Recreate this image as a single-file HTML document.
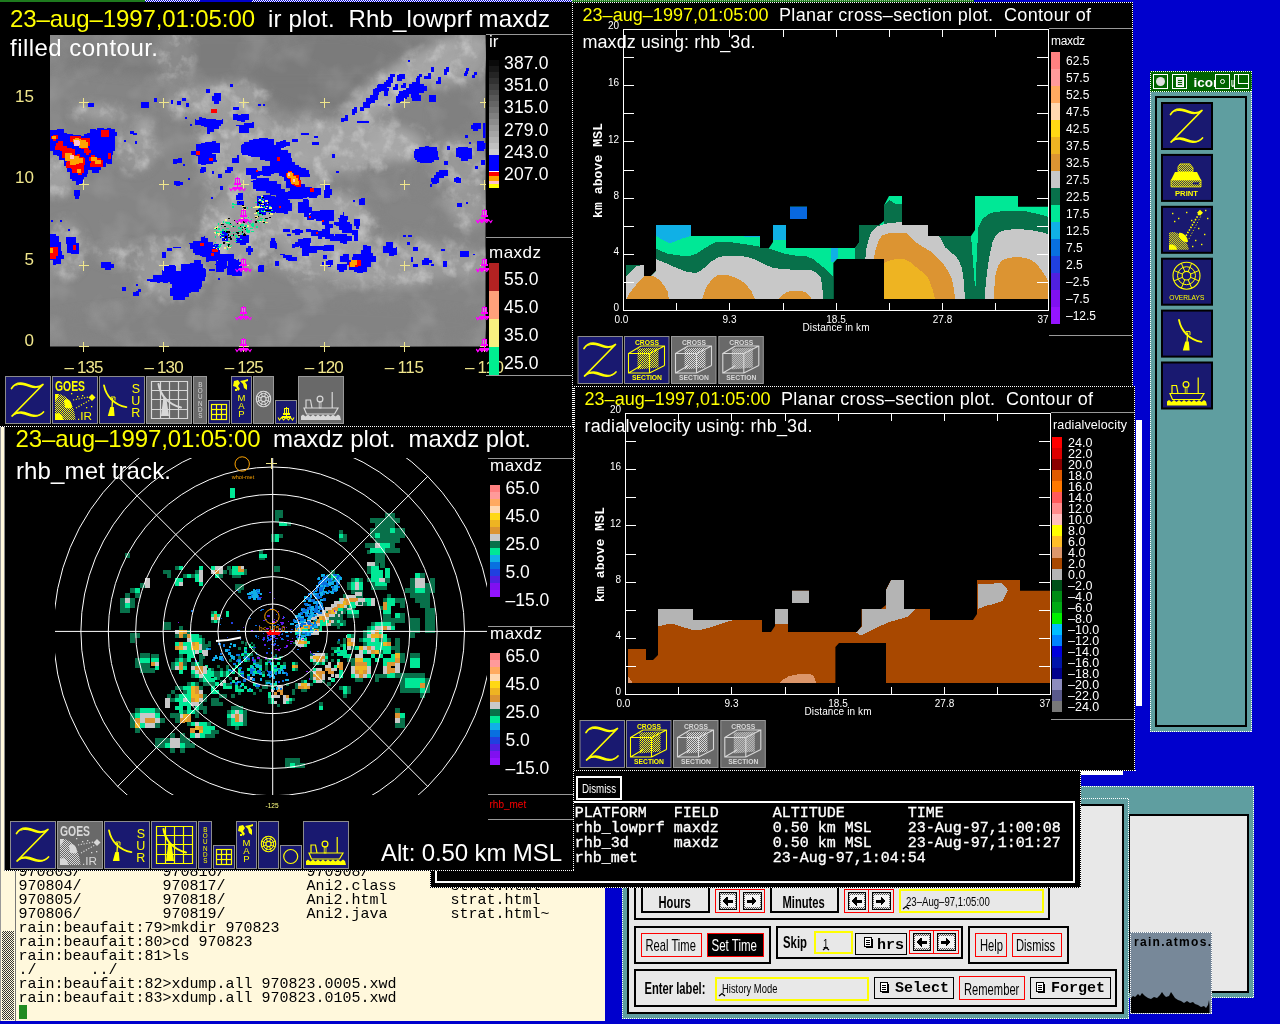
<!DOCTYPE html><html><head><meta charset="utf-8"><title>zebra display</title><style>html,body{margin:0;padding:0;background:#0000cd;overflow:hidden}svg{display:block;will-change:transform}text{font-family:"Liberation Sans",sans-serif;white-space:pre}.m{font-family:"Liberation Mono",monospace}.s{font-family:"Liberation Serif",serif}</style></head><body>
<svg width="1280" height="1024" viewBox="0 0 1280 1024">
<defs><pattern id="dy" width="2" height="2" patternUnits="userSpaceOnUse"><rect x="0" y="0" width="1" height="1" fill="#ffff00"/><rect x="1" y="1" width="1" height="1" fill="#ffff00"/></pattern><pattern id="dg" width="2" height="2" patternUnits="userSpaceOnUse"><rect x="0" y="0" width="1" height="1" fill="#d8d8d8"/><rect x="1" y="1" width="1" height="1" fill="#d8d8d8"/></pattern><pattern id="dk" width="2" height="2" patternUnits="userSpaceOnUse"><rect width="2" height="2" fill="#bbb"/><rect x="0" y="0" width="1" height="1" fill="#333"/><rect x="1" y="1" width="1" height="1" fill="#333"/></pattern><clipPath id="irclip"><rect x="50" y="35" width="435.5" height="311.5"/></clipPath><filter id="irblur" x="-10%" y="-10%" width="120%" height="120%"><feGaussianBlur stdDeviation="5"/></filter><filter id="irtex" x="0" y="0" width="100%" height="100%"><feTurbulence type="fractalNoise" baseFrequency="0.07" numOctaves="4" seed="3" result="n"/><feColorMatrix type="matrix" values="0 0 0 0 0.8  0 0 0 0 0.8  0 0 0 0 0.8  2.8 0 0 0 -1.3"/></filter><filter id="irtex2" x="0" y="0" width="100%" height="100%"><feTurbulence type="fractalNoise" baseFrequency="0.03" numOctaves="3" seed="11"/><feColorMatrix type="matrix" values="0 0 0 0 0.75  0 0 0 0 0.75  0 0 0 0 0.75  3 0 0 0 -1.3"/></filter><clipPath id="rdclip"><rect x="55" y="458" width="432" height="337"/></clipPath><clipPath id="xsclip"><path d="M626,299 V265 H644 V276 H651 L656,271 V225 H691 V236 H760 V248 H769 L773,242 V225 H786 V248 H855 L859.5,242 V225 H879 L884,221 V205.5 L889,196 H902 V225 H928 V236 H971 L975,230 V196 H1018 V206.7 H1048.5 V299 H884 V259 H837 L833.4,263 V299 Z M790,206.7 H807 V219 H790Z"/></clipPath><pattern id="sbd" width="2" height="2" patternUnits="userSpaceOnUse"><rect width="2" height="2" fill="#fff8dc"/><rect x="0" y="0" width="1" height="1" fill="#333"/><rect x="1" y="1" width="1" height="1" fill="#333"/></pattern><pattern id="btd" width="2" height="2" patternUnits="userSpaceOnUse"><rect width="2" height="2" fill="#e8e8e8"/><rect x="0" y="0" width="1" height="1" fill="#555"/><rect x="1" y="1" width="1" height="1" fill="#555"/></pattern></defs>
<rect x="0" y="0" width="1280" height="1024" fill="#0000cd" />
<g shape-rendering="crispEdges"><rect x="0" y="0" width="145" height="2" fill="#1e7a1e"/><line x1="145" y1="0.5" x2="572" y2="0.5" stroke="#fff" stroke-dasharray="1 1"/><line x1="146" y1="1.5" x2="572" y2="1.5" stroke="#fff" stroke-dasharray="1 1"/><rect x="200" y="0" width="52" height="2" fill="#0000cd"/><rect x="572" y="0" width="402" height="2" fill="#1e7a1e"/><line x1="572" y1="0.5" x2="974" y2="0.5" stroke="#9c9" stroke-dasharray="1 1"/></g>
<g shape-rendering="crispEdges"><rect x="1000" y="786" width="254" height="212" fill="#5f9ea0"/><rect x="1129" y="813.5" width="120" height="179" fill="#000"/><rect x="1130" y="815.5" width="117" height="175" fill="#e8e8e8"/><g stroke="#fff" stroke-dasharray="1 1"><line x1="1000" y1="786.5" x2="1254" y2="786.5"/><line x1="1253.5" y1="786" x2="1253.5" y2="998"/><line x1="1128" y1="997.5" x2="1254" y2="997.5"/></g></g>
<g shape-rendering="crispEdges"><rect x="622" y="798" width="507" height="221" fill="#5f9ea0"/><rect x="627" y="804" width="497" height="210" fill="#000"/><rect x="629" y="806" width="493" height="206" fill="#e8e8e8"/><g stroke="#fff" stroke-dasharray="1 1" fill="none"><rect x="622.5" y="798.5" width="506" height="220"/></g><rect x="635" y="861" width="414" height="58" fill="none" stroke="#000" stroke-width="2"/><rect x="642" y="881" width="67" height="31" fill="none" stroke="#000" stroke-width="2"/><rect x="771" y="881" width="67" height="31" fill="none" stroke="#000" stroke-width="2"/><rect x="715.5" y="889.5" width="24" height="23" fill="#e8e8e8" stroke="#ff0000" stroke-width="1"/><rect x="718.5" y="892" width="18" height="18" fill="url(#btd)"/><rect x="720.5" y="895" width="14" height="12" fill="#f4f4f4"/><rect x="719.0" y="892.5" width="17" height="17" fill="none" stroke="#000" stroke-width="1"/><path d="M722.5,901.0 l5,-4.5 v3 h5 v3 h-5 v3z" fill="#000"/><rect x="739.5" y="889.5" width="25" height="23" fill="#e8e8e8" stroke="#ff0000" stroke-width="1"/><rect x="742.5" y="892" width="19" height="18" fill="url(#btd)"/><rect x="744.5" y="895" width="15" height="12" fill="#f4f4f4"/><rect x="743.0" y="892.5" width="18" height="17" fill="none" stroke="#000" stroke-width="1"/><path d="M757.0,901.0 l-5,-4.5 v3 h-5 v3 h5 v3z" fill="#000"/><rect x="844.5" y="889.5" width="24" height="23" fill="#e8e8e8" stroke="#ff0000" stroke-width="1"/><rect x="847.5" y="892" width="18" height="18" fill="url(#btd)"/><rect x="849.5" y="895" width="14" height="12" fill="#f4f4f4"/><rect x="848.0" y="892.5" width="17" height="17" fill="none" stroke="#000" stroke-width="1"/><path d="M851.5,901.0 l5,-4.5 v3 h5 v3 h-5 v3z" fill="#000"/><rect x="868.5" y="889.5" width="25" height="23" fill="#e8e8e8" stroke="#ff0000" stroke-width="1"/><rect x="871.5" y="892" width="19" height="18" fill="url(#btd)"/><rect x="873.5" y="895" width="15" height="12" fill="#f4f4f4"/><rect x="872.0" y="892.5" width="18" height="17" fill="none" stroke="#000" stroke-width="1"/><path d="M886.0,901.0 l-5,-4.5 v3 h-5 v3 h5 v3z" fill="#000"/><rect x="899.5" y="890" width="143" height="22" fill="#e8e8e8" stroke="#ffff00" stroke-width="2"/><rect x="635" y="927" width="135" height="36" fill="none" stroke="#000" stroke-width="2"/><rect x="641.5" y="933.5" width="60" height="23" fill="#e8e8e8" stroke="#ff0000"/><rect x="707.5" y="933.5" width="56" height="23" fill="#000" stroke="#ff0000"/><rect x="777" y="927" width="185" height="31" fill="none" stroke="#000" stroke-width="2"/><rect x="815" y="931.5" width="37" height="21.5" fill="#e8e8e8" stroke="#ffff00" stroke-width="2"/><rect x="855.5" y="933.5" width="51" height="21" fill="#e8e8e8" stroke="#000"/><rect x="909.5" y="930.5" width="24" height="23" fill="#e8e8e8" stroke="#ff0000" stroke-width="1"/><rect x="912.5" y="933" width="18" height="18" fill="url(#btd)"/><rect x="914.5" y="936" width="14" height="12" fill="#f4f4f4"/><rect x="913.0" y="933.5" width="17" height="17" fill="none" stroke="#000" stroke-width="1"/><path d="M916.5,942.0 l5,-4.5 v3 h5 v3 h-5 v3z" fill="#000"/><rect x="933.5" y="930.5" width="25" height="23" fill="#e8e8e8" stroke="#ff0000" stroke-width="1"/><rect x="936.5" y="933" width="19" height="18" fill="url(#btd)"/><rect x="938.5" y="936" width="15" height="12" fill="#f4f4f4"/><rect x="937.0" y="933.5" width="18" height="17" fill="none" stroke="#000" stroke-width="1"/><path d="M951.0,942.0 l-5,-4.5 v3 h-5 v3 h5 v3z" fill="#000"/><rect x="969" y="927" width="99" height="36" fill="none" stroke="#000" stroke-width="2"/><rect x="975.5" y="933.5" width="31" height="23" fill="#e8e8e8" stroke="#ff0000"/><rect x="1012.5" y="933.5" width="49" height="23" fill="#e8e8e8" stroke="#ff0000"/><rect x="635" y="970" width="481" height="36" fill="none" stroke="#000" stroke-width="2"/><rect x="716" y="977.5" width="152" height="22" fill="#e8e8e8" stroke="#ffff00" stroke-width="2"/><rect x="874.5" y="977.5" width="79" height="21" fill="#e8e8e8" stroke="#000"/><rect x="959.5" y="976.5" width="65" height="23" fill="#e8e8e8" stroke="#ff0000"/><rect x="1030.5" y="977.5" width="80" height="21" fill="#e8e8e8" stroke="#000"/><rect x="864.5" y="937.5" width="7" height="9" fill="#fff" stroke="#000" stroke-width="1"/><rect x="866" y="947" width="7" height="1" fill="#000"/><rect x="872" y="939" width="1" height="9" fill="#000"/><rect x="866" y="940" width="4" height="1" fill="#000"/><rect x="866" y="942" width="4" height="1" fill="#000"/><rect x="866" y="944" width="4" height="1" fill="#000"/><rect x="880.5" y="982.5" width="7" height="9" fill="#fff" stroke="#000" stroke-width="1"/><rect x="882" y="992" width="7" height="1" fill="#000"/><rect x="888" y="984" width="1" height="9" fill="#000"/><rect x="882" y="985" width="4" height="1" fill="#000"/><rect x="882" y="987" width="4" height="1" fill="#000"/><rect x="882" y="989" width="4" height="1" fill="#000"/><rect x="1036.5" y="982.5" width="7" height="9" fill="#fff" stroke="#000" stroke-width="1"/><rect x="1038" y="992" width="7" height="1" fill="#000"/><rect x="1044" y="984" width="1" height="9" fill="#000"/><rect x="1038" y="985" width="4" height="1" fill="#000"/><rect x="1038" y="987" width="4" height="1" fill="#000"/><rect x="1038" y="989" width="4" height="1" fill="#000"/></g><text transform="translate(658.5,907.5) scale(0.7,1)" font-size="16" fill="#000" font-weight="bold">Hours</text><text transform="translate(782.5,907.5) scale(0.7,1)" font-size="16" fill="#000" font-weight="bold">Minutes</text><text transform="translate(906,906) scale(0.8,1)" font-size="12" fill="#000">23–Aug–97,1:05:00</text><path d="M903,909 l3,-2.5 l3,2.5" fill="none" stroke="#000" stroke-width="1.3"/><text transform="translate(645.5,951) scale(0.7,1)" font-size="16" fill="#000">Real Time</text><text transform="translate(711.5,951) scale(0.72,1)" font-size="16" fill="#fff">Set Time</text><text transform="translate(783,948) scale(0.71,1)" font-size="16" fill="#000" font-weight="bold">Skip</text><text transform="translate(823,948) scale(0.8,1)" font-size="12" fill="#000">1</text><path d="M823,950 l3,-2.5 l3,2.5" fill="none" stroke="#000" stroke-width="1.3"/><text class="m" x="877" y="949" font-size="15" font-weight="bold" fill="#000">hrs</text><text transform="translate(980,951) scale(0.7,1)" font-size="16" fill="#000">Help</text><text transform="translate(1016,951) scale(0.7,1)" font-size="16" fill="#000">Dismiss</text><text transform="translate(644.5,993.5) scale(0.7,1)" font-size="16" fill="#000" font-weight="bold">Enter label:</text><text transform="translate(722,993) scale(0.785,1)" font-size="12" fill="#000">History Mode</text><path d="M719,996 l3,-2.5 l3,2.5" fill="none" stroke="#000" stroke-width="1.3"/><text class="m" x="895" y="992" font-size="15" font-weight="bold" fill="#000" textLength="54" lengthAdjust="spacing">Select</text><text transform="translate(964,994.5) scale(0.7,1)" font-size="16" fill="#000">Remember</text><text class="m" x="1051" y="992" font-size="15" font-weight="bold" fill="#000" textLength="54" lengthAdjust="spacing">Forget</text>
<g shape-rendering="crispEdges"><rect x="1130" y="932" width="82" height="82" fill="#778899"/><g stroke="#fff" stroke-dasharray="1 1" fill="none"><rect x="1130.5" y="932.5" width="81" height="81"/></g></g><path d="M1131,1013 V998 l2,-2 l2,1 l3,-3 l2,2 l2,-3 l3,3 l3,2 l3,1 l3,-2 l3,1 l3,-3 l2,-3 l2,3 l2,2 l3,-1 l2,-4 l2,3 l2,3 l3,2 l3,1 l3,2 l3,-2 l3,2 l3,-1 l2,2 l3,1 l3,2 l3,-1 l2,2 l2,-3 l1,-5 l0.5,5 V1013Z" fill="#000"/><text x="1134" y="946" font-size="12" font-weight="bold" fill="#000" textLength="77" lengthAdjust="spacing">rain.atmos.</text>
<g shape-rendering="crispEdges"><rect x="0" y="427" width="605" height="594" fill="#fff8dc"/><rect x="0" y="427" width="1" height="594" fill="#999"/><rect x="15" y="870" width="1" height="151" fill="#777"/><rect x="2" y="931" width="12" height="89" fill="url(#sbd)"/><rect x="18.5" y="1005" width="8.5" height="14" fill="#228b22"/></g><text class="m" x="18.5" y="875.5" font-size="15" fill="#000">970803/         970816/         970908/         strat.htm</text><text class="m" x="18.5" y="889.5" font-size="15" fill="#000">970804/         970817/         Ani2.class      strat.html</text><text class="m" x="18.5" y="903.5" font-size="15" fill="#000">970805/         970818/         Ani2.html       strat.html</text><text class="m" x="18.5" y="917.5" font-size="15" fill="#000">970806/         970819/         Ani2.java       strat.html~</text><text class="m" x="18.5" y="931.5" font-size="15" fill="#000">rain:beaufait:79&gt;mkdir 970823</text><text class="m" x="18.5" y="945.5" font-size="15" fill="#000">rain:beaufait:80&gt;cd 970823</text><text class="m" x="18.5" y="959.5" font-size="15" fill="#000">rain:beaufait:81&gt;ls</text><text class="m" x="18.5" y="973.5" font-size="15" fill="#000">./      ../</text><text class="m" x="18.5" y="987.5" font-size="15" fill="#000">rain:beaufait:82&gt;xdump.all 970823.0005.xwd</text><text class="m" x="18.5" y="1001.5" font-size="15" fill="#000">rain:beaufait:83&gt;xdump.all 970823.0105.xwd</text>
<g shape-rendering="crispEdges"><rect x="430" y="771" width="651" height="117" fill="#000"/><g stroke="#fff" stroke-dasharray="1 1" fill="none"><rect x="430.5" y="770.5" width="650" height="117"/></g><rect x="436" y="801.5" width="638" height="80" fill="none" stroke="#fff" stroke-width="2"/><rect x="577" y="776.5" width="44" height="22" fill="none" stroke="#fff" stroke-width="2"/></g><text transform="translate(582,793) scale(0.78,1)" font-size="12.5" fill="#fff">Dismiss</text><text class="m" x="574.8" y="816.5" font-size="15" fill="#fff" stroke="#fff" stroke-width="0.35">PLATFORM   FIELD      ALTITUDE       TIME</text><text class="m" x="574.8" y="831.5" font-size="15" fill="#fff" stroke="#fff" stroke-width="0.35">rhb_lowprf maxdz      0.50 km MSL    23-Aug-97,1:00:08</text><text class="m" x="574.8" y="846.5" font-size="15" fill="#fff" stroke="#fff" stroke-width="0.35">rhb_3d     maxdz      0.50 km MSL    23-Aug-97,1:01:27</text><text class="m" x="574.8" y="861.5" font-size="15" fill="#fff" stroke="#fff" stroke-width="0.35">rhb_met               23-Aug-97,1:04:54</text>
<g shape-rendering="crispEdges"><rect x="1150" y="71" width="102" height="661" fill="#5f9ea0"/><rect x="1150" y="71" width="102" height="21" fill="#006400"/><g stroke="#fff" stroke-dasharray="1 1" fill="none"><rect x="1150.5" y="71.5" width="101" height="660"/><line x1="1150" y1="91.5" x2="1252" y2="91.5"/></g><rect x="1156" y="97" width="90" height="629" fill="none" stroke="#000" stroke-width="2"/><rect x="1153.5" y="74.5" width="14" height="14" fill="#006400" stroke="#fff" stroke-width="1"/><rect x="1172.5" y="74.5" width="14" height="14" fill="#006400" stroke="#fff" stroke-width="1"/><rect x="1215.5" y="74.5" width="14" height="14" fill="#006400" stroke="#fff" stroke-width="1"/><rect x="1234.5" y="74.5" width="14" height="14" fill="#006400" stroke="#fff" stroke-width="1"/></g><circle cx="1160.5" cy="81.5" r="4.5" fill="#ddd"/><rect x="1176.5" y="77.5" width="7" height="9" fill="#ddd" stroke="#fff" stroke-width="1"/><path d="M1178,80.5 h4 M1178,82.5 h4 M1178,84.5 h4" stroke="#006400" stroke-width="1"/><text x="1193.5" y="87" font-size="13.5" font-weight="bold" fill="#fff">icon</text><rect x="1215.5" y="75" width="36" height="14" fill="#006400"/><g shape-rendering="crispEdges"><rect x="1215.5" y="74.5" width="14" height="14" fill="#006400" stroke="#fff"/><rect x="1234.5" y="74.5" width="14" height="14" fill="#006400" stroke="#fff"/><rect x="1238.5" y="74.5" width="10" height="9" fill="#006400" stroke="#fff"/></g><text x="1231" y="87" font-size="13" font-weight="bold" fill="#fff" textLength="4" lengthAdjust="spacingAndGlyphs">u</text><circle cx="1222.5" cy="81.5" r="2" fill="none" stroke="#fff"/><g transform="translate(1161,102.0)"><rect x="1" y="1" width="50" height="46" fill="#191970" stroke="#000" stroke-width="2"/><g transform="translate(3,0)"><path d="M6.5,12.5 C9,8.5 14,6.2 20,7.8 C26,9.5 31,13.5 38,8.5 L7,40 C12,35.5 17,35 23,37.8 C29,40.5 34,41 38.5,36" fill="none" stroke="#ffff00" stroke-width="1.7" stroke-linejoin="round" stroke-linecap="round"/><path d="M9,10.5 C13,7 18,7 22,8.5 C27,10.5 31,12.5 36,10 C31,14 26,11.5 21,10 C16,8.5 12,9 9,10.5Z M9,38.5 C13,35 18,35.5 23,37.8 C28,40 33,40.5 37,37.5 C33,42 27,41.5 22,39.5 C17,37.5 13,37 9,38.5Z" fill="#ffff00"/></g></g><g transform="translate(1161,153.9)"><rect x="1" y="1" width="50" height="46" fill="#191970" stroke="#000" stroke-width="2"/><g transform="translate(3,0)"><path d="M16,10 h10 l3,4 v4 h-15 v-5z" fill="url(#dy)" stroke="#ffff00" stroke-width="0.8"/><path d="M11,18 h22 l4,8 h-30z" fill="#ffff00"/><path d="M7,26 h30 v7 h-30z" fill="url(#dy)" stroke="#ffff00" stroke-width="0.8"/><rect x="29" y="28.5" width="6" height="2" fill="#191970"/><text x="22.5" y="42.5" font-size="7.5" font-weight="bold" fill="#ffff00" text-anchor="middle" textLength="23" lengthAdjust="spacingAndGlyphs">PRINT</text></g></g><g transform="translate(1161,205.8)"><rect x="1" y="1" width="50" height="46" fill="#191970" stroke="#000" stroke-width="2"/><g transform="translate(3,0)"><path d="M5,44 L5,27 C12,24 22,30 25,44 Z" fill="url(#dy)"/><path d="M15,27 C19,26 24,31 24,36 C21,37 17,35 15,31Z M5,39 C9,38 13,40 13,44 L5,44Z" fill="#ffff00"/><path d="M22,30 L35,8" stroke="#ffff00" stroke-width="1.6" stroke-dasharray="1.5 1.5"/><path d="M25,33 L37,10" stroke="#ffff00" stroke-width="1" stroke-dasharray="1 2"/><path d="M36,4 l3,3 l-3,3 l-3,-3z" fill="#ffff00"/><rect x="8" y="7" width="1.4" height="1.4" fill="#ffff00"/><rect x="14" y="12" width="1.4" height="1.4" fill="#ffff00"/><rect x="22" y="6" width="1.4" height="1.4" fill="#ffff00"/><rect x="27" y="14" width="1.4" height="1.4" fill="#ffff00"/><rect x="41" y="4" width="1.4" height="1.4" fill="#ffff00"/><rect x="43" y="12" width="1.4" height="1.4" fill="#ffff00"/><rect x="34" y="22" width="1.4" height="1.4" fill="#ffff00"/><rect x="40" y="28" width="1.4" height="1.4" fill="#ffff00"/><rect x="31" y="34" width="1.4" height="1.4" fill="#ffff00"/><rect x="37" y="38" width="1.4" height="1.4" fill="#ffff00"/><rect x="28" y="40" width="1.4" height="1.4" fill="#ffff00"/><rect x="10" y="15" width="1.4" height="1.4" fill="#ffff00"/></g></g><g transform="translate(1161,257.7)"><rect x="1" y="1" width="50" height="46" fill="#191970" stroke="#000" stroke-width="2"/><g transform="translate(3,0)"><circle cx="22.5" cy="18" r="13.5" fill="none" stroke="#ffff00" stroke-width="1.1"/><circle cx="22.5" cy="18" r="9" fill="none" stroke="#ffff00" stroke-width="1"/><circle cx="22.5" cy="18" r="4.3" fill="none" stroke="#ffff00" stroke-width="1.1"/><line x1="26.5" y1="19.6" x2="35.0" y2="23.2" stroke="#ffff00" stroke-width="1"/><line x1="24.1" y1="22.0" x2="27.7" y2="30.5" stroke="#ffff00" stroke-width="1"/><line x1="20.9" y1="22.0" x2="17.3" y2="30.5" stroke="#ffff00" stroke-width="1"/><line x1="18.5" y1="19.6" x2="10.0" y2="23.2" stroke="#ffff00" stroke-width="1"/><line x1="18.5" y1="16.4" x2="10.0" y2="12.8" stroke="#ffff00" stroke-width="1"/><line x1="20.9" y1="14.0" x2="17.3" y2="5.5" stroke="#ffff00" stroke-width="1"/><line x1="24.1" y1="14.0" x2="27.7" y2="5.5" stroke="#ffff00" stroke-width="1"/><line x1="26.5" y1="16.4" x2="35.0" y2="12.8" stroke="#ffff00" stroke-width="1"/><text x="22.8" y="42.5" font-size="7.5" fill="#ffff00" text-anchor="middle" textLength="35" lengthAdjust="spacingAndGlyphs">OVERLAYS</text></g></g><g transform="translate(1161,309.6)"><rect x="1" y="1" width="50" height="46" fill="#191970" stroke="#000" stroke-width="2"/><g transform="translate(3,0)"><g transform="translate(10,1) scale(1.0)"><path d="M5,9.4 C7,20 15,29 27.4,31.2" fill="none" stroke="#ffff00" stroke-width="1.8" stroke-linecap="round"/><path d="M11.3,31 L14.8,31 L15.6,40 L8.8,40 Z" fill="#ffff00"/><path d="M13.6,22 L13,32" stroke="#ffff00" stroke-width="1.3"/><path d="M12,24 v-3 h4 v3.5" fill="none" stroke="#ffff00" stroke-width="1"/></g></g></g><g transform="translate(1161,361.5)"><rect x="1" y="1" width="50" height="46" fill="#191970" stroke="#000" stroke-width="2"/><g transform="translate(3,0)"><path d="M6,32 L40,32 L36.5,38 L8.5,38 Z" fill="none" stroke="#ffff00" stroke-width="1.2"/><path d="M8,32 L8,24 L12.5,24 L14,32" fill="none" stroke="#ffff00" stroke-width="1.2"/><circle cx="22" cy="23" r="2.9" fill="none" stroke="#ffff00" stroke-width="1.2"/><rect x="21.2" y="26" width="1.8" height="6" fill="none" stroke="#ffff00" stroke-width="0.8"/><line x1="34.2" y1="16" x2="34.2" y2="32" stroke="#ffff00" stroke-width="1.2"/><path d="M3,44 L3,40 l2,-1.5 l2.5,2 l2.5,-2 l2.5,2 l2.5,-2 l2.5,2 l2.5,-2 l2.5,2 l2.5,-2 l2.5,2 l2.5,-2 l2.5,2 l2.5,-2 l2.5,2 l2.5,-2 l2,1.5 L43,44 Z" fill="#ffff00"/></g></g>
<g shape-rendering="crispEdges"><rect x="1136" y="420" width="6" height="286" fill="#fff"/><rect x="1081" y="771" width="42" height="4" fill="#fff"/><line x1="1123" y1="770.5" x2="1136" y2="770.5" stroke="#fff" stroke-dasharray="1 1"/><rect x="573" y="387" width="1" height="40" fill="#000"/><line x1="573.5" y1="388" x2="573.5" y2="427" stroke="#fff" stroke-dasharray="1 1"/></g>
<g transform="translate(0,0)"><rect x="572" y="2" width="561" height="385" fill="#000"/><g clip-path="url(#xsclip)" shape-rendering="crispEdges"><rect x="620" y="190" width="435" height="112" fill="#00e896"/><rect x="790" y="206" width="18" height="14" fill="#0868e0"/><path d="M656,225 H691 V236 L682,238.5 L669.7,243.6 L656,236Z M773,225 H786 V239.5 H773Z M830.8,248 H838 V258 L833,262 H830.8Z M744,235 h16 v1.5 h-16z" fill="#10b0e6"/><path d="M626,265 H644 V300 H626Z M656,248.7 L667.7,253.8 L680,255.5 L690,255.9 L696,254 L702.5,249.7 L710,245 L716.9,241.5 L725,241.5 L733.3,242.5 L747,244.5 L760,246.6 L770,248.7 L784.5,253.8 L795,255.5 L805,255.9 L813,259 L823,267 L832.7,276.4 L833.4,300 L656,300Z M855,259 V247.7 L859.5,241.5 V225 H884 V205.5 L889,200 L895,203.5 L902,204.5 V225 H928 V236 H971 L971.2,237.4 L973,262 L975.3,290.7 L976.5,262 L978.4,227.2 L982.5,219 L990.7,212.8 L1005,210.8 L1025.5,211.2 L1040,214.5 L1049,217 V300 H855Z" fill="#08704a"/><path d="M626,276.4 L631,271 L637,266 L643.7,265 H644 V300 H626Z M648,280 L657,268 V280Z M656,259 L667.7,264 L678,268.5 L688,272.3 L696.4,272.7 L701,270.5 L706.6,266 L712,261 L719,257 L726,255.8 L733.3,255.5 L740,256 L747.6,257 L754,259 L760,262 L767,265.5 L774.3,268.2 L790,269.5 L811.2,270.2 L816,272.5 L820.4,276.4 L822,285 L823.5,300 L656,300Z M865.2,259 L866.6,247.7 L868.5,240 L870.7,233.3 L874,229 L877.9,226.1 L884,224 L890.2,223 L902,222 V225 H928 V236 L939.4,236.4 L942,241 L945.6,247.7 L951,252.5 L955.8,255.9 L959.5,262 L962,268.2 L964,283 L965,300 H865Z M984.5,300 L985.8,283 L987.6,268.2 L990,253 L992.7,241.5 L995.5,236 L998.9,232.3 L1005,230.3 L1013.2,229.2 L1022,229.3 L1031.7,230.2 L1040,231.8 L1049,234.3 V300Z" fill="#c8c8c8"/><path d="M626.2,300 L630,292.5 L634.9,286.6 L639,281 L644,276.4 L649,275.5 L653.7,276 L657.5,278.5 L661.5,282.5 L665,287 L667.7,291.7 L669,300Z M702,300 L704,293 L706.6,286.6 L711,280.5 L716.9,275.3 L724,274.6 L731.2,276 L737.5,278.5 L743.5,282.5 L748,287 L751.7,291.7 L755.2,300Z M778,300 L782.5,295 L787.6,291.7 L796,290.7 L805,291.7 L809,295 L812.2,300Z M873.8,259 L875,252 L876.9,245.6 L879,240 L882,235.4 L887.5,233.6 L894.3,232.9 L906.6,233.3 L910.5,237 L914.8,241.5 L922.5,246.5 L931.2,251.8 L937.5,257.5 L943.5,264 L948,271 L951.7,278.4 L953.8,288 L955.2,300 H873Z M993.8,300 L994.5,286 L995.8,272.3 L998.5,265.5 L1002,260 L1009,257.8 L1017.3,256.9 L1025,257.8 L1031.7,260 L1038,265.5 L1043,272.3 L1046,277 L1049,282.5 V300Z" fill="#dc9432"/><path d="M884,263 L888,261 L892.3,259.6 L904.6,259 L910,262 L914.8,266 L921,271 L927,276.4 L930,282.5 L932.3,288.7 L935.3,300 H884Z" fill="#eeb422"/></g><g shape-rendering="crispEdges" stroke="#fff" stroke-width="1" fill="none"><rect x="623.5" y="29.5" width="425" height="281"/><line x1="623" y1="57.6" x2="634" y2="57.6"/><line x1="1037" y1="57.6" x2="1049" y2="57.6"/><line x1="623" y1="85.7" x2="634" y2="85.7"/><line x1="1037" y1="85.7" x2="1049" y2="85.7"/><line x1="623" y1="113.8" x2="634" y2="113.8"/><line x1="1037" y1="113.8" x2="1049" y2="113.8"/><line x1="623" y1="141.9" x2="634" y2="141.9"/><line x1="1037" y1="141.9" x2="1049" y2="141.9"/><line x1="623" y1="170.0" x2="634" y2="170.0"/><line x1="1037" y1="170.0" x2="1049" y2="170.0"/><line x1="623" y1="198.1" x2="634" y2="198.1"/><line x1="1037" y1="198.1" x2="1049" y2="198.1"/><line x1="623" y1="226.2" x2="634" y2="226.2"/><line x1="1037" y1="226.2" x2="1049" y2="226.2"/><line x1="623" y1="254.3" x2="634" y2="254.3"/><line x1="1037" y1="254.3" x2="1049" y2="254.3"/><line x1="623" y1="282.4" x2="634" y2="282.4"/><line x1="1037" y1="282.4" x2="1049" y2="282.4"/><line x1="676.6" y1="30" x2="676.6" y2="37"/><line x1="676.6" y1="303" x2="676.6" y2="310"/><line x1="729.8" y1="30" x2="729.8" y2="37"/><line x1="729.8" y1="303" x2="729.8" y2="310"/><line x1="783.0" y1="30" x2="783.0" y2="37"/><line x1="783.0" y1="303" x2="783.0" y2="310"/><line x1="836.1" y1="30" x2="836.1" y2="37"/><line x1="836.1" y1="303" x2="836.1" y2="310"/><line x1="889.2" y1="30" x2="889.2" y2="37"/><line x1="889.2" y1="303" x2="889.2" y2="310"/><line x1="942.4" y1="30" x2="942.4" y2="37"/><line x1="942.4" y1="303" x2="942.4" y2="310"/><line x1="995.5" y1="30" x2="995.5" y2="37"/><line x1="995.5" y1="303" x2="995.5" y2="310"/></g><text x="582.5" y="20.5" font-size="18" fill="#ffff00" textLength="186" lengthAdjust="spacing">23–aug–1997,01:05:00</text><text x="779" y="20.5" font-size="18" fill="#fff" textLength="312" lengthAdjust="spacing">Planar cross–section plot.  Contour of</text><text x="582.5" y="47.5" font-size="18" fill="#fff" textLength="173" lengthAdjust="spacing">maxdz using: rhb_3d.</text><text x="619" y="29" font-size="10" fill="#fff" text-anchor="end">20</text><text x="619" y="85.5" font-size="10" fill="#fff" text-anchor="end">16</text><text x="619" y="142.5" font-size="10" fill="#fff" text-anchor="end">12</text><text x="619" y="198.5" font-size="10" fill="#fff" text-anchor="end">8</text><text x="619" y="255" font-size="10" fill="#fff" text-anchor="end">4</text><text x="619" y="311" font-size="10" fill="#fff" text-anchor="end">0</text><text x="614.5" y="323" font-size="10" fill="#fff" text-anchor="start">0.0</text><text x="729.5" y="323" font-size="10" fill="#fff" text-anchor="middle">9.3</text><text x="836" y="323" font-size="10" fill="#fff" text-anchor="middle">18.5</text><text x="942.5" y="323" font-size="10" fill="#fff" text-anchor="middle">27.8</text><text x="1048.5" y="323" font-size="10" fill="#fff" text-anchor="end">37</text><text x="836" y="331" font-size="10" fill="#fff" text-anchor="middle" textLength="67" lengthAdjust="spacing">Distance in km</text><text class="m" transform="translate(602,218) rotate(-90)" font-size="13" font-weight="bold" fill="#fff" textLength="95" lengthAdjust="spacing">km above MSL</text><g shape-rendering="crispEdges"><line x1="1049" y1="28.5" x2="1132" y2="28.5" stroke="#999" stroke-width="1"/><line x1="1049" y1="335.5" x2="1132" y2="335.5" stroke="#999" stroke-width="1"/><rect x="1050.5" y="52" width="9.5" height="17" fill="#ff8080"/><rect x="1050.5" y="69" width="9.5" height="17" fill="#ff9a9a"/><rect x="1050.5" y="86" width="9.5" height="17" fill="#ffaa60"/><rect x="1050.5" y="103" width="9.5" height="17" fill="#ffd8b0"/><rect x="1050.5" y="120" width="9.5" height="17" fill="#ffd814"/><rect x="1050.5" y="137" width="9.5" height="17" fill="#eeb422"/><rect x="1050.5" y="154" width="9.5" height="17" fill="#dc9432"/><rect x="1050.5" y="171" width="9.5" height="17" fill="#c8c8c8"/><rect x="1050.5" y="188" width="9.5" height="17" fill="#08704a"/><rect x="1050.5" y="205" width="9.5" height="17" fill="#00e896"/><rect x="1050.5" y="222" width="9.5" height="17" fill="#10b0e6"/><rect x="1050.5" y="239" width="9.5" height="17" fill="#0870e0"/><rect x="1050.5" y="256" width="9.5" height="17" fill="#2040e0"/><rect x="1050.5" y="273" width="9.5" height="17" fill="#5020e0"/><rect x="1050.5" y="290" width="9.5" height="17" fill="#8010f0"/><rect x="1050.5" y="307" width="9.5" height="17" fill="#9414ff"/></g><text x="1051" y="45" font-size="12" fill="#fff" textLength="34" lengthAdjust="spacing">maxdz</text><text x="1066" y="65" font-size="12" fill="#fff">62.5</text><text x="1066" y="82" font-size="12" fill="#fff">57.5</text><text x="1066" y="99" font-size="12" fill="#fff">52.5</text><text x="1066" y="116" font-size="12" fill="#fff">47.5</text><text x="1066" y="133" font-size="12" fill="#fff">42.5</text><text x="1066" y="150" font-size="12" fill="#fff">37.5</text><text x="1066" y="167" font-size="12" fill="#fff">32.5</text><text x="1066" y="184" font-size="12" fill="#fff">27.5</text><text x="1066" y="201" font-size="12" fill="#fff">22.5</text><text x="1066" y="218" font-size="12" fill="#fff">17.5</text><text x="1066" y="235" font-size="12" fill="#fff">12.5</text><text x="1066" y="252" font-size="12" fill="#fff">7.5</text><text x="1066" y="269" font-size="12" fill="#fff">2.5</text><text x="1066" y="286" font-size="12" fill="#fff">–2.5</text><text x="1066" y="303" font-size="12" fill="#fff">–7.5</text><text x="1066" y="320" font-size="12" fill="#fff">–12.5</text><g transform="translate(577.5,336)"><rect x="0.5" y="0.5" width="44.5" height="47" fill="#191970" stroke="#8c8c8c" stroke-width="1"/><path d="M6.5,12.5 C9,8.5 14,6.2 20,7.8 C26,9.5 31,13.5 38,8.5 L7,40 C12,35.5 17,35 23,37.8 C29,40.5 34,41 38.5,36" fill="none" stroke="#ffff00" stroke-width="1.7" stroke-linejoin="round" stroke-linecap="round"/><path d="M9,10.5 C13,7 18,7 22,8.5 C27,10.5 31,12.5 36,10 C31,14 26,11.5 21,10 C16,8.5 12,9 9,10.5Z M9,38.5 C13,35 18,35.5 23,37.8 C28,40 33,40.5 37,37.5 C33,42 27,41.5 22,39.5 C17,37.5 13,37 9,38.5Z" fill="#ffff00"/></g><g transform="translate(624,336)"><rect x="0.5" y="0.5" width="44.5" height="47" fill="#191970" stroke="#8c8c8c" stroke-width="1"/><text x="23" y="9.2" font-size="7.2" font-weight="bold" fill="#ffff00" text-anchor="middle" textLength="24" lengthAdjust="spacingAndGlyphs">CROSS</text><text x="23" y="44" font-size="7.2" font-weight="bold" fill="#ffff00" text-anchor="middle" textLength="30" lengthAdjust="spacingAndGlyphs">SECTION</text><path d="M13.5,12.5 L34.5,11.5 L34.5,31.5 L13.5,33.5 Z" fill="url(#dy)"/><path d="M4.5,17.5 H25.5 V37 H4.5 Z M17,10 H40.5 V29.5 M4.5,17.5 L17,10 M25.5,17.5 L40.5,10 M25.5,37 L40.5,29.5 M4.5,37 L17,29.8" fill="none" stroke="#ffff00" stroke-width="1.1"/></g><g transform="translate(671,336)"><rect x="0.5" y="0.5" width="44.5" height="47" fill="#696969" stroke="#999" stroke-width="1"/><text x="23" y="9.2" font-size="7.2" font-weight="bold" fill="#d8d8d8" text-anchor="middle" textLength="24" lengthAdjust="spacingAndGlyphs">CROSS</text><text x="23" y="44" font-size="7.2" font-weight="bold" fill="#d8d8d8" text-anchor="middle" textLength="30" lengthAdjust="spacingAndGlyphs">SECTION</text><path d="M13.5,12.5 L34.5,11.5 L34.5,31.5 L13.5,33.5 Z" fill="url(#dg)"/><path d="M4.5,17.5 H25.5 V37 H4.5 Z M17,10 H40.5 V29.5 M4.5,17.5 L17,10 M25.5,17.5 L40.5,10 M25.5,37 L40.5,29.5 M4.5,37 L17,29.8" fill="none" stroke="#d8d8d8" stroke-width="1.1"/></g><g transform="translate(718.3,336)"><rect x="0.5" y="0.5" width="44.5" height="47" fill="#696969" stroke="#999" stroke-width="1"/><text x="23" y="9.2" font-size="7.2" font-weight="bold" fill="#d8d8d8" text-anchor="middle" textLength="24" lengthAdjust="spacingAndGlyphs">CROSS</text><text x="23" y="44" font-size="7.2" font-weight="bold" fill="#d8d8d8" text-anchor="middle" textLength="30" lengthAdjust="spacingAndGlyphs">SECTION</text><path d="M13.5,12.5 L34.5,11.5 L34.5,31.5 L13.5,33.5 Z" fill="url(#dg)"/><path d="M4.5,17.5 H25.5 V37 H4.5 Z M17,10 H40.5 V29.5 M4.5,17.5 L17,10 M25.5,17.5 L40.5,10 M25.5,37 L40.5,29.5 M4.5,37 L17,29.8" fill="none" stroke="#d8d8d8" stroke-width="1.1"/></g><g stroke="#fff" stroke-width="1" stroke-dasharray="1 1"><line x1="572.5" y1="2" x2="572.5" y2="387"/><line x1="572" y1="386.5" x2="1133" y2="386.5"/><line x1="1132.5" y1="2" x2="1132.5" y2="387"/><line x1="572" y1="2.5" x2="1133" y2="2.5"/></g></g>
<g transform="translate(2,384)"><rect x="572" y="2" width="561" height="385" fill="#000"/><g clip-path="url(#xsclip)" shape-rendering="crispEdges"><rect x="620" y="190" width="435" height="112" fill="#a84800"/><path d="M656,225 H691 V236 H731.5 L721,239 L710,243 L700,245.5 L692.8,246.5 L684,244 L671.3,239.8 L664,240.5 L656,242.6Z M773,225 H786 V240 H773Z M790,206 H808 V220 H790Z M884,225 V205.5 L889,196 H902 V225 H913.8 L905,233 L886,238.4 L872,245 L858.1,251.7 L854.1,248.2 L859.9,242.4 V225Z M975.7,200 L985,199.6 L1000.2,199.4 L1003.5,202.5 L1005.5,206.5 L1003,212 L1000.2,217.2 L992,220 L984.2,221.7 L975.7,225.1Z M760,246 l9,2 l-9,0z" fill="#b4b4b4"/><path d="M777.7,299 L782,295 L787.3,292 L797,290 L806.7,289.5 L810,291 L812.1,293 L813.3,296 L813.8,299Z M626,292 L630.5,299 H626Z" fill="#dc966a"/></g><g shape-rendering="crispEdges" stroke="#fff" stroke-width="1" fill="none"><rect x="623.5" y="29.5" width="425" height="281"/><line x1="623" y1="57.6" x2="634" y2="57.6"/><line x1="1037" y1="57.6" x2="1049" y2="57.6"/><line x1="623" y1="85.7" x2="634" y2="85.7"/><line x1="1037" y1="85.7" x2="1049" y2="85.7"/><line x1="623" y1="113.8" x2="634" y2="113.8"/><line x1="1037" y1="113.8" x2="1049" y2="113.8"/><line x1="623" y1="141.9" x2="634" y2="141.9"/><line x1="1037" y1="141.9" x2="1049" y2="141.9"/><line x1="623" y1="170.0" x2="634" y2="170.0"/><line x1="1037" y1="170.0" x2="1049" y2="170.0"/><line x1="623" y1="198.1" x2="634" y2="198.1"/><line x1="1037" y1="198.1" x2="1049" y2="198.1"/><line x1="623" y1="226.2" x2="634" y2="226.2"/><line x1="1037" y1="226.2" x2="1049" y2="226.2"/><line x1="623" y1="254.3" x2="634" y2="254.3"/><line x1="1037" y1="254.3" x2="1049" y2="254.3"/><line x1="623" y1="282.4" x2="634" y2="282.4"/><line x1="1037" y1="282.4" x2="1049" y2="282.4"/><line x1="676.6" y1="30" x2="676.6" y2="37"/><line x1="676.6" y1="303" x2="676.6" y2="310"/><line x1="729.8" y1="30" x2="729.8" y2="37"/><line x1="729.8" y1="303" x2="729.8" y2="310"/><line x1="783.0" y1="30" x2="783.0" y2="37"/><line x1="783.0" y1="303" x2="783.0" y2="310"/><line x1="836.1" y1="30" x2="836.1" y2="37"/><line x1="836.1" y1="303" x2="836.1" y2="310"/><line x1="889.2" y1="30" x2="889.2" y2="37"/><line x1="889.2" y1="303" x2="889.2" y2="310"/><line x1="942.4" y1="30" x2="942.4" y2="37"/><line x1="942.4" y1="303" x2="942.4" y2="310"/><line x1="995.5" y1="30" x2="995.5" y2="37"/><line x1="995.5" y1="303" x2="995.5" y2="310"/></g><text x="582.5" y="20.5" font-size="18" fill="#ffff00" textLength="186" lengthAdjust="spacing">23–aug–1997,01:05:00</text><text x="779" y="20.5" font-size="18" fill="#fff" textLength="312" lengthAdjust="spacing">Planar cross–section plot.  Contour of</text><text x="582.5" y="47.5" font-size="18" fill="#fff" textLength="228" lengthAdjust="spacing">radialvelocity using: rhb_3d.</text><text x="619" y="29" font-size="10" fill="#fff" text-anchor="end">20</text><text x="619" y="85.5" font-size="10" fill="#fff" text-anchor="end">16</text><text x="619" y="142.5" font-size="10" fill="#fff" text-anchor="end">12</text><text x="619" y="198.5" font-size="10" fill="#fff" text-anchor="end">8</text><text x="619" y="255" font-size="10" fill="#fff" text-anchor="end">4</text><text x="619" y="311" font-size="10" fill="#fff" text-anchor="end">0</text><text x="614.5" y="323" font-size="10" fill="#fff" text-anchor="start">0.0</text><text x="729.5" y="323" font-size="10" fill="#fff" text-anchor="middle">9.3</text><text x="836" y="323" font-size="10" fill="#fff" text-anchor="middle">18.5</text><text x="942.5" y="323" font-size="10" fill="#fff" text-anchor="middle">27.8</text><text x="1048.5" y="323" font-size="10" fill="#fff" text-anchor="end">37</text><text x="836" y="331" font-size="10" fill="#fff" text-anchor="middle" textLength="67" lengthAdjust="spacing">Distance in km</text><text class="m" transform="translate(602,218) rotate(-90)" font-size="13" font-weight="bold" fill="#fff" textLength="95" lengthAdjust="spacing">km above MSL</text><g shape-rendering="crispEdges"><line x1="1049" y1="28.5" x2="1132" y2="28.5" stroke="#999" stroke-width="1"/><line x1="1049" y1="335.5" x2="1132" y2="335.5" stroke="#999" stroke-width="1"/><rect x="1050" y="52.5" width="10" height="11" fill="#ff0000"/><rect x="1050" y="63.5" width="10" height="11" fill="#dd0000"/><rect x="1050" y="74.5" width="10" height="11" fill="#8b0000"/><rect x="1050" y="85.5" width="10" height="11" fill="#e05a00"/><rect x="1050" y="96.5" width="10" height="11" fill="#ff7800"/><rect x="1050" y="107.5" width="10" height="11" fill="#ff5a5a"/><rect x="1050" y="118.5" width="10" height="11" fill="#ff8c8c"/><rect x="1050" y="129.5" width="10" height="11" fill="#ffbebe"/><rect x="1050" y="140.5" width="10" height="11" fill="#ffff00"/><rect x="1050" y="151.5" width="10" height="11" fill="#ffbe28"/><rect x="1050" y="162.5" width="10" height="11" fill="#dc966a"/><rect x="1050" y="173.5" width="10" height="11" fill="#a84800"/><rect x="1050" y="184.5" width="10" height="11" fill="#b4b4b4"/><rect x="1050" y="195.5" width="10" height="11" fill="#005018"/><rect x="1050" y="206.5" width="10" height="11" fill="#008c14"/><rect x="1050" y="217.5" width="10" height="11" fill="#00aa14"/><rect x="1050" y="228.5" width="10" height="11" fill="#00f000"/><rect x="1050" y="239.5" width="10" height="11" fill="#00beff"/><rect x="1050" y="250.5" width="10" height="11" fill="#0082ff"/><rect x="1050" y="261.5" width="10" height="11" fill="#0000dc"/><rect x="1050" y="272.5" width="10" height="11" fill="#0014aa"/><rect x="1050" y="283.5" width="10" height="11" fill="#00008c"/><rect x="1050" y="294.5" width="10" height="11" fill="#8c8cbe"/><rect x="1050" y="305.5" width="10" height="11" fill="#5a5a8c"/><rect x="1050" y="316.5" width="10" height="11" fill="#787878"/></g><text x="1051" y="45" font-size="12.5" fill="#fff" textLength="74" lengthAdjust="spacing">radialvelocity</text><text x="1066" y="62.5" font-size="12.5" fill="#fff">24.0</text><text x="1066" y="73.5" font-size="12.5" fill="#fff">22.0</text><text x="1066" y="84.5" font-size="12.5" fill="#fff">20.0</text><text x="1066" y="95.5" font-size="12.5" fill="#fff">18.0</text><text x="1066" y="106.5" font-size="12.5" fill="#fff">16.0</text><text x="1066" y="117.5" font-size="12.5" fill="#fff">14.0</text><text x="1066" y="128.5" font-size="12.5" fill="#fff">12.0</text><text x="1066" y="139.5" font-size="12.5" fill="#fff">10.0</text><text x="1066" y="150.5" font-size="12.5" fill="#fff">8.0</text><text x="1066" y="161.5" font-size="12.5" fill="#fff">6.0</text><text x="1066" y="172.5" font-size="12.5" fill="#fff">4.0</text><text x="1066" y="183.5" font-size="12.5" fill="#fff">2.0</text><text x="1066" y="194.5" font-size="12.5" fill="#fff">0.0</text><text x="1066" y="205.5" font-size="12.5" fill="#fff">–2.0</text><text x="1066" y="216.5" font-size="12.5" fill="#fff">–4.0</text><text x="1066" y="227.5" font-size="12.5" fill="#fff">–6.0</text><text x="1066" y="238.5" font-size="12.5" fill="#fff">–8.0</text><text x="1066" y="249.5" font-size="12.5" fill="#fff">–10.0</text><text x="1066" y="260.5" font-size="12.5" fill="#fff">–12.0</text><text x="1066" y="271.5" font-size="12.5" fill="#fff">–14.0</text><text x="1066" y="282.5" font-size="12.5" fill="#fff">–16.0</text><text x="1066" y="293.5" font-size="12.5" fill="#fff">–18.0</text><text x="1066" y="304.5" font-size="12.5" fill="#fff">–20.0</text><text x="1066" y="315.5" font-size="12.5" fill="#fff">–22.0</text><text x="1066" y="326.5" font-size="12.5" fill="#fff">–24.0</text><g transform="translate(577.5,336)"><rect x="0.5" y="0.5" width="44.5" height="47" fill="#191970" stroke="#8c8c8c" stroke-width="1"/><path d="M6.5,12.5 C9,8.5 14,6.2 20,7.8 C26,9.5 31,13.5 38,8.5 L7,40 C12,35.5 17,35 23,37.8 C29,40.5 34,41 38.5,36" fill="none" stroke="#ffff00" stroke-width="1.7" stroke-linejoin="round" stroke-linecap="round"/><path d="M9,10.5 C13,7 18,7 22,8.5 C27,10.5 31,12.5 36,10 C31,14 26,11.5 21,10 C16,8.5 12,9 9,10.5Z M9,38.5 C13,35 18,35.5 23,37.8 C28,40 33,40.5 37,37.5 C33,42 27,41.5 22,39.5 C17,37.5 13,37 9,38.5Z" fill="#ffff00"/></g><g transform="translate(624,336)"><rect x="0.5" y="0.5" width="44.5" height="47" fill="#191970" stroke="#8c8c8c" stroke-width="1"/><text x="23" y="9.2" font-size="7.2" font-weight="bold" fill="#ffff00" text-anchor="middle" textLength="24" lengthAdjust="spacingAndGlyphs">CROSS</text><text x="23" y="44" font-size="7.2" font-weight="bold" fill="#ffff00" text-anchor="middle" textLength="30" lengthAdjust="spacingAndGlyphs">SECTION</text><path d="M13.5,12.5 L34.5,11.5 L34.5,31.5 L13.5,33.5 Z" fill="url(#dy)"/><path d="M4.5,17.5 H25.5 V37 H4.5 Z M17,10 H40.5 V29.5 M4.5,17.5 L17,10 M25.5,17.5 L40.5,10 M25.5,37 L40.5,29.5 M4.5,37 L17,29.8" fill="none" stroke="#ffff00" stroke-width="1.1"/></g><g transform="translate(671,336)"><rect x="0.5" y="0.5" width="44.5" height="47" fill="#696969" stroke="#999" stroke-width="1"/><text x="23" y="9.2" font-size="7.2" font-weight="bold" fill="#d8d8d8" text-anchor="middle" textLength="24" lengthAdjust="spacingAndGlyphs">CROSS</text><text x="23" y="44" font-size="7.2" font-weight="bold" fill="#d8d8d8" text-anchor="middle" textLength="30" lengthAdjust="spacingAndGlyphs">SECTION</text><path d="M13.5,12.5 L34.5,11.5 L34.5,31.5 L13.5,33.5 Z" fill="url(#dg)"/><path d="M4.5,17.5 H25.5 V37 H4.5 Z M17,10 H40.5 V29.5 M4.5,17.5 L17,10 M25.5,17.5 L40.5,10 M25.5,37 L40.5,29.5 M4.5,37 L17,29.8" fill="none" stroke="#d8d8d8" stroke-width="1.1"/></g><g transform="translate(718.3,336)"><rect x="0.5" y="0.5" width="44.5" height="47" fill="#696969" stroke="#999" stroke-width="1"/><text x="23" y="9.2" font-size="7.2" font-weight="bold" fill="#d8d8d8" text-anchor="middle" textLength="24" lengthAdjust="spacingAndGlyphs">CROSS</text><text x="23" y="44" font-size="7.2" font-weight="bold" fill="#d8d8d8" text-anchor="middle" textLength="30" lengthAdjust="spacingAndGlyphs">SECTION</text><path d="M13.5,12.5 L34.5,11.5 L34.5,31.5 L13.5,33.5 Z" fill="url(#dg)"/><path d="M4.5,17.5 H25.5 V37 H4.5 Z M17,10 H40.5 V29.5 M4.5,17.5 L17,10 M25.5,17.5 L40.5,10 M25.5,37 L40.5,29.5 M4.5,37 L17,29.8" fill="none" stroke="#d8d8d8" stroke-width="1.1"/></g><g stroke="#fff" stroke-width="1" stroke-dasharray="1 1"><line x1="572.5" y1="2" x2="572.5" y2="387"/><line x1="572" y1="386.5" x2="1133" y2="386.5"/><line x1="1132.5" y1="2" x2="1132.5" y2="387"/><line x1="572" y1="2.5" x2="1133" y2="2.5"/></g></g>
<g><rect x="0" y="2" width="573" height="425" fill="#000"/><g clip-path="url(#irclip)"><rect x="50" y="35" width="436" height="312" fill="#858585"/><g filter="url(#irblur)"><ellipse cx="268" cy="56" rx="230" ry="24" fill="#7b7b7b" opacity="0.9" transform="rotate(0 268 56)"/><ellipse cx="330" cy="75" rx="75" ry="40" fill="#7a7a7a" opacity="0.95" transform="rotate(0 330 75)"/><ellipse cx="175" cy="55" rx="18" ry="25" fill="#949494" opacity="0.6" transform="rotate(10 175 55)"/><ellipse cx="98" cy="112" rx="28" ry="7" fill="#9d9d9d" opacity="0.8" transform="rotate(0 98 112)"/><ellipse cx="142" cy="136" rx="9" ry="20" fill="#adadad" opacity="0.85" transform="rotate(15 142 136)"/><ellipse cx="215" cy="100" rx="50" ry="16" fill="#9d9d9d" opacity="0.85" transform="rotate(-8 215 100)"/><ellipse cx="58" cy="175" rx="14" ry="22" fill="#9f9f9f" opacity="0.8" transform="rotate(0 58 175)"/><ellipse cx="135" cy="152" rx="20" ry="20" fill="#9a9a9a" opacity="0.7" transform="rotate(0 135 152)"/><ellipse cx="240" cy="150" rx="40" ry="45" fill="#a0a0a0" opacity="0.8" transform="rotate(0 240 150)"/><ellipse cx="400" cy="82" rx="70" ry="17" fill="#a9a9a9" opacity="0.9" transform="rotate(-34 400 82)"/><ellipse cx="455" cy="60" rx="35" ry="24" fill="#a4a4a4" opacity="0.85" transform="rotate(-20 455 60)"/><ellipse cx="345" cy="145" rx="80" ry="26" fill="#a6a6a6" opacity="0.9" transform="rotate(0 345 145)"/><ellipse cx="300" cy="160" rx="40" ry="30" fill="#a2a2a2" opacity="0.7" transform="rotate(0 300 160)"/><ellipse cx="455" cy="115" rx="22" ry="28" fill="#808080" opacity="0.9" transform="rotate(10 455 115)"/><ellipse cx="385" cy="178" rx="24" ry="20" fill="#828282" opacity="0.9" transform="rotate(0 385 178)"/><ellipse cx="460" cy="165" rx="26" ry="26" fill="#9c9c9c" opacity="0.7" transform="rotate(0 460 165)"/><ellipse cx="170" cy="268" rx="36" ry="30" fill="#9d9d9d" opacity="0.8" transform="rotate(0 170 268)"/><ellipse cx="66" cy="248" rx="18" ry="28" fill="#9c9c9c" opacity="0.75" transform="rotate(0 66 248)"/><ellipse cx="238" cy="232" rx="36" ry="40" fill="#9f9f9f" opacity="0.8" transform="rotate(0 238 232)"/><ellipse cx="320" cy="225" rx="52" ry="34" fill="#a4a4a4" opacity="0.85" transform="rotate(0 320 225)"/><ellipse cx="380" cy="262" rx="110" ry="22" fill="#9f9f9f" opacity="0.8" transform="rotate(0 380 262)"/><ellipse cx="468" cy="205" rx="20" ry="24" fill="#9d9d9d" opacity="0.75" transform="rotate(0 468 205)"/><ellipse cx="410" cy="212" rx="34" ry="20" fill="#848484" opacity="0.8" transform="rotate(0 410 212)"/><ellipse cx="120" cy="255" rx="26" ry="10" fill="#919191" opacity="0.6" transform="rotate(0 120 255)"/><ellipse cx="268" cy="325" rx="230" ry="22" fill="#838383" opacity="1" transform="rotate(0 268 325)"/></g><mask id="cloudmask" maskUnits="userSpaceOnUse" x="50" y="35" width="436" height="312"><g filter="url(#irblur)"><ellipse cx="175" cy="55" rx="21" ry="29" fill="#fff" transform="rotate(10 175 55)"/><ellipse cx="98" cy="112" rx="32" ry="8" fill="#fff" transform="rotate(0 98 112)"/><ellipse cx="142" cy="136" rx="10" ry="23" fill="#fff" transform="rotate(15 142 136)"/><ellipse cx="215" cy="100" rx="57" ry="18" fill="#fff" transform="rotate(-8 215 100)"/><ellipse cx="58" cy="175" rx="16" ry="25" fill="#fff" transform="rotate(0 58 175)"/><ellipse cx="135" cy="152" rx="23" ry="23" fill="#fff" transform="rotate(0 135 152)"/><ellipse cx="240" cy="150" rx="46" ry="52" fill="#fff" transform="rotate(0 240 150)"/><ellipse cx="400" cy="82" rx="80" ry="20" fill="#fff" transform="rotate(-34 400 82)"/><ellipse cx="455" cy="60" rx="40" ry="28" fill="#fff" transform="rotate(-20 455 60)"/><ellipse cx="345" cy="145" rx="92" ry="30" fill="#fff" transform="rotate(0 345 145)"/><ellipse cx="300" cy="160" rx="46" ry="34" fill="#fff" transform="rotate(0 300 160)"/><ellipse cx="460" cy="165" rx="30" ry="30" fill="#fff" transform="rotate(0 460 165)"/><ellipse cx="170" cy="268" rx="41" ry="34" fill="#fff" transform="rotate(0 170 268)"/><ellipse cx="66" cy="248" rx="21" ry="32" fill="#fff" transform="rotate(0 66 248)"/><ellipse cx="238" cy="232" rx="41" ry="46" fill="#fff" transform="rotate(0 238 232)"/><ellipse cx="320" cy="225" rx="60" ry="39" fill="#fff" transform="rotate(0 320 225)"/><ellipse cx="380" cy="262" rx="126" ry="25" fill="#fff" transform="rotate(0 380 262)"/><ellipse cx="468" cy="205" rx="23" ry="28" fill="#fff" transform="rotate(0 468 205)"/><ellipse cx="120" cy="255" rx="30" ry="12" fill="#fff" transform="rotate(0 120 255)"/></g></mask><rect x="50" y="35" width="436" height="312" filter="url(#irtex)" opacity="0.42" mask="url(#cloudmask)"/><rect x="50" y="35" width="436" height="312" filter="url(#irtex2)" opacity="0.12"/><g shape-rendering="crispEdges"><path d="M50,130 53,130 57,130 57,129 60,129 63,129 63,131 63,133 66,133 66,134 69,134 72,134 72,135 77,135 80,135 80,136 84,136 84,134 87,134 87,133 90,133 90,131 90,129 95,129 95,130 97,130 97,128 102,128 103,128 103,129 107,129 107,130 107,128 110,128 110,129 114,129 114,132 116,132 116,135 114,135 114,138 115,138 114,138 114,142 114,147 114,150 112,150 112,154 111,154 111,156 111,160 111,163 112,163 107,163 107,162 105,162 105,166 100,166 100,169 98,169 98,172 97,172 95,172 92,172 92,168 92,169 87,169 87,173 86,173 86,176 83,176 83,178 82,178 82,182 81,182 81,184 79,184 76,184 76,180 73,180 72,180 72,178 70,178 70,175 70,171 67,171 67,168 67,165 66,165 64,165 64,162 64,159 61,159 59,159 59,155 57,155 57,154 53,154 53,152 53,150 50,150 50,147 50,143 49,143 49,140 51,140 49,140 49,137 50,137 50,134Z" fill="#0000ff" stroke="#0000ff" stroke-width="1"/><path d="M195,119 195,120 199,120 199,117 201,117 201,118 205,118 205,119 209,119 212,119 215,119 215,120 219,120 222,120 222,119 222,123 220,123 220,125 218,125 218,128 213,128 213,131 209,131 209,133 207,133 207,128 207,126 204,126 204,125 201,125 201,124 196,124 195,124Z" fill="#0000ff" stroke="#0000ff" stroke-width="1"/><path d="M236,125 239,125 244,125 244,124 244,123 248,123 252,123 252,122 253,122 253,125 253,127 251,127 248,127 248,131 248,132 242,132 239,132 239,130 239,125Z" fill="#0000ff" stroke="#0000ff" stroke-width="1"/><path d="M196,147 196,144 198,144 201,144 201,143 205,143 205,142 207,142 212,142 212,141 215,141 215,143 219,143 219,148 219,152 215,152 211,152 211,154 207,154 211,154 215,154 215,155 215,160 216,160 216,161 212,161 212,163 210,163 205,163 205,164 201,164 201,163 198,163 198,159 198,155 196,155 196,154 191,154 191,151 194,151 196,151Z" fill="#0000ff" stroke="#0000ff" stroke-width="1"/><path d="M242,145 242,144 244,144 244,142 247,142 249,142 249,140 253,140 253,139 254,139 259,139 259,138 261,138 267,138 267,139 270,139 273,139 273,141 273,145 275,145 278,145 278,146 280,146 280,147 280,150 284,150 287,150 287,153 289,153 290,153 290,155 290,158 291,158 291,162 292,162 294,162 294,165 298,165 298,167 300,167 300,168 305,168 305,170 308,170 308,171 308,174 309,174 309,176 304,176 301,176 299,176 299,179 298,179 298,181 298,184 300,184 304,184 304,187 308,187 311,187 311,188 315,188 318,188 320,188 320,193 320,194 316,194 316,197 313,197 309,197 309,196 306,196 306,197 302,197 300,197 300,196 300,194 296,194 294,194 294,192 290,192 290,190 290,187 288,187 286,187 286,182 286,180 284,180 284,176 282,176 282,175 279,175 279,172 276,172 273,172 273,169 272,169 272,166 270,166 270,162 270,160 266,160 265,160 265,159 260,159 260,158 260,156 256,156 251,156 251,155 248,155 248,154 246,154 242,154 242,152 241,152 241,148 241,145Z" fill="#0000ff" stroke="#0000ff" stroke-width="1"/><path d="M233,158 237,158 237,157 237,155 239,155 238,155 238,158 238,162 236,162 232,162 232,163 232,158Z" fill="#0000ff" stroke="#0000ff" stroke-width="1"/><path d="M246,169 246,168 249,168 253,168 256,168 256,169 256,171 259,171 262,171 262,168 262,166 265,166 268,166 272,166 274,166 274,169 278,169 278,172 273,172 273,173 270,173 270,174 270,175 266,175 263,175 263,174 259,174 259,175 256,175 256,178 253,178 251,178 251,177 251,174 248,174 246,174Z" fill="#0000ff" stroke="#0000ff" stroke-width="1"/><path d="M251,181 253,181 253,180 256,180 256,178 260,178 260,179 260,178 265,178 268,178 268,179 268,181 272,181 276,181 276,182 276,184 278,184 280,184 280,186 280,189 282,189 284,189 284,193 284,196 279,196 279,197 276,197 276,194 272,194 270,194 270,192 266,192 266,191 266,190 263,190 260,190 256,190 256,188 253,188 253,186 253,181Z" fill="#0000ff" stroke="#0000ff" stroke-width="1"/><path d="M50,234 55,234 55,236 58,236 58,239 58,242 60,242 60,246 60,248 60,251 62,251 61,251 61,255 63,255 63,258 60,258 60,263 55,263 55,264 53,264 53,262 53,259 50,259 49,259 49,255 49,252 50,252 50,249 50,245 49,245 50,245 50,244 50,241 50,237Z" fill="#0000ff" stroke="#0000ff" stroke-width="1"/><path d="M66,239 66,237 72,237 75,237 75,240 75,243 78,243 78,246 78,249 78,253 74,253 71,253 71,252 67,252 67,251 67,247 67,245 67,243 66,243Z" fill="#0000ff" stroke="#0000ff" stroke-width="1"/><path d="M147,280 147,279 150,279 153,279 153,277 153,275 158,275 162,275 162,274 162,270 163,270 163,266 163,265 169,265 174,265 174,266 175,266 175,269 175,271 178,271 181,271 181,268 181,264 184,264 188,264 190,264 190,263 194,263 194,262 194,260 200,260 200,264 203,264 202,264 202,268 204,268 204,269 205,269 205,274 205,276 204,276 204,280 203,280 201,280 201,282 201,286 200,286 200,288 198,288 198,291 194,291 190,291 190,292 188,292 188,296 186,296 184,296 184,298 184,299 180,299 176,299 173,299 173,295 170,295 170,291 170,288 171,288 172,288 172,285 172,284 177,284 175,284 175,283 170,283 170,281 167,281 167,282 163,282 163,281 159,281 159,282 157,282 157,281 153,281 150,281 150,282 150,280Z" fill="#0000ff" stroke="#0000ff" stroke-width="1"/><path d="M189,243 193,243 193,242 193,241 198,241 201,241 201,237 204,237 204,236 204,238 205,238 207,238 207,242 212,242 212,245 214,245 214,244 218,244 218,249 219,249 219,253 218,253 218,256 218,259 216,259 216,260 213,260 208,260 208,261 206,261 206,256 202,256 202,255 200,255 200,254 195,254 195,252 193,252 193,248 190,248 190,246 190,243Z" fill="#0000ff" stroke="#0000ff" stroke-width="1"/><path d="M215,264 216,264 216,261 218,261 218,259 218,255 219,255 219,254 224,254 227,254 232,254 233,254 233,258 229,258 229,260 226,260 226,263 226,267 225,267 225,268 223,268 223,271 220,271 216,271 216,267 216,264Z" fill="#0000ff" stroke="#0000ff" stroke-width="1"/><path d="M227,266 228,266 228,263 228,259 230,259 235,259 235,260 238,260 238,259 238,262 239,262 240,262 240,266 241,266 241,269 241,272 241,275 236,275 232,275 232,274 229,274 227,274 227,270Z" fill="#0000ff" stroke="#0000ff" stroke-width="1"/><path d="M257,199 257,196 261,196 263,196 263,195 267,195 270,195 270,196 274,196 274,200 274,203 276,203 276,207 277,207 277,210 274,210 270,210 270,212 270,211 265,211 265,214 260,214 260,212 258,212 258,207 257,207 257,203Z" fill="#0000ff" stroke="#0000ff" stroke-width="1"/><path d="M270,197 273,197 276,197 280,197 284,197 284,198 287,198 287,200 289,200 289,202 289,203 292,203 291,203 291,206 291,210 287,210 287,211 287,213 284,213 284,212 280,212 276,212 276,211 274,211 274,212 270,212 270,210 270,206 271,206 271,203 269,203 269,200 270,200Z" fill="#0000ff" stroke="#0000ff" stroke-width="1"/><path d="M298,204 298,202 300,202 303,202 303,199 307,199 307,200 308,200 308,203 308,207 307,207 311,207 311,209 311,212 310,212 308,212 308,214 308,216 304,216 304,212 301,212 298,212 298,208Z" fill="#0000ff" stroke="#0000ff" stroke-width="1"/><path d="M311,211 315,211 320,211 320,210 323,210 327,210 327,211 327,210 330,210 333,210 333,214 333,218 333,220 330,220 328,220 328,224 325,224 322,224 322,220 319,220 316,220 316,218 313,218 313,219 309,219 307,219 307,215 310,215 310,214 311,214Z" fill="#0000ff" stroke="#0000ff" stroke-width="1"/><path d="M340,215 343,215 343,212 343,216 347,216 347,219 346,219 346,222 349,222 349,224 351,224 351,227 351,230 354,230 357,230 357,231 357,234 352,234 352,232 349,232 346,232 342,232 342,229 339,229 339,227 339,225 336,225 336,224 334,224 334,222 339,222 339,221 339,218 338,218 340,218Z" fill="#0000ff" stroke="#0000ff" stroke-width="1"/><path d="M306,229 310,229 310,230 313,230 317,230 317,231 320,231 322,231 322,229 325,229 325,227 325,224 328,224 332,224 332,227 329,227 329,231 329,234 333,234 333,236 334,236 335,236 335,240 330,240 330,241 330,238 328,238 325,238 325,236 321,236 321,238 318,238 318,237 318,235 314,235 311,235 311,233 311,231 307,231 306,231Z" fill="#0000ff" stroke="#0000ff" stroke-width="1"/><path d="M292,245 292,244 295,244 295,242 298,242 298,239 300,239 303,239 303,238 306,238 310,238 310,242 309,242 309,246 312,246 317,246 320,246 324,246 324,245 328,245 333,245 333,248 333,250 328,250 323,250 323,249 320,249 316,249 316,250 316,252 311,252 308,252 308,253 308,255 304,255 302,255 302,250 302,247 304,247 300,247 300,245 298,245 298,246 294,246 294,247 292,247Z" fill="#0000ff" stroke="#0000ff" stroke-width="1"/><path d="M280,254 284,254 284,255 287,255 291,255 291,257 296,257 296,260 295,260 291,260 288,260 288,261 288,259 286,259 286,257 283,257 283,254Z" fill="#0000ff" stroke="#0000ff" stroke-width="1"/><path d="M348,260 352,260 352,257 353,257 353,254 357,254 359,254 361,254 361,250 363,250 363,246 363,245 366,245 366,246 370,246 370,249 370,253 372,253 372,256 375,256 375,261 374,261 370,261 370,264 370,266 368,266 366,266 366,272 366,271 362,271 362,272 359,272 357,272 357,271 354,271 354,269 349,269 349,267 349,264 347,264 347,260Z" fill="#0000ff" stroke="#0000ff" stroke-width="1"/><path d="M383,246 386,246 386,245 386,242 389,242 392,242 392,243 392,248 393,248 396,248 396,247 396,252 396,254 393,254 393,255 389,255 389,252 384,252 383,252 383,250Z" fill="#0000ff" stroke="#0000ff" stroke-width="1"/><path d="M406,88 409,88 409,87 409,84 412,84 412,82 416,82 416,80 419,80 419,84 423,84 423,86 426,86 426,90 423,90 423,92 418,92 418,95 420,95 420,100 417,100 414,100 412,100 412,97 411,97 411,94 411,93 406,93Z" fill="#0000ff" stroke="#0000ff" stroke-width="1"/><path d="M431,181 431,178 433,178 434,178 434,177 434,175 436,175 436,172 439,172 439,170 444,170 447,170 447,171 447,175 446,175 443,175 443,177 438,177 438,179 438,182 436,182 436,183 432,183 432,181Z" fill="#0000ff" stroke="#0000ff" stroke-width="1"/><path d="M75,190 78,190 79,190 79,192 79,195 78,195 78,198 75,198 75,195 74,195 74,192 74,190Z" fill="#0000ff" stroke="#0000ff" stroke-width="1"/><rect x="88" y="103" width="6" height="4" fill="#0000ff"/><path d="M143,102 146,102 148,102 148,103 148,105 148,107 146,107 143,107 141,107 141,105 141,103 141,102Z" fill="#0000ff" stroke="#0000ff" stroke-width="1"/><rect x="154" y="98" width="3" height="4" fill="#0000ff"/><rect x="171" y="100" width="2" height="4" fill="#0000ff"/><rect x="177" y="101" width="4" height="4" fill="#0000ff"/><rect x="182" y="98" width="4" height="3" fill="#0000ff"/><rect x="186" y="103" width="3" height="4" fill="#0000ff"/><rect x="206" y="89" width="4" height="4" fill="#0000ff"/><path d="M214,93 218,93 220,93 220,96 220,100 218,100 218,103 214,103 214,100 212,100 212,96 214,96Z" fill="#0000ff" stroke="#0000ff" stroke-width="1"/><rect x="230" y="84" width="3" height="3" fill="#0000ff"/><rect x="233" y="107" width="6" height="3" fill="#0000ff"/><rect x="258" y="104" width="3" height="2" fill="#0000ff"/><rect x="263" y="104" width="2" height="2" fill="#0000ff"/><rect x="185" y="117" width="2" height="2" fill="#0000ff"/><rect x="190" y="124" width="2" height="2" fill="#0000ff"/><path d="M237,114 237,115 241,115 241,114 244,114 248,114 248,116 248,119 244,119 244,121 241,121 241,120 237,120 237,121 237,119 233,119 233,116 233,114Z" fill="#0000ff" stroke="#0000ff" stroke-width="1"/><path d="M201,167 203,167 205,167 205,169 205,171 203,171 203,172 201,172 200,172 200,171 200,169 201,169Z" fill="#0000ff" stroke="#0000ff" stroke-width="1"/><rect x="212" y="171" width="2" height="3" fill="#0000ff"/><rect x="218" y="174" width="4" height="4" fill="#0000ff"/><path d="M176,181 179,181 179,182 182,182 182,184 179,184 179,185 176,185 176,184 174,184 174,182 174,181Z" fill="#0000ff" stroke="#0000ff" stroke-width="1"/><rect x="188" y="178" width="2" height="2" fill="#0000ff"/><rect x="130" y="131" width="4" height="3" fill="#0000ff"/><rect x="133" y="133" width="4" height="2" fill="#0000ff"/><rect x="135" y="141" width="2" height="3" fill="#0000ff"/><rect x="124" y="140" width="2" height="2" fill="#0000ff"/><rect x="183" y="164" width="2" height="2" fill="#0000ff"/><rect x="220" y="186" width="3" height="4" fill="#0000ff"/><path d="M280,141 283,141 283,140 285,140 285,141 285,142 289,142 289,145 285,145 285,147 285,146 283,146 283,147 280,147 280,145 276,145 276,142 280,142Z" fill="#0000ff" stroke="#0000ff" stroke-width="1"/><rect x="292" y="139" width="6" height="3" fill="#0000ff"/><rect x="301" y="133" width="8" height="2" fill="#0000ff"/><rect x="314" y="136" width="4" height="2" fill="#0000ff"/><rect x="312" y="142" width="7" height="3" fill="#0000ff"/><rect x="332" y="154" width="3" height="4" fill="#0000ff"/><rect x="336" y="171" width="3" height="2" fill="#0000ff"/><path d="M326,185 329,185 329,189 331,189 331,191 331,194 329,194 329,197 326,197 324,197 324,194 324,191 324,189 324,185Z" fill="#0000ff" stroke="#0000ff" stroke-width="1"/><path d="M420,147 423,147 425,147 425,146 428,146 428,147 431,147 433,147 436,147 436,150 436,151 438,151 437,151 437,154 437,157 438,157 438,159 436,159 433,159 433,160 433,161 431,161 431,162 429,162 425,162 423,162 420,162 420,161 417,161 417,160 417,159 415,159 415,157 414,157 414,154 414,151 415,151 415,149 419,149 419,148 419,147Z" fill="#0000ff" stroke="#0000ff" stroke-width="1"/><path d="M461,147 463,147 467,147 467,148 470,148 471,148 471,150 471,154 471,156 471,158 470,158 467,158 467,160 464,160 461,160 461,157 459,157 459,156 456,156 456,153 456,150 456,148 458,148 458,147Z" fill="#0000ff" stroke="#0000ff" stroke-width="1"/><path d="M473,123 477,123 480,123 480,125 480,128 477,128 477,130 473,130 473,128 471,128 471,125 473,125Z" fill="#0000ff" stroke="#0000ff" stroke-width="1"/><rect x="483" y="123" width="3" height="15" fill="#0000ff"/><path d="M480,141 483,141 483,143 486,143 486,148 483,148 483,150 480,150 477,150 477,148 477,143 477,141Z" fill="#0000ff" stroke="#0000ff" stroke-width="1"/><rect x="447" y="146" width="3" height="4" fill="#0000ff"/><rect x="465" y="135" width="3" height="3" fill="#0000ff"/><rect x="469" y="142" width="2" height="2" fill="#0000ff"/><rect x="444" y="161" width="4" height="4" fill="#0000ff"/><path d="M456,177 458,177 458,178 460,178 460,181 460,182 458,182 456,182 456,181 454,181 454,178 456,178Z" fill="#0000ff" stroke="#0000ff" stroke-width="1"/><rect x="475" y="166" width="3" height="3" fill="#0000ff"/><rect x="481" y="160" width="4" height="5" fill="#0000ff"/><rect x="430" y="184" width="2" height="3" fill="#0000ff"/><rect x="357" y="121" width="12" height="2" fill="#0000ff"/><rect x="408" y="60" width="2" height="2" fill="#0000ff"/><rect x="425" y="86" width="2" height="2" fill="#0000ff"/><rect x="388" y="104" width="2" height="2" fill="#0000ff"/><rect x="431" y="67" width="3" height="5" fill="#0000ff"/><path d="M431,95 433,95 435,95 435,97 435,99 435,101 433,101 431,101 429,101 429,99 429,97 429,95Z" fill="#0000ff" stroke="#0000ff" stroke-width="1"/><path d="M105,262 107,262 110,262 110,264 113,264 113,267 110,267 110,269 108,269 105,269 105,267 101,267 101,264 101,262Z" fill="#0000ff" stroke="#0000ff" stroke-width="1"/><rect x="122" y="287" width="4" height="4" fill="#0000ff"/><rect x="136" y="284" width="2" height="2" fill="#0000ff"/><rect x="167" y="248" width="5" height="3" fill="#0000ff"/><rect x="162" y="252" width="4" height="6" fill="#0000ff"/><rect x="173" y="247" width="8" height="1" fill="#0000ff"/><rect x="209" y="269" width="6" height="2" fill="#0000ff"/><path d="M259,265 262,265 263,265 263,266 263,269 263,271 262,271 259,271 258,271 258,269 258,266 259,266Z" fill="#0000ff" stroke="#0000ff" stroke-width="1"/><path d="M248,246 250,246 250,248 252,248 252,251 250,251 250,254 248,254 248,251 246,251 246,248 248,248Z" fill="#0000ff" stroke="#0000ff" stroke-width="1"/><path d="M240,235 245,235 248,235 248,238 248,242 245,242 245,244 240,244 240,242 236,242 236,238 240,238Z" fill="#0000ff" stroke="#0000ff" stroke-width="1"/><path d="M222,231 225,231 227,231 227,234 227,237 227,240 225,240 222,240 222,237 220,237 220,234 222,234Z" fill="#0000ff" stroke="#0000ff" stroke-width="1"/><path d="M238,193 240,193 242,193 242,195 242,197 242,199 240,199 238,199 236,199 236,197 236,195 238,195Z" fill="#0000ff" stroke="#0000ff" stroke-width="1"/><rect x="237" y="201" width="7" height="4" fill="#0000ff"/><rect x="51" y="220" width="2" height="2" fill="#0000ff"/><rect x="60" y="220" width="2" height="2" fill="#0000ff"/><rect x="68" y="229" width="2" height="2" fill="#0000ff"/><rect x="218" y="278" width="2" height="2" fill="#0000ff"/><rect x="211" y="197" width="2" height="2" fill="#0000ff"/><path d="M290,190 293,190 296,190 299,190 302,190 302,191 302,192 304,192 304,196 302,196 302,198 299,198 296,198 296,197 296,198 292,198 290,198 288,198 288,197 285,197 285,196 285,192 288,192 288,191 290,191Z" fill="#0000ff" stroke="#0000ff" stroke-width="1"/><path d="M312,190 315,190 315,192 317,192 317,195 315,195 315,197 312,197 310,197 310,195 310,192 312,192Z" fill="#0000ff" stroke="#0000ff" stroke-width="1"/><path d="M356,219 358,219 359,219 359,222 359,225 358,225 358,228 356,228 356,225 354,225 354,222 354,219Z" fill="#0000ff" stroke="#0000ff" stroke-width="1"/><path d="M361,198 363,198 364,198 364,199 364,202 364,204 363,204 361,204 359,204 359,202 359,199 361,199Z" fill="#0000ff" stroke="#0000ff" stroke-width="1"/><path d="M340,234 344,234 346,234 346,236 351,236 351,240 346,240 346,242 346,243 343,243 343,242 340,242 340,240 335,240 335,236 335,234Z" fill="#0000ff" stroke="#0000ff" stroke-width="1"/><rect x="354" y="234" width="4" height="7" fill="#0000ff"/><path d="M295,229 299,229 299,230 302,230 302,232 299,232 299,234 295,234 295,232 292,232 292,230 295,230Z" fill="#0000ff" stroke="#0000ff" stroke-width="1"/><rect x="283" y="229" width="7" height="3" fill="#0000ff"/><rect x="287" y="234" width="4" height="2" fill="#0000ff"/><rect x="275" y="261" width="4" height="5" fill="#0000ff"/><path d="M343,254 346,254 348,254 348,256 348,259 348,261 346,261 343,261 340,261 340,259 340,256 343,256Z" fill="#0000ff" stroke="#0000ff" stroke-width="1"/><path d="M339,264 343,264 346,264 346,266 346,269 343,269 343,271 339,271 339,269 337,269 337,266 337,264Z" fill="#0000ff" stroke="#0000ff" stroke-width="1"/><rect x="323" y="255" width="4" height="4" fill="#0000ff"/><path d="M328,260 330,260 332,260 332,261 332,264 330,264 330,266 328,266 328,264 326,264 326,261 328,261Z" fill="#0000ff" stroke="#0000ff" stroke-width="1"/><rect x="322" y="262" width="3" height="4" fill="#0000ff"/><rect x="403" y="235" width="3" height="2" fill="#0000ff"/><rect x="408" y="235" width="4" height="2" fill="#0000ff"/><rect x="407" y="242" width="3" height="3" fill="#0000ff"/><rect x="413" y="247" width="5" height="4" fill="#0000ff"/><rect x="411" y="257" width="2" height="5" fill="#0000ff"/><rect x="413" y="264" width="5" height="3" fill="#0000ff"/><path d="M424,258 428,258 428,260 431,260 431,262 428,262 428,264 424,264 422,264 422,262 422,260 424,260Z" fill="#0000ff" stroke="#0000ff" stroke-width="1"/><rect x="431" y="264" width="3" height="2" fill="#0000ff"/><rect x="441" y="249" width="4" height="2" fill="#0000ff"/><rect x="443" y="261" width="4" height="6" fill="#0000ff"/><path d="M462,251 466,251 468,251 468,252 468,255 468,256 466,256 462,256 460,256 460,255 460,252 460,251Z" fill="#0000ff" stroke="#0000ff" stroke-width="1"/><rect x="473" y="254" width="2" height="1" fill="#0000ff"/><rect x="457" y="203" width="5" height="4" fill="#0000ff"/><rect x="466" y="202" width="2" height="2" fill="#0000ff"/><path d="M271,238 274,238 274,241 275,241 275,244 275,247 274,247 271,247 270,247 270,244 270,241 271,241Z" fill="#0000ff" stroke="#0000ff" stroke-width="1"/><rect x="275" y="243" width="2" height="6" fill="#0000ff"/><rect x="353" y="200" width="2" height="2" fill="#0000ff"/><path d="M173,163 173,160 173,159 176,159 178,159 178,158 181,158 181,161 181,162 177,162 176,162 176,163Z" fill="#0000ff" stroke="#0000ff" stroke-width="1"/><path d="M225,172 225,170 227,170 227,169 227,167 230,167 232,167 232,170 230,170 230,171 230,172 228,172Z" fill="#0000ff" stroke="#0000ff" stroke-width="1"/><path d="M133,295 133,292 136,292 136,291 138,291 138,289 140,289 140,291 138,291 138,293 138,295 136,295Z" fill="#0000ff" stroke="#0000ff" stroke-width="1"/><path d="M341,121 341,119 341,118 343,118 345,118 345,115 347,115 347,117 347,120 345,120 343,120 343,121Z" fill="#0000ff" stroke="#0000ff" stroke-width="1"/><path d="M352,114 352,112 352,109 354,109 354,107 356,107 356,109 356,112 355,112 354,112 354,114Z" fill="#0000ff" stroke="#0000ff" stroke-width="1"/><path d="M360,110 360,107 363,107 363,104 363,102 366,102 369,102 369,105 369,107 366,107 363,107 363,110Z" fill="#0000ff" stroke="#0000ff" stroke-width="1"/><path d="M366,103 366,99 366,98 368,98 370,98 370,97 370,95 373,95 377,95 377,99 374,99 374,100 374,102 372,102 370,102 370,103Z" fill="#0000ff" stroke="#0000ff" stroke-width="1"/><path d="M373,95 373,91 373,89 375,89 375,88 377,88 377,85 378,85 378,84 380,84 384,84 384,88 384,90 382,90 380,90 380,91 378,91 378,94 377,94 377,95Z" fill="#0000ff" stroke="#0000ff" stroke-width="1"/><path d="M379,90 379,86 379,85 381,85 384,85 384,82 386,82 386,80 390,80 390,84 390,86 387,86 386,86 386,88 383,88 383,90Z" fill="#0000ff" stroke="#0000ff" stroke-width="1"/><path d="M387,85 387,82 388,82 388,79 388,77 390,77 390,74 392,74 394,74 394,76 392,76 392,79 392,82 391,82 389,82 389,85Z" fill="#0000ff" stroke="#0000ff" stroke-width="1"/><path d="M397,80 397,77 397,75 399,75 399,74 402,74 404,74 404,77 404,78 401,78 401,80 399,80Z" fill="#0000ff" stroke="#0000ff" stroke-width="1"/><path d="M396,102 396,98 396,96 398,96 398,94 399,94 399,91 402,91 403,91 403,90 408,90 408,94 408,96 406,96 406,98 403,98 403,100 401,100 400,100 400,102Z" fill="#0000ff" stroke="#0000ff" stroke-width="1"/><path d="M444,74 444,72 444,69 445,69 446,69 446,67 448,67 448,69 448,71 446,71 446,74Z" fill="#0000ff" stroke="#0000ff" stroke-width="1"/><path d="M464,75 464,73 465,73 465,71 466,71 466,68 468,68 468,70 467,70 467,73 466,73 466,75Z" fill="#0000ff" stroke="#0000ff" stroke-width="1"/><path d="M472,77 472,75 474,75 474,72 476,72 476,74 474,74 474,77Z" fill="#0000ff" stroke="#0000ff" stroke-width="1"/><path d="M416,80 416,78 417,78 417,76 419,76 419,74 421,74 421,76 419,76 419,78 419,80 418,80Z" fill="#0000ff" stroke="#0000ff" stroke-width="1"/><path d="M424,78 424,76 428,76 428,73 430,73 430,75 430,78 426,78Z" fill="#0000ff" stroke="#0000ff" stroke-width="1"/><path d="M436,83 436,81 438,81 438,77 440,77 440,79 440,83 438,83Z" fill="#0000ff" stroke="#0000ff" stroke-width="1"/><path d="M384,95 384,93 384,90 385,90 385,88 386,88 388,88 388,90 387,90 387,92 387,95 386,95Z" fill="#0000ff" stroke="#0000ff" stroke-width="1"/><path d="M393,89 393,87 395,87 395,84 397,84 397,86 397,89 395,89Z" fill="#0000ff" stroke="#0000ff" stroke-width="1"/><path d="M401,87 401,85 403,85 403,83 405,83 405,85 405,87 403,87Z" fill="#0000ff" stroke="#0000ff" stroke-width="1"/><path d="M73,136 77,136 80,136 80,138 80,141 77,141 77,143 73,143 73,141 70,141 70,138 70,136Z" fill="#ff0000" stroke="#ff0000" stroke-width="1"/><path d="M81,138 86,138 89,138 89,141 89,145 86,145 86,148 81,148 81,145 78,145 78,141 78,138Z" fill="#ff0000" stroke="#ff0000" stroke-width="1"/><path d="M65,149 65,148 69,148 71,148 71,149 74,149 74,152 74,157 74,160 71,160 68,160 65,160 65,157 62,157 62,152 65,152Z" fill="#ff0000" stroke="#ff0000" stroke-width="1"/><path d="M71,154 71,153 73,153 73,155 77,155 77,154 79,154 79,157 83,157 83,158 84,158 84,163 84,164 83,164 83,167 83,168 79,168 79,169 77,169 73,169 73,168 71,168 71,167 70,167 66,167 66,164 66,162 67,162 67,158 66,158 66,155 67,155 71,155Z" fill="#ff0000" stroke="#ff0000" stroke-width="1"/><path d="M75,164 79,164 82,164 82,166 82,170 79,170 79,172 75,172 72,172 72,170 72,166 75,166Z" fill="#ff0000" stroke="#ff0000" stroke-width="1"/><path d="M62,146 64,146 66,146 66,148 66,150 66,152 64,152 62,152 62,150 60,150 60,148 60,146Z" fill="#ff0000" stroke="#ff0000" stroke-width="1"/><path d="M58,141 60,141 62,141 62,143 62,145 60,145 60,147 58,147 56,147 56,145 56,143 58,143Z" fill="#ff0000" stroke="#ff0000" stroke-width="1"/><path d="M86,148 88,148 88,150 90,150 90,152 88,152 88,154 86,154 86,152 84,152 84,150 84,148Z" fill="#ff0000" stroke="#ff0000" stroke-width="1"/><path d="M91,155 94,155 94,157 96,157 96,160 94,160 94,162 91,162 91,160 89,160 89,157 91,157Z" fill="#ff0000" stroke="#ff0000" stroke-width="1"/><path d="M96,158 100,158 100,160 102,160 102,163 102,166 100,166 96,166 94,166 94,163 94,160 94,158Z" fill="#ff0000" stroke="#ff0000" stroke-width="1"/><rect x="90" y="163" width="5" height="4" fill="#ff0000"/><path d="M53,135 55,135 57,135 57,136 57,138 55,138 55,140 53,140 53,138 51,138 51,136 53,136Z" fill="#ff0000" stroke="#ff0000" stroke-width="1"/><path d="M103,130 106,130 108,130 108,132 108,134 108,136 106,136 103,136 101,136 101,134 101,132 101,130Z" fill="#ff0000" stroke="#ff0000" stroke-width="1"/><rect x="108" y="153" width="3" height="6" fill="#ff0000"/><path d="M78,167 81,167 83,167 83,169 83,172 81,172 81,174 78,174 78,172 76,172 76,169 76,167Z" fill="#ff0000" stroke="#ff0000" stroke-width="1"/><rect x="55" y="146" width="5" height="4" fill="#ff0000"/><rect x="211" y="109" width="6" height="4" fill="#ff0000"/><rect x="196" y="151" width="4" height="4" fill="#ff0000"/><rect x="209" y="158" width="4" height="3" fill="#ff0000"/><rect x="256" y="170" width="2" height="2" fill="#ff0000"/><rect x="277" y="157" width="3" height="4" fill="#ff0000"/><path d="M288,171 291,171 291,173 293,173 293,176 293,178 291,178 288,178 288,176 286,176 286,173 288,173Z" fill="#ff0000" stroke="#ff0000" stroke-width="1"/><path d="M292,175 296,175 298,175 298,178 298,181 296,181 296,184 292,184 292,181 290,181 290,178 290,175Z" fill="#ff0000" stroke="#ff0000" stroke-width="1"/><path d="M296,180 298,180 300,180 300,182 300,185 300,186 298,186 296,186 296,185 294,185 294,182 294,180Z" fill="#ff0000" stroke="#ff0000" stroke-width="1"/><rect x="310" y="188" width="4" height="4" fill="#ff0000"/><path d="M52,247 55,247 57,247 57,250 57,255 55,255 55,258 52,258 50,258 50,255 50,250 50,247Z" fill="#ff0000" stroke="#ff0000" stroke-width="1"/><rect x="73" y="245" width="3" height="5" fill="#ff0000"/><rect x="200" y="243" width="4" height="3" fill="#ff0000"/><rect x="212" y="249" width="6" height="3" fill="#ff0000"/><rect x="211" y="253" width="3" height="3" fill="#ff0000"/><path d="M352,260 357,260 360,260 360,262 360,265 357,265 357,266 352,266 349,266 349,265 349,262 352,262Z" fill="#ff0000" stroke="#ff0000" stroke-width="1"/><rect x="311" y="190" width="3" height="2" fill="#ff0000"/><rect x="279" y="206" width="2" height="2" fill="#ff0000"/><rect x="309" y="216" width="2" height="2" fill="#ff0000"/><rect x="322" y="220" width="2" height="2" fill="#ff0000"/><rect x="316" y="232" width="2" height="2" fill="#ff0000"/><path d="M75,138 78,138 78,139 80,139 80,141 80,142 78,142 75,142 75,141 73,141 73,139 75,139Z" fill="#ffa500" stroke="#ffa500" stroke-width="1"/><path d="M81,140 85,140 85,142 87,142 87,145 87,147 85,147 81,147 79,147 79,145 79,142 79,140Z" fill="#ffa500" stroke="#ffa500" stroke-width="1"/><path d="M67,153 71,153 71,155 73,155 73,158 71,158 71,160 67,160 65,160 65,158 65,155 65,153Z" fill="#ffa500" stroke="#ffa500" stroke-width="1"/><path d="M73,156 75,156 78,156 78,158 82,158 82,162 78,162 78,164 78,163 75,163 75,164 73,164 70,164 70,162 70,158 73,158Z" fill="#ffa500" stroke="#ffa500" stroke-width="1"/><rect x="91" y="157" width="6" height="4" fill="#ffa500"/><rect x="95" y="160" width="6" height="4" fill="#ffa500"/><rect x="52" y="136" width="4" height="3" fill="#ffa500"/><rect x="77" y="169" width="4" height="4" fill="#ffa500"/><path d="M288,172 291,172 291,173 292,173 292,176 292,177 291,177 288,177 287,177 287,176 287,173 288,173Z" fill="#ffa500" stroke="#ffa500" stroke-width="1"/><path d="M293,176 295,176 295,178 297,178 297,181 297,183 295,183 293,183 291,183 291,181 291,178 293,178Z" fill="#ffa500" stroke="#ffa500" stroke-width="1"/><rect x="295" y="181" width="4" height="4" fill="#ffa500"/><rect x="50" y="248" width="3" height="5" fill="#ffa500"/><path d="M351,260 354,260 356,260 356,262 356,264 354,264 354,266 351,266 350,266 350,264 350,262 351,262Z" fill="#ffa500" stroke="#ffa500" stroke-width="1"/><path d="M75,140 78,140 78,141 79,141 79,144 78,144 78,145 75,145 74,145 74,144 74,141 74,140Z" fill="#ffc0cb" stroke="#ffc0cb" stroke-width="1"/><rect x="70" y="155" width="4" height="4" fill="#ffc0cb"/><rect x="288" y="173" width="2" height="3" fill="#ffc0cb"/><rect x="293" y="179" width="2" height="3" fill="#ffc0cb"/><rect x="227" y="234" width="1" height="1" fill="#00ee90"/><rect x="227" y="232" width="3" height="1" fill="#00ee90"/><rect x="239" y="234" width="1" height="1" fill="#f8f080"/><rect x="242" y="233" width="1" height="2" fill="#00ee90"/><rect x="221" y="226" width="1" height="1" fill="#00ee90"/><rect x="228" y="234" width="1" height="2" fill="#000"/><rect x="217" y="226" width="1" height="2" fill="#f8f080"/><rect x="221" y="236" width="1" height="2" fill="#00ee90"/><rect x="221" y="224" width="3" height="1" fill="#00ee90"/><rect x="214" y="232" width="2" height="1" fill="#f8f080"/><rect x="234" y="220" width="1" height="1" fill="#000"/><rect x="214" y="228" width="2" height="1" fill="#00ee90"/><rect x="238" y="235" width="2" height="1" fill="#000"/><rect x="215" y="236" width="1" height="2" fill="#00ee90"/><rect x="225" y="236" width="2" height="2" fill="#000"/><rect x="235" y="232" width="2" height="1" fill="#00ee90"/><rect x="243" y="234" width="3" height="2" fill="#000"/><rect x="228" y="237" width="2" height="1" fill="#000"/><rect x="222" y="237" width="2" height="1" fill="#f8f080"/><rect x="231" y="226" width="1" height="1" fill="#f8f080"/><rect x="240" y="226" width="1" height="1" fill="#f8f080"/><rect x="215" y="227" width="2" height="2" fill="#000"/><rect x="225" y="219" width="2" height="1" fill="#00ee90"/><rect x="236" y="232" width="1" height="1" fill="#000"/><rect x="234" y="226" width="2" height="1" fill="#00ee90"/><rect x="221" y="234" width="3" height="1" fill="#00ee90"/><rect x="226" y="222" width="3" height="2" fill="#00ee90"/><rect x="215" y="233" width="3" height="1" fill="#f8f080"/><rect x="226" y="232" width="2" height="1" fill="#f8f080"/><rect x="237" y="232" width="1" height="1" fill="#00ee90"/><rect x="226" y="228" width="3" height="1" fill="#00ee90"/><rect x="243" y="227" width="1" height="1" fill="#f8f080"/><rect x="235" y="235" width="2" height="2" fill="#00ee90"/><rect x="224" y="231" width="2" height="1" fill="#000"/><rect x="225" y="230" width="1" height="2" fill="#00ee90"/><rect x="229" y="222" width="1" height="2" fill="#00ee90"/><rect x="235" y="241" width="2" height="1" fill="#00ee90"/><rect x="230" y="223" width="1" height="2" fill="#000"/><rect x="214" y="229" width="2" height="1" fill="#00ee90"/><rect x="221" y="223" width="1" height="1" fill="#f8f080"/><rect x="229" y="224" width="3" height="1" fill="#00ee90"/><rect x="228" y="218" width="2" height="1" fill="#000"/><rect x="235" y="239" width="2" height="1" fill="#00ee90"/><rect x="240" y="228" width="1" height="1" fill="#f8f080"/><rect x="220" y="231" width="2" height="2" fill="#00ee90"/><rect x="216" y="231" width="1" height="2" fill="#00ee90"/><rect x="243" y="224" width="1" height="1" fill="#00ee90"/><rect x="218" y="234" width="1" height="2" fill="#f8f080"/><rect x="216" y="232" width="1" height="2" fill="#00ee90"/><rect x="233" y="234" width="1" height="2" fill="#000"/><rect x="232" y="226" width="3" height="1" fill="#00ee90"/><rect x="237" y="237" width="1" height="1" fill="#00ee90"/><rect x="214" y="228" width="2" height="1" fill="#f8f080"/><rect x="238" y="231" width="3" height="1" fill="#00ee90"/><rect x="229" y="238" width="1" height="1" fill="#00ee90"/><rect x="241" y="224" width="3" height="1" fill="#00ee90"/><rect x="218" y="228" width="1" height="1" fill="#00ee90"/><rect x="218" y="223" width="1" height="1" fill="#00ee90"/><rect x="216" y="232" width="3" height="1" fill="#00ee90"/><rect x="225" y="222" width="2" height="1" fill="#00ee90"/><rect x="230" y="236" width="1" height="2" fill="#000"/><rect x="216" y="226" width="1" height="1" fill="#00ee90"/><rect x="221" y="224" width="3" height="1" fill="#000"/><rect x="218" y="233" width="2" height="2" fill="#f8f080"/><rect x="225" y="219" width="2" height="2" fill="#f8f080"/><rect x="233" y="226" width="1" height="1" fill="#000"/><rect x="224" y="239" width="2" height="1" fill="#f8f080"/><rect x="223" y="221" width="1" height="2" fill="#00ee90"/><rect x="240" y="239" width="2" height="1" fill="#00ee90"/><rect x="220" y="235" width="1" height="1" fill="#f8f080"/><rect x="241" y="230" width="2" height="1" fill="#00ee90"/><rect x="224" y="239" width="1" height="1" fill="#000"/><rect x="228" y="231" width="2" height="2" fill="#000"/><rect x="226" y="230" width="1" height="1" fill="#00ee90"/><rect x="230" y="232" width="1" height="1" fill="#00ee90"/><rect x="237" y="220" width="2" height="1" fill="#00ee90"/><rect x="218" y="228" width="2" height="2" fill="#00ee90"/><rect x="233" y="232" width="1" height="1" fill="#00ee90"/><rect x="230" y="232" width="1" height="1" fill="#00ee90"/><rect x="224" y="226" width="2" height="1" fill="#000"/><rect x="247" y="231" width="2" height="1" fill="#00ee90"/><rect x="244" y="233" width="1" height="1" fill="#000"/><rect x="237" y="232" width="2" height="2" fill="#000"/><rect x="222" y="229" width="2" height="2" fill="#00ee90"/><rect x="228" y="241" width="2" height="1" fill="#00ee90"/><rect x="242" y="231" width="1" height="2" fill="#000"/><rect x="230" y="238" width="2" height="2" fill="#000"/><rect x="215" y="227" width="3" height="1" fill="#f8f080"/><rect x="240" y="229" width="1" height="1" fill="#00ee90"/><rect x="245" y="229" width="1" height="1" fill="#000"/><rect x="226" y="231" width="2" height="2" fill="#000"/><rect x="218" y="224" width="1" height="1" fill="#00ee90"/><rect x="236" y="237" width="2" height="1" fill="#00ee90"/><rect x="242" y="228" width="1" height="1" fill="#000"/><rect x="231" y="235" width="2" height="1" fill="#00ee90"/><rect x="256" y="212" width="1" height="1" fill="#00ee90"/><rect x="269" y="217" width="1" height="1" fill="#00ee90"/><rect x="258" y="215" width="1" height="1" fill="#00ee90"/><rect x="258" y="200" width="3" height="1" fill="#00ee90"/><rect x="261" y="200" width="2" height="2" fill="#00ee90"/><rect x="270" y="213" width="3" height="2" fill="#f8f080"/><rect x="261" y="197" width="1" height="2" fill="#00ee90"/><rect x="265" y="201" width="1" height="1" fill="#00ee90"/><rect x="269" y="213" width="1" height="1" fill="#000"/><rect x="255" y="206" width="3" height="2" fill="#f8f080"/><rect x="261" y="210" width="1" height="2" fill="#00ee90"/><rect x="261" y="207" width="2" height="1" fill="#00ee90"/><rect x="264" y="204" width="1" height="1" fill="#000"/><rect x="256" y="210" width="2" height="2" fill="#000"/><rect x="263" y="199" width="1" height="1" fill="#00ee90"/><rect x="258" y="220" width="2" height="2" fill="#00ee90"/><rect x="264" y="210" width="2" height="2" fill="#00ee90"/><rect x="259" y="199" width="2" height="2" fill="#000"/><rect x="256" y="212" width="1" height="2" fill="#f8f080"/><rect x="261" y="214" width="2" height="1" fill="#000"/><rect x="254" y="213" width="2" height="1" fill="#f8f080"/><rect x="264" y="223" width="1" height="1" fill="#00ee90"/><rect x="266" y="218" width="2" height="1" fill="#000"/><rect x="268" y="202" width="1" height="1" fill="#000"/><rect x="259" y="213" width="2" height="2" fill="#000"/><rect x="256" y="217" width="2" height="1" fill="#f8f080"/><rect x="259" y="222" width="1" height="1" fill="#00ee90"/><rect x="264" y="206" width="1" height="2" fill="#00ee90"/><rect x="266" y="206" width="2" height="1" fill="#f8f080"/><rect x="256" y="218" width="1" height="1" fill="#f8f080"/><rect x="262" y="197" width="2" height="1" fill="#00ee90"/><rect x="264" y="204" width="1" height="1" fill="#000"/><rect x="257" y="213" width="2" height="1" fill="#00ee90"/><rect x="265" y="200" width="3" height="2" fill="#f8f080"/><rect x="262" y="207" width="2" height="1" fill="#00ee90"/><rect x="259" y="204" width="1" height="2" fill="#00ee90"/><rect x="265" y="218" width="2" height="1" fill="#000"/><rect x="261" y="196" width="2" height="1" fill="#f8f080"/><rect x="260" y="220" width="2" height="1" fill="#00ee90"/><rect x="260" y="207" width="3" height="1" fill="#f8f080"/><rect x="257" y="212" width="2" height="1" fill="#00ee90"/><rect x="258" y="208" width="1" height="1" fill="#00ee90"/><rect x="260" y="218" width="3" height="1" fill="#00ee90"/><rect x="262" y="201" width="2" height="2" fill="#f8f080"/><rect x="258" y="216" width="1" height="1" fill="#000"/><rect x="257" y="206" width="3" height="2" fill="#f8f080"/><rect x="269" y="217" width="2" height="1" fill="#000"/><rect x="257" y="213" width="1" height="1" fill="#00ee90"/><rect x="255" y="216" width="2" height="2" fill="#000"/><rect x="268" y="210" width="3" height="1" fill="#000"/><rect x="262" y="215" width="1" height="1" fill="#00ee90"/><rect x="269" y="206" width="2" height="1" fill="#00ee90"/><rect x="265" y="210" width="3" height="1" fill="#000"/><rect x="269" y="207" width="3" height="2" fill="#f8f080"/><rect x="261" y="206" width="1" height="1" fill="#f8f080"/><rect x="259" y="214" width="3" height="1" fill="#00ee90"/><rect x="253" y="207" width="2" height="1" fill="#f8f080"/><rect x="258" y="211" width="1" height="1" fill="#f8f080"/><rect x="261" y="203" width="1" height="1" fill="#000"/><rect x="267" y="203" width="1" height="1" fill="#f8f080"/><rect x="258" y="198" width="1" height="1" fill="#00ee90"/><rect x="259" y="199" width="2" height="2" fill="#f8f080"/><rect x="265" y="222" width="3" height="1" fill="#f8f080"/><rect x="258" y="210" width="1" height="1" fill="#000"/><rect x="263" y="222" width="2" height="1" fill="#000"/><rect x="255" y="202" width="2" height="1" fill="#00ee90"/><rect x="265" y="208" width="2" height="1" fill="#f8f080"/><rect x="269" y="212" width="2" height="1" fill="#00ee90"/><rect x="264" y="219" width="2" height="2" fill="#00ee90"/><rect x="271" y="210" width="2" height="1" fill="#00ee90"/><rect x="258" y="202" width="2" height="1" fill="#000"/><rect x="259" y="203" width="2" height="1" fill="#000"/><rect x="262" y="211" width="2" height="1" fill="#00ee90"/><rect x="255" y="216" width="3" height="1" fill="#f8f080"/><rect x="257" y="220" width="2" height="1" fill="#00ee90"/><rect x="261" y="204" width="3" height="1" fill="#f8f080"/><rect x="259" y="221" width="2" height="1" fill="#f8f080"/><rect x="262" y="221" width="2" height="1" fill="#f8f080"/><rect x="264" y="211" width="1" height="1" fill="#f8f080"/><rect x="262" y="197" width="2" height="1" fill="#000"/><rect x="217" y="249" width="1" height="1" fill="#00ee90"/><rect x="227" y="244" width="3" height="2" fill="#00ee90"/><rect x="227" y="245" width="2" height="2" fill="#000"/><rect x="228" y="244" width="2" height="1" fill="#000"/><rect x="227" y="248" width="1" height="2" fill="#000"/><rect x="226" y="241" width="3" height="1" fill="#00ee90"/><rect x="226" y="242" width="3" height="1" fill="#f8f080"/><rect x="219" y="246" width="2" height="1" fill="#00ee90"/><rect x="215" y="245" width="1" height="1" fill="#00ee90"/><rect x="227" y="245" width="1" height="1" fill="#00ee90"/><rect x="213" y="247" width="2" height="1" fill="#f8f080"/><rect x="227" y="248" width="1" height="2" fill="#00ee90"/><rect x="223" y="242" width="2" height="2" fill="#000"/><rect x="216" y="248" width="1" height="1" fill="#f8f080"/><rect x="224" y="247" width="2" height="2" fill="#f8f080"/><rect x="219" y="248" width="1" height="2" fill="#f8f080"/><rect x="220" y="244" width="2" height="1" fill="#00ee90"/><rect x="231" y="245" width="1" height="1" fill="#00ee90"/><rect x="227" y="246" width="1" height="1" fill="#f8f080"/><rect x="215" y="242" width="1" height="1" fill="#00ee90"/><rect x="218" y="245" width="3" height="1" fill="#00ee90"/><rect x="228" y="247" width="3" height="1" fill="#f8f080"/><rect x="228" y="246" width="1" height="1" fill="#000"/><rect x="230" y="246" width="1" height="1" fill="#00ee90"/><rect x="217" y="247" width="3" height="1" fill="#00ee90"/><rect x="251" y="231" width="3" height="1" fill="#00ee90"/><rect x="239" y="228" width="3" height="1" fill="#00ee90"/><rect x="244" y="220" width="2" height="1" fill="#000"/><rect x="244" y="220" width="1" height="1" fill="#00ee90"/><rect x="247" y="225" width="2" height="2" fill="#f8f080"/><rect x="242" y="227" width="1" height="1" fill="#00ee90"/><rect x="238" y="227" width="2" height="2" fill="#00ee90"/><rect x="243" y="225" width="1" height="1" fill="#00ee90"/><rect x="241" y="218" width="1" height="2" fill="#00ee90"/><rect x="248" y="221" width="2" height="1" fill="#00ee90"/><rect x="237" y="223" width="1" height="1" fill="#000"/><rect x="248" y="217" width="1" height="1" fill="#00ee90"/><rect x="249" y="223" width="2" height="1" fill="#00ee90"/><rect x="241" y="220" width="1" height="2" fill="#00ee90"/><rect x="241" y="218" width="3" height="1" fill="#f8f080"/><rect x="250" y="221" width="1" height="1" fill="#f8f080"/><rect x="252" y="223" width="2" height="1" fill="#00ee90"/><rect x="248" y="231" width="1" height="1" fill="#00ee90"/><rect x="245" y="220" width="2" height="2" fill="#000"/><rect x="239" y="222" width="2" height="2" fill="#f8f080"/><rect x="246" y="228" width="2" height="2" fill="#00ee90"/><rect x="240" y="226" width="1" height="1" fill="#000"/><rect x="240" y="225" width="3" height="1" fill="#00ee90"/><rect x="251" y="219" width="1" height="1" fill="#00ee90"/><rect x="245" y="225" width="2" height="2" fill="#00ee90"/><rect x="252" y="225" width="2" height="2" fill="#00ee90"/><rect x="256" y="226" width="2" height="2" fill="#00ee90"/><rect x="251" y="224" width="3" height="2" fill="#00ee90"/><rect x="252" y="231" width="2" height="1" fill="#00ee90"/><rect x="244" y="218" width="1" height="1" fill="#00ee90"/><rect x="243" y="221" width="2" height="2" fill="#000"/><rect x="255" y="221" width="2" height="2" fill="#000"/><rect x="250" y="228" width="3" height="1" fill="#00ee90"/><rect x="244" y="227" width="2" height="1" fill="#000"/><rect x="243" y="217" width="1" height="1" fill="#00ee90"/><rect x="248" y="222" width="2" height="1" fill="#00ee90"/><rect x="248" y="230" width="2" height="2" fill="#00ee90"/><rect x="247" y="232" width="3" height="1" fill="#00ee90"/><rect x="246" y="226" width="1" height="1" fill="#00ee90"/><rect x="246" y="230" width="2" height="2" fill="#00ee90"/><rect x="239" y="202" width="1" height="1" fill="#000"/><rect x="234" y="204" width="3" height="1" fill="#00ee90"/><rect x="244" y="209" width="1" height="1" fill="#00ee90"/><rect x="247" y="207" width="1" height="2" fill="#00ee90"/><rect x="232" y="206" width="2" height="2" fill="#00ee90"/><rect x="243" y="212" width="2" height="1" fill="#00ee90"/><rect x="251" y="207" width="1" height="1" fill="#00ee90"/><rect x="244" y="208" width="2" height="1" fill="#000"/><rect x="243" y="207" width="3" height="1" fill="#000"/><rect x="233" y="204" width="2" height="1" fill="#00ee90"/><rect x="242" y="206" width="3" height="1" fill="#f8f080"/><rect x="242" y="209" width="1" height="1" fill="#f8f080"/><rect x="243" y="209" width="3" height="2" fill="#f8f080"/><rect x="242" y="205" width="2" height="1" fill="#000"/><rect x="232" y="203" width="2" height="2" fill="#00ee90"/></g></g><g stroke="#f0e68c" stroke-width="1" shape-rendering="crispEdges"><line x1="78.5" y1="102.5" x2="88.5" y2="102.5"/><line x1="83.5" y1="97.5" x2="83.5" y2="107.5"/><line x1="78.5" y1="184.5" x2="88.5" y2="184.5"/><line x1="83.5" y1="179.5" x2="83.5" y2="189.5"/><line x1="78.5" y1="265.5" x2="88.5" y2="265.5"/><line x1="83.5" y1="260.5" x2="83.5" y2="270.5"/><line x1="78.5" y1="346.5" x2="88.5" y2="346.5"/><line x1="83.5" y1="341.5" x2="83.5" y2="351.5"/><line x1="158.5" y1="102.5" x2="168.5" y2="102.5"/><line x1="163.5" y1="97.5" x2="163.5" y2="107.5"/><line x1="158.5" y1="184.5" x2="168.5" y2="184.5"/><line x1="163.5" y1="179.5" x2="163.5" y2="189.5"/><line x1="158.5" y1="265.5" x2="168.5" y2="265.5"/><line x1="163.5" y1="260.5" x2="163.5" y2="270.5"/><line x1="158.5" y1="346.5" x2="168.5" y2="346.5"/><line x1="163.5" y1="341.5" x2="163.5" y2="351.5"/><line x1="238.5" y1="102.5" x2="248.5" y2="102.5"/><line x1="243.5" y1="97.5" x2="243.5" y2="107.5"/><line x1="238.5" y1="184.5" x2="248.5" y2="184.5"/><line x1="243.5" y1="179.5" x2="243.5" y2="189.5"/><line x1="238.5" y1="265.5" x2="248.5" y2="265.5"/><line x1="243.5" y1="260.5" x2="243.5" y2="270.5"/><line x1="238.5" y1="346.5" x2="248.5" y2="346.5"/><line x1="243.5" y1="341.5" x2="243.5" y2="351.5"/><line x1="319.5" y1="102.5" x2="329.5" y2="102.5"/><line x1="324.5" y1="97.5" x2="324.5" y2="107.5"/><line x1="319.5" y1="184.5" x2="329.5" y2="184.5"/><line x1="324.5" y1="179.5" x2="324.5" y2="189.5"/><line x1="319.5" y1="265.5" x2="329.5" y2="265.5"/><line x1="324.5" y1="260.5" x2="324.5" y2="270.5"/><line x1="319.5" y1="346.5" x2="329.5" y2="346.5"/><line x1="324.5" y1="341.5" x2="324.5" y2="351.5"/><line x1="399.5" y1="102.5" x2="409.5" y2="102.5"/><line x1="404.5" y1="97.5" x2="404.5" y2="107.5"/><line x1="399.5" y1="184.5" x2="409.5" y2="184.5"/><line x1="404.5" y1="179.5" x2="404.5" y2="189.5"/><line x1="399.5" y1="265.5" x2="409.5" y2="265.5"/><line x1="404.5" y1="260.5" x2="404.5" y2="270.5"/><line x1="399.5" y1="346.5" x2="409.5" y2="346.5"/><line x1="404.5" y1="341.5" x2="404.5" y2="351.5"/><line x1="479.5" y1="102.5" x2="489.5" y2="102.5"/><line x1="484.5" y1="97.5" x2="484.5" y2="107.5"/><line x1="479.5" y1="184.5" x2="489.5" y2="184.5"/><line x1="484.5" y1="179.5" x2="484.5" y2="189.5"/><line x1="479.5" y1="265.5" x2="489.5" y2="265.5"/><line x1="484.5" y1="260.5" x2="484.5" y2="270.5"/><line x1="479.5" y1="346.5" x2="489.5" y2="346.5"/><line x1="484.5" y1="341.5" x2="484.5" y2="351.5"/></g><g transform="translate(237.5,191)" fill="#ff00ff" shape-rendering="crispEdges"><rect x="-0.5" y="-14" width="1" height="1"/><rect x="-2.5" y="-13" width="5" height="6"/><rect x="-1.5" y="-12" width="1" height="4" fill="#b4b4b4"/><rect x="0.5" y="-12" width="1" height="4" fill="#b4b4b4"/><rect x="-3.5" y="-8" width="7" height="2"/><rect x="-0.5" y="-6" width="1" height="2"/><rect x="-4.5" y="-4.5" width="9" height="2"/><path d="M-8,-3 l1.5,2.5 l2,-2.5 l2,2.5 l2.5,-2.5 l2.5,2.5 l2,-2.5 l2,2.5 l1.5,-2.5" fill="none" stroke="#ff00ff" stroke-width="1.1" shape-rendering="auto"/></g><g transform="translate(243.5,223)" fill="#ff00ff" shape-rendering="crispEdges"><rect x="-0.5" y="-14" width="1" height="1"/><rect x="-2.5" y="-13" width="5" height="6"/><rect x="-1.5" y="-12" width="1" height="4" fill="#b4b4b4"/><rect x="0.5" y="-12" width="1" height="4" fill="#b4b4b4"/><rect x="-3.5" y="-8" width="7" height="2"/><rect x="-0.5" y="-6" width="1" height="2"/><rect x="-4.5" y="-4.5" width="9" height="2"/><path d="M-8,-3 l1.5,2.5 l2,-2.5 l2,2.5 l2.5,-2.5 l2.5,2.5 l2,-2.5 l2,2.5 l1.5,-2.5" fill="none" stroke="#ff00ff" stroke-width="1.1" shape-rendering="auto"/></g><g transform="translate(243.5,272)" fill="#ff00ff" shape-rendering="crispEdges"><rect x="-0.5" y="-14" width="1" height="1"/><rect x="-2.5" y="-13" width="5" height="6"/><rect x="-1.5" y="-12" width="1" height="4" fill="#b4b4b4"/><rect x="0.5" y="-12" width="1" height="4" fill="#b4b4b4"/><rect x="-3.5" y="-8" width="7" height="2"/><rect x="-0.5" y="-6" width="1" height="2"/><rect x="-4.5" y="-4.5" width="9" height="2"/><path d="M-8,-3 l1.5,2.5 l2,-2.5 l2,2.5 l2.5,-2.5 l2.5,2.5 l2,-2.5 l2,2.5 l1.5,-2.5" fill="none" stroke="#ff00ff" stroke-width="1.1" shape-rendering="auto"/></g><g transform="translate(243.5,320)" fill="#ff00ff" shape-rendering="crispEdges"><rect x="-0.5" y="-14" width="1" height="1"/><rect x="-2.5" y="-13" width="5" height="6"/><rect x="-1.5" y="-12" width="1" height="4" fill="#b4b4b4"/><rect x="0.5" y="-12" width="1" height="4" fill="#b4b4b4"/><rect x="-3.5" y="-8" width="7" height="2"/><rect x="-0.5" y="-6" width="1" height="2"/><rect x="-4.5" y="-4.5" width="9" height="2"/><path d="M-8,-3 l1.5,2.5 l2,-2.5 l2,2.5 l2.5,-2.5 l2.5,2.5 l2,-2.5 l2,2.5 l1.5,-2.5" fill="none" stroke="#ff00ff" stroke-width="1.1" shape-rendering="auto"/></g><g transform="translate(243.5,352)" fill="#ff00ff" shape-rendering="crispEdges"><rect x="-0.5" y="-14" width="1" height="1"/><rect x="-2.5" y="-13" width="5" height="6"/><rect x="-1.5" y="-12" width="1" height="4" fill="#b4b4b4"/><rect x="0.5" y="-12" width="1" height="4" fill="#b4b4b4"/><rect x="-3.5" y="-8" width="7" height="2"/><rect x="-0.5" y="-6" width="1" height="2"/><rect x="-4.5" y="-4.5" width="9" height="2"/><path d="M-8,-3 l1.5,2.5 l2,-2.5 l2,2.5 l2.5,-2.5 l2.5,2.5 l2,-2.5 l2,2.5 l1.5,-2.5" fill="none" stroke="#ff00ff" stroke-width="1.1" shape-rendering="auto"/></g><g transform="translate(484.3,223)" fill="#ff00ff" shape-rendering="crispEdges"><rect x="-0.5" y="-14" width="1" height="1"/><rect x="-2.5" y="-13" width="5" height="6"/><rect x="-1.5" y="-12" width="1" height="4" fill="#b4b4b4"/><rect x="0.5" y="-12" width="1" height="4" fill="#b4b4b4"/><rect x="-3.5" y="-8" width="7" height="2"/><rect x="-0.5" y="-6" width="1" height="2"/><rect x="-4.5" y="-4.5" width="9" height="2"/><path d="M-8,-3 l1.5,2.5 l2,-2.5 l2,2.5 l2.5,-2.5 l2.5,2.5 l2,-2.5 l2,2.5 l1.5,-2.5" fill="none" stroke="#ff00ff" stroke-width="1.1" shape-rendering="auto"/></g><g transform="translate(484.3,272)" fill="#ff00ff" shape-rendering="crispEdges"><rect x="-0.5" y="-14" width="1" height="1"/><rect x="-2.5" y="-13" width="5" height="6"/><rect x="-1.5" y="-12" width="1" height="4" fill="#b4b4b4"/><rect x="0.5" y="-12" width="1" height="4" fill="#b4b4b4"/><rect x="-3.5" y="-8" width="7" height="2"/><rect x="-0.5" y="-6" width="1" height="2"/><rect x="-4.5" y="-4.5" width="9" height="2"/><path d="M-8,-3 l1.5,2.5 l2,-2.5 l2,2.5 l2.5,-2.5 l2.5,2.5 l2,-2.5 l2,2.5 l1.5,-2.5" fill="none" stroke="#ff00ff" stroke-width="1.1" shape-rendering="auto"/></g><g transform="translate(484.3,320)" fill="#ff00ff" shape-rendering="crispEdges"><rect x="-0.5" y="-14" width="1" height="1"/><rect x="-2.5" y="-13" width="5" height="6"/><rect x="-1.5" y="-12" width="1" height="4" fill="#b4b4b4"/><rect x="0.5" y="-12" width="1" height="4" fill="#b4b4b4"/><rect x="-3.5" y="-8" width="7" height="2"/><rect x="-0.5" y="-6" width="1" height="2"/><rect x="-4.5" y="-4.5" width="9" height="2"/><path d="M-8,-3 l1.5,2.5 l2,-2.5 l2,2.5 l2.5,-2.5 l2.5,2.5 l2,-2.5 l2,2.5 l1.5,-2.5" fill="none" stroke="#ff00ff" stroke-width="1.1" shape-rendering="auto"/></g><g transform="translate(484.3,352)" fill="#ff00ff" shape-rendering="crispEdges"><rect x="-0.5" y="-14" width="1" height="1"/><rect x="-2.5" y="-13" width="5" height="6"/><rect x="-1.5" y="-12" width="1" height="4" fill="#b4b4b4"/><rect x="0.5" y="-12" width="1" height="4" fill="#b4b4b4"/><rect x="-3.5" y="-8" width="7" height="2"/><rect x="-0.5" y="-6" width="1" height="2"/><rect x="-4.5" y="-4.5" width="9" height="2"/><path d="M-8,-3 l1.5,2.5 l2,-2.5 l2,2.5 l2.5,-2.5 l2.5,2.5 l2,-2.5 l2,2.5 l1.5,-2.5" fill="none" stroke="#ff00ff" stroke-width="1.1" shape-rendering="auto"/></g><rect x="486" y="30" width="86" height="350" fill="#000"/><g transform="translate(484.3,223)" fill="#ff00ff" shape-rendering="crispEdges"><rect x="-0.5" y="-14" width="1" height="1"/><rect x="-2.5" y="-13" width="5" height="6"/><rect x="-1.5" y="-12" width="1" height="4" fill="#b4b4b4"/><rect x="0.5" y="-12" width="1" height="4" fill="#b4b4b4"/><rect x="-3.5" y="-8" width="7" height="2"/><rect x="-0.5" y="-6" width="1" height="2"/><rect x="-4.5" y="-4.5" width="9" height="2"/><path d="M-8,-3 l1.5,2.5 l2,-2.5 l2,2.5 l2.5,-2.5 l2.5,2.5 l2,-2.5 l2,2.5 l1.5,-2.5" fill="none" stroke="#ff00ff" stroke-width="1.1" shape-rendering="auto"/></g><g transform="translate(484.3,272)" fill="#ff00ff" shape-rendering="crispEdges"><rect x="-0.5" y="-14" width="1" height="1"/><rect x="-2.5" y="-13" width="5" height="6"/><rect x="-1.5" y="-12" width="1" height="4" fill="#b4b4b4"/><rect x="0.5" y="-12" width="1" height="4" fill="#b4b4b4"/><rect x="-3.5" y="-8" width="7" height="2"/><rect x="-0.5" y="-6" width="1" height="2"/><rect x="-4.5" y="-4.5" width="9" height="2"/><path d="M-8,-3 l1.5,2.5 l2,-2.5 l2,2.5 l2.5,-2.5 l2.5,2.5 l2,-2.5 l2,2.5 l1.5,-2.5" fill="none" stroke="#ff00ff" stroke-width="1.1" shape-rendering="auto"/></g><g transform="translate(484.3,320)" fill="#ff00ff" shape-rendering="crispEdges"><rect x="-0.5" y="-14" width="1" height="1"/><rect x="-2.5" y="-13" width="5" height="6"/><rect x="-1.5" y="-12" width="1" height="4" fill="#b4b4b4"/><rect x="0.5" y="-12" width="1" height="4" fill="#b4b4b4"/><rect x="-3.5" y="-8" width="7" height="2"/><rect x="-0.5" y="-6" width="1" height="2"/><rect x="-4.5" y="-4.5" width="9" height="2"/><path d="M-8,-3 l1.5,2.5 l2,-2.5 l2,2.5 l2.5,-2.5 l2.5,2.5 l2,-2.5 l2,2.5 l1.5,-2.5" fill="none" stroke="#ff00ff" stroke-width="1.1" shape-rendering="auto"/></g><g transform="translate(484.3,352)" fill="#ff00ff" shape-rendering="crispEdges"><rect x="-0.5" y="-14" width="1" height="1"/><rect x="-2.5" y="-13" width="5" height="6"/><rect x="-1.5" y="-12" width="1" height="4" fill="#b4b4b4"/><rect x="0.5" y="-12" width="1" height="4" fill="#b4b4b4"/><rect x="-3.5" y="-8" width="7" height="2"/><rect x="-0.5" y="-6" width="1" height="2"/><rect x="-4.5" y="-4.5" width="9" height="2"/><path d="M-8,-3 l1.5,2.5 l2,-2.5 l2,2.5 l2.5,-2.5 l2.5,2.5 l2,-2.5 l2,2.5 l1.5,-2.5" fill="none" stroke="#ff00ff" stroke-width="1.1" shape-rendering="auto"/></g><text x="10" y="26.5" font-size="24" fill="#ffff00" textLength="245" lengthAdjust="spacing">23–aug–1997,01:05:00</text><text x="268" y="26.5" font-size="24" fill="#fff" textLength="282" lengthAdjust="spacing">ir plot.  Rhb_lowprf maxdz</text><text x="10" y="56" font-size="24" fill="#fff" textLength="148" lengthAdjust="spacing">filled contour.</text><text x="34" y="101.5" font-size="17" fill="#f0e68c" text-anchor="end">15</text><text x="34" y="182.5" font-size="17" fill="#f0e68c" text-anchor="end">10</text><text x="34" y="265" font-size="17" fill="#f0e68c" text-anchor="end">5</text><text x="34" y="345.5" font-size="17" fill="#f0e68c" text-anchor="end">0</text><text x="73.9" y="373" font-size="17" fill="#f0e68c" text-anchor="end">–</text><text x="77.0" y="373" font-size="17" fill="#f0e68c" textLength="26.5" lengthAdjust="spacing">135</text><text x="154.0" y="373" font-size="17" fill="#f0e68c" text-anchor="end">–</text><text x="157.1" y="373" font-size="17" fill="#f0e68c" textLength="26.5" lengthAdjust="spacing">130</text><text x="234.1" y="373" font-size="17" fill="#f0e68c" text-anchor="end">–</text><text x="237.2" y="373" font-size="17" fill="#f0e68c" textLength="26.5" lengthAdjust="spacing">125</text><text x="314.2" y="373" font-size="17" fill="#f0e68c" text-anchor="end">–</text><text x="317.3" y="373" font-size="17" fill="#f0e68c" textLength="26.5" lengthAdjust="spacing">120</text><text x="394.3" y="373" font-size="17" fill="#f0e68c" text-anchor="end">–</text><text x="397.4" y="373" font-size="17" fill="#f0e68c" textLength="26.5" lengthAdjust="spacing">115</text><text x="474.4" y="373" font-size="17" fill="#f0e68c" text-anchor="end">–</text><text x="477.5" y="373" font-size="17" fill="#f0e68c" textLength="26.5" lengthAdjust="spacing">110</text><g shape-rendering="crispEdges"><line x1="486" y1="34.5" x2="572" y2="34.5" stroke="#999"/><line x1="486" y1="237.5" x2="572" y2="237.5" stroke="#999"/><line x1="486" y1="375.5" x2="572" y2="375.5" stroke="#999"/><rect x="489" y="60.0" width="10" height="6.4" fill="rgb(10,10,10)"/><rect x="489" y="65.9" width="10" height="6.4" fill="rgb(23,23,23)"/><rect x="489" y="71.8" width="10" height="6.4" fill="rgb(36,36,36)"/><rect x="489" y="77.7" width="10" height="6.4" fill="rgb(49,49,49)"/><rect x="489" y="83.6" width="10" height="6.4" fill="rgb(62,62,62)"/><rect x="489" y="89.5" width="10" height="6.4" fill="rgb(75,75,75)"/><rect x="489" y="95.4" width="10" height="6.4" fill="rgb(88,88,88)"/><rect x="489" y="101.3" width="10" height="6.4" fill="rgb(101,101,101)"/><rect x="489" y="107.2" width="10" height="6.4" fill="rgb(114,114,114)"/><rect x="489" y="113.2" width="10" height="6.4" fill="rgb(127,127,127)"/><rect x="489" y="119.1" width="10" height="6.4" fill="rgb(140,140,140)"/><rect x="489" y="125.0" width="10" height="6.4" fill="rgb(153,153,153)"/><rect x="489" y="130.9" width="10" height="6.4" fill="rgb(166,166,166)"/><rect x="489" y="136.8" width="10" height="6.4" fill="rgb(179,179,179)"/><rect x="489" y="142.7" width="10" height="6.4" fill="rgb(192,192,192)"/><rect x="489" y="148.6" width="10" height="6.4" fill="rgb(205,205,205)"/><rect x="489" y="154.5" width="10" height="16.5" fill="#0000ff"/><rect x="489" y="171" width="10" height="1" fill="#fff"/><rect x="489" y="172" width="10" height="4" fill="#ff0000"/><rect x="489" y="176" width="10" height="4.5" fill="#ffa500"/><rect x="489" y="180.5" width="10" height="3.5" fill="#ffc0cb"/><rect x="489" y="184" width="10" height="4" fill="#ffff00"/><rect x="489" y="263" width="10" height="28" fill="#b22222"/><rect x="489" y="291" width="10" height="28" fill="#ffa07a"/><rect x="489" y="319" width="10" height="28" fill="#f8f080"/><rect x="489" y="347" width="10" height="28" fill="#00ee90"/></g><text x="489" y="46.5" font-size="17" fill="#fff">ir</text><text x="504" y="68.5" font-size="17.5" fill="#fff" textLength="44.5" lengthAdjust="spacing">387.0</text><text x="504" y="90.8" font-size="17.5" fill="#fff" textLength="44.5" lengthAdjust="spacing">351.0</text><text x="504" y="113.2" font-size="17.5" fill="#fff" textLength="44.5" lengthAdjust="spacing">315.0</text><text x="504" y="135.6" font-size="17.5" fill="#fff" textLength="44.5" lengthAdjust="spacing">279.0</text><text x="504" y="157.9" font-size="17.5" fill="#fff" textLength="44.5" lengthAdjust="spacing">243.0</text><text x="504" y="180.2" font-size="17.5" fill="#fff" textLength="44.5" lengthAdjust="spacing">207.0</text><text x="489" y="257.5" font-size="17" fill="#fff" textLength="52" lengthAdjust="spacing">maxdz</text><text x="504" y="285.0" font-size="17.5" fill="#fff" textLength="34.5" lengthAdjust="spacing">55.0</text><text x="504" y="313.0" font-size="17.5" fill="#fff" textLength="34.5" lengthAdjust="spacing">45.0</text><text x="504" y="341.0" font-size="17.5" fill="#fff" textLength="34.5" lengthAdjust="spacing">35.0</text><text x="504" y="369.0" font-size="17.5" fill="#fff" textLength="34.5" lengthAdjust="spacing">25.0</text><g transform="translate(5,376)"><rect x="0.5" y="0.5" width="45" height="47" fill="#191970" stroke="#8c8c8c" stroke-width="1"/><path d="M6.5,12.5 C9,8.5 14,6.2 20,7.8 C26,9.5 31,13.5 38,8.5 L7,40 C12,35.5 17,35 23,37.8 C29,40.5 34,41 38.5,36" fill="none" stroke="#ffff00" stroke-width="1.7" stroke-linejoin="round" stroke-linecap="round"/><path d="M9,10.5 C13,7 18,7 22,8.5 C27,10.5 31,12.5 36,10 C31,14 26,11.5 21,10 C16,8.5 12,9 9,10.5Z M9,38.5 C13,35 18,35.5 23,37.8 C28,40 33,40.5 37,37.5 C33,42 27,41.5 22,39.5 C17,37.5 13,37 9,38.5Z" fill="#ffff00"/></g><g transform="translate(52,376)"><rect x="0.5" y="0.5" width="45" height="47" fill="#191970" stroke="#8c8c8c" stroke-width="1"/><text x="3" y="14.5" font-size="14" font-weight="bold" fill="#ffff00" textLength="30" lengthAdjust="spacingAndGlyphs">GOES</text><path d="M3,44 L3,18 C12,17 22,24 23.5,44 Z" fill="url(#dy)"/><path d="M12,25 C15,21 19,24 20,30 C20,33 15,33 13,31 Z M3,38 C7,36 11,38 11,44 L3,44Z M3,18 l4,0 l-2,5 l-2,2z" fill="#ffff00"/><path d="M40,18 l3.5,3.5 l-3.5,3.5 l-3.5,-3.5z" fill="#ffff00"/><path d="M21,24 L37,21 M24,32 L38,24" stroke="#ffff00" stroke-width="1.2" stroke-dasharray="1.2 1.6" fill="none"/><rect x="19" y="17" width="1.3" height="1.3" fill="#ffff00"/><rect x="25" y="20" width="1.3" height="1.3" fill="#ffff00"/><rect x="30" y="19" width="1.3" height="1.3" fill="#ffff00"/><rect x="34" y="31" width="1.3" height="1.3" fill="#ffff00"/><rect x="39" y="30" width="1.3" height="1.3" fill="#ffff00"/><text x="25" y="43.5" font-size="10" fill="#ffff00" textLength="15" lengthAdjust="spacingAndGlyphs">.IR</text></g><g transform="translate(99,376)"><rect x="0.5" y="0.5" width="45" height="47" fill="#191970" stroke="#8c8c8c" stroke-width="1"/><g transform="translate(0,0) scale(1.0)"><path d="M5,9.4 C7,20 15,29 27.4,31.2" fill="none" stroke="#ffff00" stroke-width="1.8" stroke-linecap="round"/><path d="M11.3,31 L14.8,31 L15.6,40 L8.8,40 Z" fill="#ffff00"/><path d="M13.6,22 L13,32" stroke="#ffff00" stroke-width="1.3"/><path d="M12,24 v-3 h4 v3.5" fill="none" stroke="#ffff00" stroke-width="1"/></g><text x="36.8" y="16.5" font-size="12.5" fill="#ffff00" text-anchor="middle">S</text><text x="36.8" y="28.5" font-size="12.5" fill="#ffff00" text-anchor="middle">U</text><text x="36.8" y="40.5" font-size="12.5" fill="#ffff00" text-anchor="middle">R</text></g><g transform="translate(146,376)"><rect x="0.5" y="0.5" width="45" height="47" fill="#696969" stroke="#999" stroke-width="1"/><line x1="5.5" y1="5.0" x2="5.5" y2="43.0" stroke="#d8d8d8" stroke-width="1.2"/><line x1="14.5" y1="5.0" x2="14.5" y2="43.0" stroke="#d8d8d8" stroke-width="1.2"/><line x1="23.5" y1="5.0" x2="23.5" y2="43.0" stroke="#d8d8d8" stroke-width="1.2"/><line x1="32.5" y1="5.0" x2="32.5" y2="43.0" stroke="#d8d8d8" stroke-width="1.2"/><line x1="41.5" y1="5.0" x2="41.5" y2="43.0" stroke="#d8d8d8" stroke-width="1.2"/><line x1="5.0" y1="5.5" x2="42.0" y2="5.5" stroke="#d8d8d8" stroke-width="1.2"/><line x1="5.0" y1="14.5" x2="42.0" y2="14.5" stroke="#d8d8d8" stroke-width="1.2"/><line x1="5.0" y1="23.5" x2="42.0" y2="23.5" stroke="#d8d8d8" stroke-width="1.2"/><line x1="5.0" y1="33.5" x2="42.0" y2="33.5" stroke="#d8d8d8" stroke-width="1.2"/><line x1="5.0" y1="42.5" x2="42.0" y2="42.5" stroke="#d8d8d8" stroke-width="1.2"/><path d="M12.5,8 C14,19 22,28 35,31.5" fill="none" stroke="#d8d8d8" stroke-width="2" stroke-linecap="round"/><path d="M17.5,20.5 L20.5,23 L23,40 L15,40 Z" fill="#d8d8d8"/></g><g transform="translate(193,376)"><rect x="0.5" y="0.5" width="13" height="47" fill="#696969" stroke="#999" stroke-width="1"/><text x="7.3" y="11" font-size="6.3" fill="#d8d8d8" text-anchor="middle">B</text><text x="7.3" y="17.2" font-size="6.3" fill="#d8d8d8" text-anchor="middle">O</text><text x="7.3" y="23.4" font-size="6.3" fill="#d8d8d8" text-anchor="middle">U</text><text x="7.3" y="29.6" font-size="6.3" fill="#d8d8d8" text-anchor="middle">N</text><text x="7.3" y="35.8" font-size="6.3" fill="#d8d8d8" text-anchor="middle">D</text><text x="7.3" y="42" font-size="6.3" fill="#d8d8d8" text-anchor="middle">S</text></g><g transform="translate(208,400)"><rect x="0.5" y="0.5" width="21" height="23" fill="#191970" stroke="#8c8c8c" stroke-width="1"/><line x1="3.5" y1="4" x2="3.5" y2="20" stroke="#ffff00" stroke-width="1.2"/><line x1="8.5" y1="4" x2="8.5" y2="20" stroke="#ffff00" stroke-width="1.2"/><line x1="13.5" y1="4" x2="13.5" y2="20" stroke="#ffff00" stroke-width="1.2"/><line x1="18.5" y1="4" x2="18.5" y2="20" stroke="#ffff00" stroke-width="1.2"/><line x1="3" y1="4.5" x2="19" y2="4.5" stroke="#ffff00" stroke-width="1.2"/><line x1="3" y1="9.5" x2="19" y2="9.5" stroke="#ffff00" stroke-width="1.2"/><line x1="3" y1="14.5" x2="19" y2="14.5" stroke="#ffff00" stroke-width="1.2"/><line x1="3" y1="19.5" x2="19" y2="19.5" stroke="#ffff00" stroke-width="1.2"/></g><g transform="translate(231,376)"><rect x="0.5" y="0.5" width="20" height="47" fill="#191970" stroke="#8c8c8c" stroke-width="1"/><path d="M3,5 l4,-1 l2,3 l-2,3 l2,3 l-2,2 l-2,-4 l-3,-1 z M9,5 l5,-1 l3,-1 l0,2 l-3,1 l2,3 l0,5 l-3,-2 l-1,-4 z M4,13 l2,0 l0,2 l-2,0z" fill="#ffff00"/><text x="10.4" y="25" font-size="9.5" fill="#ffff00" text-anchor="middle">M</text><text x="10.4" y="33" font-size="9.5" fill="#ffff00" text-anchor="middle">A</text><text x="10.4" y="41" font-size="9.5" fill="#ffff00" text-anchor="middle">P</text></g><g transform="translate(253,376)"><rect x="0.5" y="0.5" width="20" height="47" fill="#696969" stroke="#999" stroke-width="1"/><ellipse cx="10.5" cy="23" rx="7.2" ry="7.8" fill="none" stroke="#d8d8d8" stroke-width="1.1"/><ellipse cx="10.5" cy="23" rx="5.2" ry="5.6" fill="none" stroke="#d8d8d8" stroke-width="1"/><circle cx="10.5" cy="23" r="2.6" fill="none" stroke="#d8d8d8" stroke-width="1.1"/><line x1="12.9" y1="24.0" x2="17.2" y2="26.0" stroke="#d8d8d8" stroke-width="1"/><line x1="11.5" y1="25.4" x2="13.3" y2="30.2" stroke="#d8d8d8" stroke-width="1"/><line x1="9.5" y1="25.4" x2="7.7" y2="30.2" stroke="#d8d8d8" stroke-width="1"/><line x1="8.1" y1="24.0" x2="3.8" y2="26.0" stroke="#d8d8d8" stroke-width="1"/><line x1="8.1" y1="22.0" x2="3.8" y2="20.0" stroke="#d8d8d8" stroke-width="1"/><line x1="9.5" y1="20.6" x2="7.7" y2="15.8" stroke="#d8d8d8" stroke-width="1"/><line x1="11.5" y1="20.6" x2="13.3" y2="15.8" stroke="#d8d8d8" stroke-width="1"/><line x1="12.9" y1="22.0" x2="17.2" y2="20.0" stroke="#d8d8d8" stroke-width="1"/></g><g transform="translate(275,400)"><rect x="0.5" y="0.5" width="21" height="23" fill="#191970" stroke="#8c8c8c" stroke-width="1"/><g transform="translate(11,20.5)" fill="#ffff00" shape-rendering="crispEdges"><rect x="-0.5" y="-14" width="1" height="1"/><rect x="-2.5" y="-13" width="5" height="6"/><rect x="-1.5" y="-12" width="1" height="4" fill="#191970"/><rect x="0.5" y="-12" width="1" height="4" fill="#191970"/><rect x="-3.5" y="-8" width="7" height="2"/><rect x="-0.5" y="-6" width="1" height="2"/><rect x="-4.5" y="-4.5" width="9" height="2"/><path d="M-8,-3 l1.5,2.5 l2,-2.5 l2,2.5 l2.5,-2.5 l2.5,2.5 l2,-2.5 l2,2.5 l1.5,-2.5" fill="none" stroke="#ffff00" stroke-width="1.1" shape-rendering="auto"/></g></g><g transform="translate(298,376)"><rect x="0.5" y="0.5" width="45" height="47" fill="#696969" stroke="#999" stroke-width="1"/><path d="M6,32 L40,32 L36.5,38 L8.5,38 Z" fill="none" stroke="#d8d8d8" stroke-width="1.2"/><path d="M8,32 L8,24 L12.5,24 L14,32" fill="none" stroke="#d8d8d8" stroke-width="1.2"/><circle cx="22" cy="23" r="2.9" fill="none" stroke="#d8d8d8" stroke-width="1.2"/><rect x="21.2" y="26" width="1.8" height="6" fill="none" stroke="#d8d8d8" stroke-width="0.8"/><line x1="34.2" y1="16" x2="34.2" y2="32" stroke="#d8d8d8" stroke-width="1.2"/><path d="M3,44 L3,40 l2,-1.5 l2.5,2 l2.5,-2 l2.5,2 l2.5,-2 l2.5,2 l2.5,-2 l2.5,2 l2.5,-2 l2.5,2 l2.5,-2 l2.5,2 l2.5,-2 l2.5,2 l2.5,-2 l2,1.5 L43,44 Z" fill="#d8d8d8"/></g><g stroke="#fff" stroke-width="1" stroke-dasharray="1 1"><line x1="0" y1="426.5" x2="573" y2="426.5"/><line x1="572.5" y1="2" x2="572.5" y2="427"/></g></g>
<g><rect x="5" y="427" width="569" height="444" fill="#000"/><g clip-path="url(#rdclip)"><g shape-rendering="crispEdges"><rect x="297" y="638" width="4" height="2" fill="#00e896"/><rect x="295" y="640" width="2" height="2" fill="#c8c8c8"/><rect x="297" y="640" width="4" height="2" fill="#dc9432"/><rect x="245" y="642" width="2" height="2" fill="#08704a"/><rect x="251" y="642" width="2" height="2" fill="#08704a"/><rect x="293" y="642" width="2" height="2" fill="#08704a"/><rect x="295" y="642" width="2" height="2" fill="#c8c8c8"/><rect x="297" y="642" width="2" height="2" fill="#dc9432"/><rect x="299" y="642" width="2" height="2" fill="#eeb422"/><rect x="245" y="644" width="2" height="2" fill="#08704a"/><rect x="249" y="644" width="2" height="2" fill="#00e896"/><rect x="253" y="644" width="2" height="2" fill="#08704a"/><rect x="295" y="644" width="2" height="2" fill="#08704a"/><rect x="297" y="644" width="2" height="2" fill="#c8c8c8"/><rect x="249" y="646" width="4" height="2" fill="#00e896"/><rect x="253" y="646" width="2" height="2" fill="#08704a"/><rect x="253" y="648" width="2" height="2" fill="#08704a"/><rect x="253" y="650" width="2" height="2" fill="#08704a"/><rect x="255" y="652" width="2" height="2" fill="#08704a"/><rect x="275" y="654" width="2" height="2" fill="#08704a"/><rect x="257" y="656" width="2" height="2" fill="#08704a"/><rect x="273" y="656" width="4" height="2" fill="#08704a"/><rect x="279" y="656" width="4" height="2" fill="#08704a"/><rect x="265" y="658" width="4" height="2" fill="#08704a"/><rect x="269" y="658" width="4" height="2" fill="#00e896"/><rect x="275" y="658" width="6" height="2" fill="#00e896"/><rect x="267" y="660" width="4" height="2" fill="#08704a"/><rect x="259" y="557" width="6" height="3" fill="#08704a"/><rect x="232" y="566" width="6" height="3" fill="#00e896"/><rect x="238" y="566" width="3" height="3" fill="#dc9432"/><rect x="241" y="566" width="3" height="3" fill="#c8c8c8"/><rect x="274" y="566" width="6" height="3" fill="#08704a"/><rect x="229" y="569" width="3" height="3" fill="#08704a"/><rect x="232" y="569" width="6" height="3" fill="#00e896"/><rect x="238" y="569" width="6" height="3" fill="#dc9432"/><rect x="244" y="569" width="3" height="3" fill="#08704a"/><rect x="274" y="569" width="6" height="3" fill="#08704a"/><rect x="229" y="572" width="3" height="3" fill="#08704a"/><rect x="232" y="572" width="12" height="3" fill="#00e896"/><rect x="244" y="572" width="3" height="3" fill="#08704a"/><rect x="232" y="575" width="9" height="3" fill="#08704a"/><rect x="235" y="584" width="9" height="3" fill="#08704a"/><rect x="235" y="587" width="9" height="3" fill="#08704a"/><rect x="238" y="590" width="3" height="3" fill="#08704a"/><rect x="340" y="602" width="3" height="3" fill="#c8c8c8"/><rect x="331" y="605" width="3" height="3" fill="#00e896"/><rect x="334" y="605" width="6" height="3" fill="#c8c8c8"/><rect x="340" y="605" width="3" height="3" fill="#00e896"/><rect x="328" y="608" width="3" height="3" fill="#08704a"/><rect x="331" y="608" width="3" height="3" fill="#dc9432"/><rect x="334" y="608" width="6" height="3" fill="#eeb422"/><rect x="340" y="608" width="3" height="3" fill="#c8c8c8"/><rect x="211" y="611" width="3" height="3" fill="#08704a"/><rect x="214" y="611" width="3" height="3" fill="#00e896"/><rect x="226" y="611" width="3" height="3" fill="#00e896"/><rect x="325" y="611" width="6" height="3" fill="#08704a"/><rect x="331" y="611" width="3" height="3" fill="#dc9432"/><rect x="334" y="611" width="6" height="3" fill="#eeb422"/><rect x="340" y="611" width="3" height="3" fill="#c8c8c8"/><rect x="343" y="611" width="3" height="3" fill="#08704a"/><rect x="211" y="614" width="3" height="3" fill="#00e896"/><rect x="214" y="614" width="3" height="3" fill="#dc9432"/><rect x="217" y="614" width="3" height="3" fill="#00e896"/><rect x="226" y="614" width="3" height="3" fill="#00e896"/><rect x="322" y="614" width="3" height="3" fill="#c8c8c8"/><rect x="325" y="614" width="6" height="3" fill="#dc9432"/><rect x="331" y="614" width="3" height="3" fill="#00e896"/><rect x="334" y="614" width="6" height="3" fill="#c8c8c8"/><rect x="340" y="614" width="3" height="3" fill="#08704a"/><rect x="211" y="617" width="3" height="3" fill="#c8c8c8"/><rect x="214" y="617" width="3" height="3" fill="#dc9432"/><rect x="217" y="617" width="3" height="3" fill="#c8c8c8"/><rect x="319" y="617" width="3" height="3" fill="#08704a"/><rect x="322" y="617" width="3" height="3" fill="#dc9432"/><rect x="325" y="617" width="6" height="3" fill="#eeb422"/><rect x="331" y="617" width="3" height="3" fill="#dc9432"/><rect x="334" y="617" width="9" height="3" fill="#08704a"/><rect x="211" y="620" width="3" height="3" fill="#08704a"/><rect x="214" y="620" width="3" height="3" fill="#00e896"/><rect x="217" y="620" width="3" height="3" fill="#08704a"/><rect x="313" y="620" width="6" height="3" fill="#08704a"/><rect x="322" y="620" width="3" height="3" fill="#dc9432"/><rect x="325" y="620" width="3" height="3" fill="#eeb422"/><rect x="328" y="620" width="3" height="3" fill="#dc9432"/><rect x="331" y="620" width="3" height="3" fill="#c8c8c8"/><rect x="334" y="620" width="3" height="3" fill="#08704a"/><rect x="337" y="620" width="3" height="3" fill="#00e896"/><rect x="340" y="620" width="6" height="3" fill="#08704a"/><rect x="310" y="623" width="3" height="3" fill="#c8c8c8"/><rect x="313" y="623" width="3" height="3" fill="#dc9432"/><rect x="316" y="623" width="3" height="3" fill="#c8c8c8"/><rect x="319" y="623" width="3" height="3" fill="#08704a"/><rect x="322" y="623" width="3" height="3" fill="#00e896"/><rect x="325" y="623" width="3" height="3" fill="#dc9432"/><rect x="328" y="623" width="3" height="3" fill="#c8c8c8"/><rect x="331" y="623" width="9" height="3" fill="#08704a"/><rect x="340" y="623" width="3" height="3" fill="#00e896"/><rect x="343" y="623" width="3" height="3" fill="#08704a"/><rect x="307" y="626" width="3" height="3" fill="#08704a"/><rect x="310" y="626" width="3" height="3" fill="#dc9432"/><rect x="313" y="626" width="6" height="3" fill="#eeb422"/><rect x="319" y="626" width="3" height="3" fill="#00e896"/><rect x="337" y="626" width="3" height="3" fill="#08704a"/><rect x="307" y="629" width="3" height="3" fill="#08704a"/><rect x="310" y="629" width="3" height="3" fill="#dc9432"/><rect x="313" y="629" width="3" height="3" fill="#eeb422"/><rect x="316" y="629" width="3" height="3" fill="#dc9432"/><rect x="319" y="629" width="3" height="3" fill="#00e896"/><rect x="310" y="632" width="9" height="3" fill="#c8c8c8"/><rect x="199" y="635" width="3" height="3" fill="#08704a"/><rect x="346" y="635" width="3" height="3" fill="#c8c8c8"/><rect x="199" y="638" width="3" height="3" fill="#00e896"/><rect x="202" y="638" width="3" height="3" fill="#08704a"/><rect x="301" y="638" width="3" height="3" fill="#c8c8c8"/><rect x="304" y="638" width="3" height="3" fill="#00e896"/><rect x="343" y="638" width="3" height="3" fill="#08704a"/><rect x="199" y="641" width="3" height="3" fill="#00e896"/><rect x="202" y="641" width="3" height="3" fill="#08704a"/><rect x="208" y="641" width="3" height="3" fill="#08704a"/><rect x="241" y="641" width="3" height="3" fill="#08704a"/><rect x="301" y="641" width="3" height="3" fill="#eeb422"/><rect x="304" y="641" width="3" height="3" fill="#dc9432"/><rect x="307" y="641" width="3" height="3" fill="#00e896"/><rect x="337" y="641" width="3" height="3" fill="#08704a"/><rect x="343" y="641" width="3" height="3" fill="#08704a"/><rect x="199" y="644" width="3" height="3" fill="#c8c8c8"/><rect x="202" y="644" width="9" height="3" fill="#08704a"/><rect x="298" y="644" width="6" height="3" fill="#c8c8c8"/><rect x="304" y="644" width="3" height="3" fill="#00e896"/><rect x="340" y="644" width="3" height="3" fill="#08704a"/><rect x="343" y="644" width="3" height="3" fill="#00e896"/><rect x="199" y="647" width="3" height="3" fill="#c8c8c8"/><rect x="202" y="647" width="6" height="3" fill="#08704a"/><rect x="238" y="647" width="3" height="3" fill="#08704a"/><rect x="244" y="647" width="3" height="3" fill="#00e896"/><rect x="331" y="647" width="6" height="3" fill="#08704a"/><rect x="337" y="647" width="3" height="3" fill="#00e896"/><rect x="343" y="647" width="3" height="3" fill="#00e896"/><rect x="199" y="650" width="3" height="3" fill="#00e896"/><rect x="202" y="650" width="6" height="3" fill="#c8c8c8"/><rect x="244" y="650" width="3" height="3" fill="#00e896"/><rect x="334" y="650" width="9" height="3" fill="#00e896"/><rect x="202" y="653" width="6" height="3" fill="#c8c8c8"/><rect x="241" y="653" width="3" height="3" fill="#00e896"/><rect x="244" y="653" width="3" height="3" fill="#08704a"/><rect x="247" y="653" width="3" height="3" fill="#00e896"/><rect x="250" y="653" width="3" height="3" fill="#08704a"/><rect x="310" y="653" width="3" height="3" fill="#08704a"/><rect x="313" y="653" width="12" height="3" fill="#c8c8c8"/><rect x="325" y="653" width="3" height="3" fill="#08704a"/><rect x="331" y="653" width="3" height="3" fill="#08704a"/><rect x="337" y="653" width="6" height="3" fill="#00e896"/><rect x="202" y="656" width="3" height="3" fill="#08704a"/><rect x="238" y="656" width="3" height="3" fill="#08704a"/><rect x="244" y="656" width="3" height="3" fill="#00e896"/><rect x="247" y="656" width="3" height="3" fill="#08704a"/><rect x="310" y="656" width="3" height="3" fill="#c8c8c8"/><rect x="313" y="656" width="6" height="3" fill="#eeb422"/><rect x="319" y="656" width="6" height="3" fill="#dc9432"/><rect x="325" y="656" width="3" height="3" fill="#00e896"/><rect x="229" y="659" width="3" height="3" fill="#08704a"/><rect x="238" y="659" width="3" height="3" fill="#08704a"/><rect x="244" y="659" width="3" height="3" fill="#00e896"/><rect x="247" y="659" width="3" height="3" fill="#08704a"/><rect x="253" y="659" width="3" height="3" fill="#08704a"/><rect x="259" y="659" width="3" height="3" fill="#08704a"/><rect x="310" y="659" width="3" height="3" fill="#00e896"/><rect x="313" y="659" width="3" height="3" fill="#c8c8c8"/><rect x="316" y="659" width="6" height="3" fill="#dc9432"/><rect x="322" y="659" width="3" height="3" fill="#c8c8c8"/><rect x="325" y="659" width="3" height="3" fill="#08704a"/><rect x="331" y="659" width="3" height="3" fill="#08704a"/><rect x="337" y="659" width="3" height="3" fill="#00e896"/><rect x="238" y="662" width="3" height="3" fill="#00e896"/><rect x="253" y="662" width="3" height="3" fill="#00e896"/><rect x="256" y="662" width="6" height="3" fill="#08704a"/><rect x="265" y="662" width="3" height="3" fill="#00e896"/><rect x="271" y="662" width="3" height="3" fill="#00e896"/><rect x="277" y="662" width="3" height="3" fill="#00e896"/><rect x="283" y="662" width="3" height="3" fill="#08704a"/><rect x="292" y="662" width="3" height="3" fill="#00e896"/><rect x="295" y="662" width="3" height="3" fill="#08704a"/><rect x="313" y="662" width="3" height="3" fill="#08704a"/><rect x="316" y="662" width="3" height="3" fill="#00e896"/><rect x="319" y="662" width="3" height="3" fill="#08704a"/><rect x="322" y="662" width="3" height="3" fill="#00e896"/><rect x="328" y="662" width="3" height="3" fill="#c8c8c8"/><rect x="337" y="662" width="3" height="3" fill="#c8c8c8"/><rect x="205" y="665" width="3" height="3" fill="#00e896"/><rect x="217" y="665" width="3" height="3" fill="#08704a"/><rect x="226" y="665" width="3" height="3" fill="#08704a"/><rect x="235" y="665" width="3" height="3" fill="#00e896"/><rect x="250" y="665" width="3" height="3" fill="#00e896"/><rect x="256" y="665" width="6" height="3" fill="#00e896"/><rect x="265" y="665" width="3" height="3" fill="#08704a"/><rect x="271" y="665" width="6" height="3" fill="#00e896"/><rect x="280" y="665" width="6" height="3" fill="#00e896"/><rect x="292" y="665" width="3" height="3" fill="#eeb422"/><rect x="295" y="665" width="3" height="3" fill="#dc9432"/><rect x="325" y="665" width="6" height="3" fill="#c8c8c8"/><rect x="334" y="665" width="3" height="3" fill="#00e896"/><rect x="337" y="665" width="3" height="3" fill="#eeb422"/><rect x="208" y="668" width="3" height="3" fill="#00e896"/><rect x="211" y="668" width="3" height="3" fill="#08704a"/><rect x="220" y="668" width="3" height="3" fill="#08704a"/><rect x="226" y="668" width="3" height="3" fill="#08704a"/><rect x="232" y="668" width="3" height="3" fill="#00e896"/><rect x="238" y="668" width="3" height="3" fill="#00e896"/><rect x="247" y="668" width="3" height="3" fill="#00e896"/><rect x="253" y="668" width="3" height="3" fill="#00e896"/><rect x="259" y="668" width="3" height="3" fill="#00e896"/><rect x="265" y="668" width="3" height="3" fill="#08704a"/><rect x="271" y="668" width="12" height="3" fill="#00e896"/><rect x="292" y="668" width="3" height="3" fill="#00e896"/><rect x="295" y="668" width="3" height="3" fill="#08704a"/><rect x="313" y="668" width="3" height="3" fill="#00e896"/><rect x="316" y="668" width="6" height="3" fill="#c8c8c8"/><rect x="325" y="668" width="6" height="3" fill="#dc9432"/><rect x="331" y="668" width="6" height="3" fill="#c8c8c8"/><rect x="211" y="671" width="3" height="3" fill="#00e896"/><rect x="214" y="671" width="6" height="3" fill="#08704a"/><rect x="220" y="671" width="3" height="3" fill="#00e896"/><rect x="223" y="671" width="3" height="3" fill="#08704a"/><rect x="226" y="671" width="3" height="3" fill="#00e896"/><rect x="229" y="671" width="3" height="3" fill="#08704a"/><rect x="232" y="671" width="3" height="3" fill="#00e896"/><rect x="238" y="671" width="6" height="3" fill="#00e896"/><rect x="253" y="671" width="6" height="3" fill="#00e896"/><rect x="262" y="671" width="3" height="3" fill="#08704a"/><rect x="268" y="671" width="6" height="3" fill="#08704a"/><rect x="274" y="671" width="3" height="3" fill="#00e896"/><rect x="310" y="671" width="3" height="3" fill="#08704a"/><rect x="313" y="671" width="3" height="3" fill="#c8c8c8"/><rect x="316" y="671" width="9" height="3" fill="#dc9432"/><rect x="328" y="671" width="6" height="3" fill="#dc9432"/><rect x="211" y="674" width="3" height="3" fill="#00e896"/><rect x="214" y="674" width="6" height="3" fill="#08704a"/><rect x="220" y="674" width="3" height="3" fill="#00e896"/><rect x="223" y="674" width="3" height="3" fill="#08704a"/><rect x="226" y="674" width="3" height="3" fill="#00e896"/><rect x="238" y="674" width="6" height="3" fill="#08704a"/><rect x="247" y="674" width="3" height="3" fill="#00e896"/><rect x="262" y="674" width="3" height="3" fill="#00e896"/><rect x="310" y="674" width="3" height="3" fill="#08704a"/><rect x="313" y="674" width="3" height="3" fill="#dc9432"/><rect x="316" y="674" width="3" height="3" fill="#eeb422"/><rect x="319" y="674" width="3" height="3" fill="#dc9432"/><rect x="322" y="674" width="3" height="3" fill="#c8c8c8"/><rect x="331" y="674" width="3" height="3" fill="#c8c8c8"/><rect x="214" y="677" width="3" height="3" fill="#00e896"/><rect x="217" y="677" width="3" height="3" fill="#08704a"/><rect x="229" y="677" width="3" height="3" fill="#08704a"/><rect x="235" y="677" width="3" height="3" fill="#c8c8c8"/><rect x="250" y="677" width="3" height="3" fill="#c8c8c8"/><rect x="310" y="677" width="3" height="3" fill="#08704a"/><rect x="313" y="677" width="3" height="3" fill="#c8c8c8"/><rect x="316" y="677" width="6" height="3" fill="#dc9432"/><rect x="322" y="677" width="3" height="3" fill="#c8c8c8"/><rect x="328" y="677" width="3" height="3" fill="#c8c8c8"/><rect x="220" y="680" width="3" height="3" fill="#08704a"/><rect x="223" y="680" width="3" height="3" fill="#c8c8c8"/><rect x="232" y="680" width="3" height="3" fill="#00e896"/><rect x="265" y="680" width="6" height="3" fill="#08704a"/><rect x="301" y="680" width="3" height="3" fill="#08704a"/><rect x="304" y="680" width="3" height="3" fill="#00e896"/><rect x="313" y="680" width="3" height="3" fill="#00e896"/><rect x="316" y="680" width="6" height="3" fill="#c8c8c8"/><rect x="322" y="680" width="3" height="3" fill="#08704a"/><rect x="220" y="683" width="3" height="3" fill="#c8c8c8"/><rect x="223" y="683" width="3" height="3" fill="#00e896"/><rect x="226" y="683" width="6" height="3" fill="#08704a"/><rect x="235" y="683" width="3" height="3" fill="#00e896"/><rect x="241" y="683" width="3" height="3" fill="#00e896"/><rect x="253" y="683" width="3" height="3" fill="#00e896"/><rect x="265" y="683" width="3" height="3" fill="#08704a"/><rect x="271" y="683" width="3" height="3" fill="#08704a"/><rect x="274" y="683" width="3" height="3" fill="#00e896"/><rect x="286" y="683" width="3" height="3" fill="#08704a"/><rect x="295" y="683" width="3" height="3" fill="#08704a"/><rect x="298" y="683" width="3" height="3" fill="#c8c8c8"/><rect x="301" y="683" width="6" height="3" fill="#eeb422"/><rect x="307" y="683" width="3" height="3" fill="#c8c8c8"/><rect x="310" y="683" width="3" height="3" fill="#08704a"/><rect x="223" y="686" width="9" height="3" fill="#00e896"/><rect x="235" y="686" width="3" height="3" fill="#00e896"/><rect x="238" y="686" width="3" height="3" fill="#08704a"/><rect x="244" y="686" width="3" height="3" fill="#00e896"/><rect x="256" y="686" width="3" height="3" fill="#08704a"/><rect x="262" y="686" width="6" height="3" fill="#08704a"/><rect x="271" y="686" width="3" height="3" fill="#00e896"/><rect x="277" y="686" width="6" height="3" fill="#c8c8c8"/><rect x="295" y="686" width="3" height="3" fill="#08704a"/><rect x="298" y="686" width="6" height="3" fill="#dc9432"/><rect x="304" y="686" width="3" height="3" fill="#eeb422"/><rect x="307" y="686" width="3" height="3" fill="#dc9432"/><rect x="235" y="689" width="9" height="3" fill="#00e896"/><rect x="247" y="689" width="6" height="3" fill="#00e896"/><rect x="259" y="689" width="3" height="3" fill="#08704a"/><rect x="271" y="689" width="3" height="3" fill="#c8c8c8"/><rect x="277" y="689" width="6" height="3" fill="#dc9432"/><rect x="292" y="689" width="3" height="3" fill="#08704a"/><rect x="301" y="689" width="6" height="3" fill="#08704a"/><rect x="238" y="692" width="3" height="3" fill="#08704a"/><rect x="253" y="692" width="3" height="3" fill="#08704a"/><rect x="268" y="692" width="3" height="3" fill="#00e896"/><rect x="274" y="692" width="3" height="3" fill="#dc9432"/><rect x="280" y="692" width="3" height="3" fill="#dc9432"/><rect x="292" y="692" width="3" height="3" fill="#08704a"/><rect x="268" y="695" width="3" height="3" fill="#00e896"/><rect x="271" y="695" width="9" height="3" fill="#c8c8c8"/><rect x="283" y="695" width="3" height="3" fill="#c8c8c8"/><rect x="286" y="695" width="3" height="3" fill="#dc9432"/><rect x="268" y="698" width="3" height="3" fill="#08704a"/><rect x="271" y="698" width="3" height="3" fill="#00e896"/><rect x="283" y="698" width="6" height="3" fill="#c8c8c8"/><rect x="289" y="698" width="3" height="3" fill="#00e896"/><rect x="292" y="698" width="3" height="3" fill="#08704a"/><rect x="268" y="701" width="3" height="3" fill="#08704a"/><rect x="271" y="701" width="3" height="3" fill="#00e896"/><rect x="274" y="701" width="3" height="3" fill="#c8c8c8"/><rect x="283" y="701" width="3" height="3" fill="#c8c8c8"/><rect x="286" y="701" width="3" height="3" fill="#00e896"/><rect x="289" y="701" width="3" height="3" fill="#08704a"/><rect x="277" y="704" width="3" height="3" fill="#08704a"/><rect x="275" y="510" width="8" height="4" fill="#08704a"/><rect x="275" y="514" width="8" height="4" fill="#08704a"/><rect x="275" y="518" width="4" height="4" fill="#08704a"/><rect x="279" y="522" width="8" height="4" fill="#00e896"/><rect x="287" y="522" width="4" height="4" fill="#08704a"/><rect x="339" y="530" width="4" height="4" fill="#08704a"/><rect x="271" y="534" width="4" height="4" fill="#08704a"/><rect x="275" y="534" width="4" height="4" fill="#00e896"/><rect x="279" y="534" width="4" height="4" fill="#08704a"/><rect x="339" y="534" width="4" height="4" fill="#00e896"/><rect x="343" y="534" width="4" height="4" fill="#08704a"/><rect x="271" y="538" width="4" height="4" fill="#08704a"/><rect x="275" y="538" width="4" height="4" fill="#00e896"/><rect x="339" y="538" width="8" height="4" fill="#08704a"/><rect x="259" y="550" width="4" height="4" fill="#08704a"/><rect x="367" y="550" width="4" height="4" fill="#08704a"/><rect x="259" y="554" width="8" height="4" fill="#00e896"/><rect x="367" y="562" width="8" height="4" fill="#c8c8c8"/><rect x="375" y="562" width="4" height="4" fill="#08704a"/><rect x="175" y="566" width="4" height="4" fill="#08704a"/><rect x="179" y="566" width="4" height="4" fill="#00e896"/><rect x="199" y="566" width="4" height="4" fill="#00e896"/><rect x="211" y="566" width="4" height="4" fill="#00e896"/><rect x="215" y="566" width="8" height="4" fill="#c8c8c8"/><rect x="227" y="566" width="4" height="4" fill="#08704a"/><rect x="367" y="566" width="4" height="4" fill="#08704a"/><rect x="371" y="566" width="8" height="4" fill="#00e896"/><rect x="163" y="570" width="8" height="4" fill="#08704a"/><rect x="195" y="570" width="4" height="4" fill="#08704a"/><rect x="199" y="570" width="4" height="4" fill="#c8c8c8"/><rect x="211" y="570" width="4" height="4" fill="#c8c8c8"/><rect x="215" y="570" width="4" height="4" fill="#dc9432"/><rect x="219" y="570" width="4" height="4" fill="#c8c8c8"/><rect x="223" y="570" width="4" height="4" fill="#08704a"/><rect x="331" y="570" width="4" height="4" fill="#08704a"/><rect x="367" y="570" width="4" height="4" fill="#08704a"/><rect x="371" y="570" width="12" height="4" fill="#00e896"/><rect x="167" y="574" width="4" height="4" fill="#08704a"/><rect x="183" y="574" width="4" height="4" fill="#08704a"/><rect x="187" y="574" width="4" height="4" fill="#00e896"/><rect x="191" y="574" width="4" height="4" fill="#08704a"/><rect x="195" y="574" width="4" height="4" fill="#00e896"/><rect x="199" y="574" width="4" height="4" fill="#c8c8c8"/><rect x="215" y="574" width="4" height="4" fill="#00e896"/><rect x="219" y="574" width="4" height="4" fill="#08704a"/><rect x="327" y="574" width="4" height="4" fill="#08704a"/><rect x="331" y="574" width="8" height="4" fill="#00e896"/><rect x="371" y="574" width="12" height="4" fill="#00e896"/><rect x="175" y="578" width="8" height="4" fill="#00e896"/><rect x="195" y="578" width="4" height="4" fill="#00e896"/><rect x="199" y="578" width="4" height="4" fill="#c8c8c8"/><rect x="331" y="578" width="8" height="4" fill="#08704a"/><rect x="351" y="578" width="4" height="4" fill="#08704a"/><rect x="355" y="578" width="4" height="4" fill="#00e896"/><rect x="359" y="578" width="4" height="4" fill="#08704a"/><rect x="367" y="578" width="4" height="4" fill="#08704a"/><rect x="371" y="578" width="8" height="4" fill="#00e896"/><rect x="379" y="578" width="8" height="4" fill="#c8c8c8"/><rect x="175" y="582" width="4" height="4" fill="#00e896"/><rect x="179" y="582" width="4" height="4" fill="#c8c8c8"/><rect x="199" y="582" width="4" height="4" fill="#00e896"/><rect x="347" y="582" width="4" height="4" fill="#08704a"/><rect x="351" y="582" width="4" height="4" fill="#00e896"/><rect x="355" y="582" width="4" height="4" fill="#c8c8c8"/><rect x="359" y="582" width="4" height="4" fill="#00e896"/><rect x="371" y="582" width="4" height="4" fill="#08704a"/><rect x="375" y="582" width="12" height="4" fill="#00e896"/><rect x="347" y="586" width="4" height="4" fill="#08704a"/><rect x="351" y="586" width="4" height="4" fill="#00e896"/><rect x="355" y="586" width="4" height="4" fill="#c8c8c8"/><rect x="359" y="586" width="4" height="4" fill="#00e896"/><rect x="371" y="586" width="16" height="4" fill="#08704a"/><rect x="351" y="590" width="12" height="4" fill="#08704a"/><rect x="343" y="594" width="4" height="4" fill="#08704a"/><rect x="355" y="594" width="8" height="4" fill="#08704a"/><rect x="387" y="594" width="4" height="4" fill="#08704a"/><rect x="339" y="598" width="4" height="4" fill="#00e896"/><rect x="343" y="598" width="8" height="4" fill="#dc9432"/><rect x="351" y="598" width="4" height="4" fill="#00e896"/><rect x="355" y="598" width="4" height="4" fill="#dc9432"/><rect x="359" y="598" width="4" height="4" fill="#c8c8c8"/><rect x="363" y="598" width="8" height="4" fill="#00e896"/><rect x="371" y="598" width="4" height="4" fill="#c8c8c8"/><rect x="383" y="598" width="4" height="4" fill="#08704a"/><rect x="387" y="598" width="8" height="4" fill="#00e896"/><rect x="343" y="602" width="8" height="4" fill="#eeb422"/><rect x="351" y="602" width="4" height="4" fill="#00e896"/><rect x="355" y="602" width="8" height="4" fill="#c8c8c8"/><rect x="363" y="602" width="4" height="4" fill="#08704a"/><rect x="367" y="602" width="4" height="4" fill="#00e896"/><rect x="371" y="602" width="4" height="4" fill="#c8c8c8"/><rect x="383" y="602" width="4" height="4" fill="#dc9432"/><rect x="387" y="602" width="8" height="4" fill="#00e896"/><rect x="343" y="606" width="8" height="4" fill="#c8c8c8"/><rect x="351" y="606" width="4" height="4" fill="#08704a"/><rect x="379" y="606" width="4" height="4" fill="#08704a"/><rect x="383" y="606" width="4" height="4" fill="#dc9432"/><rect x="387" y="606" width="4" height="4" fill="#00e896"/><rect x="347" y="610" width="12" height="4" fill="#00e896"/><rect x="383" y="610" width="8" height="4" fill="#00e896"/><rect x="347" y="614" width="12" height="4" fill="#08704a"/><rect x="383" y="614" width="8" height="4" fill="#08704a"/><rect x="383" y="618" width="16" height="4" fill="#08704a"/><rect x="163" y="622" width="8" height="4" fill="#08704a"/><rect x="371" y="622" width="4" height="4" fill="#08704a"/><rect x="375" y="622" width="16" height="4" fill="#00e896"/><rect x="391" y="622" width="4" height="4" fill="#08704a"/><rect x="163" y="626" width="8" height="4" fill="#08704a"/><rect x="179" y="626" width="4" height="4" fill="#08704a"/><rect x="367" y="626" width="4" height="4" fill="#08704a"/><rect x="371" y="626" width="4" height="4" fill="#00e896"/><rect x="375" y="626" width="8" height="4" fill="#c8c8c8"/><rect x="383" y="626" width="4" height="4" fill="#dc9432"/><rect x="387" y="626" width="4" height="4" fill="#c8c8c8"/><rect x="391" y="626" width="4" height="4" fill="#00e896"/><rect x="175" y="630" width="4" height="4" fill="#c8c8c8"/><rect x="179" y="630" width="4" height="4" fill="#eeb422"/><rect x="183" y="630" width="4" height="4" fill="#dc9432"/><rect x="187" y="630" width="4" height="4" fill="#08704a"/><rect x="363" y="630" width="4" height="4" fill="#08704a"/><rect x="367" y="630" width="4" height="4" fill="#00e896"/><rect x="371" y="630" width="4" height="4" fill="#c8c8c8"/><rect x="375" y="630" width="4" height="4" fill="#dc9432"/><rect x="379" y="630" width="4" height="4" fill="#00e896"/><rect x="175" y="634" width="4" height="4" fill="#08704a"/><rect x="179" y="634" width="4" height="4" fill="#dc9432"/><rect x="183" y="634" width="4" height="4" fill="#08704a"/><rect x="187" y="634" width="4" height="4" fill="#dc9432"/><rect x="191" y="634" width="8" height="4" fill="#00e896"/><rect x="347" y="634" width="4" height="4" fill="#00e896"/><rect x="351" y="634" width="4" height="4" fill="#08704a"/><rect x="363" y="634" width="4" height="4" fill="#08704a"/><rect x="367" y="634" width="4" height="4" fill="#c8c8c8"/><rect x="371" y="634" width="8" height="4" fill="#eeb422"/><rect x="379" y="634" width="4" height="4" fill="#dc9432"/><rect x="383" y="634" width="4" height="4" fill="#00e896"/><rect x="187" y="638" width="4" height="4" fill="#c8c8c8"/><rect x="191" y="638" width="8" height="4" fill="#00e896"/><rect x="347" y="638" width="4" height="4" fill="#dc9432"/><rect x="351" y="638" width="4" height="4" fill="#c8c8c8"/><rect x="359" y="638" width="4" height="4" fill="#08704a"/><rect x="363" y="638" width="8" height="4" fill="#00e896"/><rect x="371" y="638" width="4" height="4" fill="#c8c8c8"/><rect x="375" y="638" width="4" height="4" fill="#00e896"/><rect x="379" y="638" width="4" height="4" fill="#08704a"/><rect x="383" y="638" width="4" height="4" fill="#00e896"/><rect x="387" y="638" width="4" height="4" fill="#08704a"/><rect x="395" y="638" width="4" height="4" fill="#08704a"/><rect x="175" y="642" width="4" height="4" fill="#00e896"/><rect x="179" y="642" width="4" height="4" fill="#dc9432"/><rect x="183" y="642" width="8" height="4" fill="#00e896"/><rect x="191" y="642" width="4" height="4" fill="#dc9432"/><rect x="195" y="642" width="4" height="4" fill="#eeb422"/><rect x="347" y="642" width="4" height="4" fill="#eeb422"/><rect x="351" y="642" width="4" height="4" fill="#dc9432"/><rect x="363" y="642" width="4" height="4" fill="#08704a"/><rect x="367" y="642" width="16" height="4" fill="#00e896"/><rect x="383" y="642" width="4" height="4" fill="#eeb422"/><rect x="387" y="642" width="4" height="4" fill="#dc9432"/><rect x="395" y="642" width="4" height="4" fill="#08704a"/><rect x="175" y="646" width="4" height="4" fill="#dc9432"/><rect x="179" y="646" width="4" height="4" fill="#eeb422"/><rect x="183" y="646" width="4" height="4" fill="#c8c8c8"/><rect x="187" y="646" width="4" height="4" fill="#00e896"/><rect x="191" y="646" width="8" height="4" fill="#eeb422"/><rect x="347" y="646" width="4" height="4" fill="#c8c8c8"/><rect x="351" y="646" width="4" height="4" fill="#08704a"/><rect x="355" y="646" width="4" height="4" fill="#00e896"/><rect x="359" y="646" width="4" height="4" fill="#eeb422"/><rect x="363" y="646" width="4" height="4" fill="#c8c8c8"/><rect x="367" y="646" width="4" height="4" fill="#dc9432"/><rect x="371" y="646" width="4" height="4" fill="#c8c8c8"/><rect x="375" y="646" width="16" height="4" fill="#00e896"/><rect x="391" y="646" width="4" height="4" fill="#08704a"/><rect x="179" y="650" width="16" height="4" fill="#00e896"/><rect x="195" y="650" width="4" height="4" fill="#c8c8c8"/><rect x="343" y="650" width="4" height="4" fill="#00e896"/><rect x="359" y="650" width="4" height="4" fill="#c8c8c8"/><rect x="363" y="650" width="4" height="4" fill="#00e896"/><rect x="367" y="650" width="4" height="4" fill="#c8c8c8"/><rect x="371" y="650" width="4" height="4" fill="#dc9432"/><rect x="375" y="650" width="4" height="4" fill="#eeb422"/><rect x="379" y="650" width="4" height="4" fill="#08704a"/><rect x="383" y="650" width="8" height="4" fill="#00e896"/><rect x="151" y="654" width="8" height="4" fill="#08704a"/><rect x="179" y="654" width="4" height="4" fill="#08704a"/><rect x="187" y="654" width="8" height="4" fill="#00e896"/><rect x="199" y="654" width="4" height="4" fill="#08704a"/><rect x="343" y="654" width="8" height="4" fill="#00e896"/><rect x="355" y="654" width="8" height="4" fill="#c8c8c8"/><rect x="371" y="654" width="4" height="4" fill="#00e896"/><rect x="379" y="654" width="4" height="4" fill="#00e896"/><rect x="391" y="654" width="4" height="4" fill="#00e896"/><rect x="151" y="658" width="8" height="4" fill="#00e896"/><rect x="175" y="658" width="4" height="4" fill="#08704a"/><rect x="179" y="658" width="4" height="4" fill="#00e896"/><rect x="183" y="658" width="4" height="4" fill="#08704a"/><rect x="187" y="658" width="4" height="4" fill="#00e896"/><rect x="199" y="658" width="4" height="4" fill="#08704a"/><rect x="347" y="658" width="8" height="4" fill="#08704a"/><rect x="355" y="658" width="8" height="4" fill="#eeb422"/><rect x="363" y="658" width="8" height="4" fill="#00e896"/><rect x="375" y="658" width="4" height="4" fill="#00e896"/><rect x="383" y="658" width="12" height="4" fill="#00e896"/><rect x="151" y="662" width="4" height="4" fill="#dc9432"/><rect x="155" y="662" width="4" height="4" fill="#c8c8c8"/><rect x="171" y="662" width="4" height="4" fill="#08704a"/><rect x="175" y="662" width="4" height="4" fill="#00e896"/><rect x="179" y="662" width="4" height="4" fill="#dc9432"/><rect x="183" y="662" width="4" height="4" fill="#08704a"/><rect x="191" y="662" width="4" height="4" fill="#08704a"/><rect x="195" y="662" width="4" height="4" fill="#00e896"/><rect x="199" y="662" width="4" height="4" fill="#08704a"/><rect x="339" y="662" width="4" height="4" fill="#dc9432"/><rect x="351" y="662" width="4" height="4" fill="#08704a"/><rect x="355" y="662" width="12" height="4" fill="#dc9432"/><rect x="367" y="662" width="4" height="4" fill="#00e896"/><rect x="383" y="662" width="4" height="4" fill="#00e896"/><rect x="387" y="662" width="8" height="4" fill="#dc9432"/><rect x="155" y="666" width="4" height="4" fill="#00e896"/><rect x="171" y="666" width="4" height="4" fill="#08704a"/><rect x="175" y="666" width="4" height="4" fill="#c8c8c8"/><rect x="179" y="666" width="4" height="4" fill="#dc9432"/><rect x="183" y="666" width="4" height="4" fill="#00e896"/><rect x="191" y="666" width="4" height="4" fill="#c8c8c8"/><rect x="195" y="666" width="8" height="4" fill="#dc9432"/><rect x="203" y="666" width="4" height="4" fill="#c8c8c8"/><rect x="339" y="666" width="4" height="4" fill="#dc9432"/><rect x="351" y="666" width="4" height="4" fill="#c8c8c8"/><rect x="355" y="666" width="12" height="4" fill="#eeb422"/><rect x="367" y="666" width="4" height="4" fill="#c8c8c8"/><rect x="383" y="666" width="4" height="4" fill="#c8c8c8"/><rect x="387" y="666" width="4" height="4" fill="#dc9432"/><rect x="179" y="670" width="4" height="4" fill="#00e896"/><rect x="191" y="670" width="4" height="4" fill="#00e896"/><rect x="195" y="670" width="4" height="4" fill="#c8c8c8"/><rect x="199" y="670" width="4" height="4" fill="#dc9432"/><rect x="203" y="670" width="4" height="4" fill="#c8c8c8"/><rect x="207" y="670" width="4" height="4" fill="#00e896"/><rect x="339" y="670" width="4" height="4" fill="#00e896"/><rect x="351" y="670" width="4" height="4" fill="#c8c8c8"/><rect x="355" y="670" width="4" height="4" fill="#dc9432"/><rect x="359" y="670" width="4" height="4" fill="#eeb422"/><rect x="363" y="670" width="4" height="4" fill="#dc9432"/><rect x="367" y="670" width="4" height="4" fill="#c8c8c8"/><rect x="383" y="670" width="4" height="4" fill="#c8c8c8"/><rect x="387" y="670" width="4" height="4" fill="#dc9432"/><rect x="191" y="674" width="4" height="4" fill="#08704a"/><rect x="195" y="674" width="4" height="4" fill="#00e896"/><rect x="199" y="674" width="4" height="4" fill="#c8c8c8"/><rect x="203" y="674" width="8" height="4" fill="#00e896"/><rect x="335" y="674" width="4" height="4" fill="#c8c8c8"/><rect x="339" y="674" width="4" height="4" fill="#00e896"/><rect x="351" y="674" width="4" height="4" fill="#00e896"/><rect x="355" y="674" width="4" height="4" fill="#c8c8c8"/><rect x="359" y="674" width="4" height="4" fill="#dc9432"/><rect x="363" y="674" width="4" height="4" fill="#c8c8c8"/><rect x="367" y="674" width="4" height="4" fill="#00e896"/><rect x="375" y="674" width="12" height="4" fill="#08704a"/><rect x="387" y="674" width="4" height="4" fill="#00e896"/><rect x="199" y="678" width="4" height="4" fill="#08704a"/><rect x="203" y="678" width="12" height="4" fill="#00e896"/><rect x="331" y="678" width="4" height="4" fill="#00e896"/><rect x="355" y="678" width="8" height="4" fill="#08704a"/><rect x="375" y="678" width="4" height="4" fill="#08704a"/><rect x="187" y="682" width="4" height="4" fill="#08704a"/><rect x="191" y="682" width="4" height="4" fill="#00e896"/><rect x="195" y="682" width="4" height="4" fill="#08704a"/><rect x="203" y="682" width="12" height="4" fill="#08704a"/><rect x="215" y="682" width="4" height="4" fill="#00e896"/><rect x="327" y="682" width="4" height="4" fill="#08704a"/><rect x="175" y="686" width="8" height="4" fill="#08704a"/><rect x="183" y="686" width="8" height="4" fill="#00e896"/><rect x="191" y="686" width="4" height="4" fill="#eeb422"/><rect x="195" y="686" width="4" height="4" fill="#dc9432"/><rect x="199" y="686" width="4" height="4" fill="#08704a"/><rect x="211" y="686" width="4" height="4" fill="#00e896"/><rect x="339" y="686" width="4" height="4" fill="#08704a"/><rect x="343" y="686" width="4" height="4" fill="#00e896"/><rect x="347" y="686" width="4" height="4" fill="#08704a"/><rect x="171" y="690" width="4" height="4" fill="#08704a"/><rect x="183" y="690" width="4" height="4" fill="#08704a"/><rect x="187" y="690" width="4" height="4" fill="#00e896"/><rect x="191" y="690" width="4" height="4" fill="#eeb422"/><rect x="195" y="690" width="4" height="4" fill="#dc9432"/><rect x="199" y="690" width="4" height="4" fill="#c8c8c8"/><rect x="211" y="690" width="8" height="4" fill="#00e896"/><rect x="343" y="690" width="4" height="4" fill="#00e896"/><rect x="347" y="690" width="4" height="4" fill="#08704a"/><rect x="167" y="694" width="4" height="4" fill="#08704a"/><rect x="175" y="694" width="4" height="4" fill="#08704a"/><rect x="179" y="694" width="12" height="4" fill="#00e896"/><rect x="191" y="694" width="8" height="4" fill="#eeb422"/><rect x="199" y="694" width="4" height="4" fill="#dc9432"/><rect x="203" y="694" width="4" height="4" fill="#08704a"/><rect x="219" y="694" width="8" height="4" fill="#08704a"/><rect x="231" y="694" width="4" height="4" fill="#08704a"/><rect x="343" y="694" width="4" height="4" fill="#08704a"/><rect x="167" y="698" width="8" height="4" fill="#08704a"/><rect x="175" y="698" width="8" height="4" fill="#00e896"/><rect x="183" y="698" width="4" height="4" fill="#c8c8c8"/><rect x="187" y="698" width="4" height="4" fill="#00e896"/><rect x="191" y="698" width="4" height="4" fill="#dc9432"/><rect x="195" y="698" width="4" height="4" fill="#eeb422"/><rect x="199" y="698" width="4" height="4" fill="#c8c8c8"/><rect x="203" y="698" width="4" height="4" fill="#08704a"/><rect x="211" y="698" width="8" height="4" fill="#08704a"/><rect x="179" y="702" width="12" height="4" fill="#00e896"/><rect x="191" y="702" width="8" height="4" fill="#c8c8c8"/><rect x="199" y="702" width="4" height="4" fill="#08704a"/><rect x="211" y="702" width="12" height="4" fill="#08704a"/><rect x="319" y="702" width="4" height="4" fill="#08704a"/><rect x="175" y="706" width="8" height="4" fill="#00e896"/><rect x="187" y="706" width="4" height="4" fill="#00e896"/><rect x="195" y="706" width="4" height="4" fill="#00e896"/><rect x="199" y="706" width="8" height="4" fill="#08704a"/><rect x="231" y="706" width="12" height="4" fill="#08704a"/><rect x="319" y="706" width="4" height="4" fill="#00e896"/><rect x="179" y="710" width="4" height="4" fill="#00e896"/><rect x="183" y="710" width="4" height="4" fill="#08704a"/><rect x="187" y="710" width="8" height="4" fill="#00e896"/><rect x="195" y="710" width="4" height="4" fill="#08704a"/><rect x="203" y="710" width="4" height="4" fill="#08704a"/><rect x="227" y="710" width="4" height="4" fill="#08704a"/><rect x="231" y="710" width="4" height="4" fill="#00e896"/><rect x="235" y="710" width="4" height="4" fill="#c8c8c8"/><rect x="239" y="710" width="4" height="4" fill="#00e896"/><rect x="243" y="710" width="4" height="4" fill="#08704a"/><rect x="179" y="714" width="4" height="4" fill="#c8c8c8"/><rect x="183" y="714" width="4" height="4" fill="#eeb422"/><rect x="187" y="714" width="4" height="4" fill="#dc9432"/><rect x="195" y="714" width="4" height="4" fill="#08704a"/><rect x="227" y="714" width="4" height="4" fill="#00e896"/><rect x="231" y="714" width="4" height="4" fill="#c8c8c8"/><rect x="235" y="714" width="4" height="4" fill="#dc9432"/><rect x="239" y="714" width="4" height="4" fill="#c8c8c8"/><rect x="243" y="714" width="4" height="4" fill="#08704a"/><rect x="183" y="718" width="4" height="4" fill="#eeb422"/><rect x="187" y="718" width="4" height="4" fill="#dc9432"/><rect x="227" y="718" width="4" height="4" fill="#08704a"/><rect x="231" y="718" width="4" height="4" fill="#00e896"/><rect x="235" y="718" width="4" height="4" fill="#dc9432"/><rect x="239" y="718" width="4" height="4" fill="#c8c8c8"/><rect x="243" y="718" width="4" height="4" fill="#08704a"/><rect x="187" y="722" width="4" height="4" fill="#08704a"/><rect x="191" y="722" width="4" height="4" fill="#00e896"/><rect x="195" y="722" width="4" height="4" fill="#c8c8c8"/><rect x="199" y="722" width="8" height="4" fill="#00e896"/><rect x="207" y="722" width="4" height="4" fill="#08704a"/><rect x="227" y="722" width="4" height="4" fill="#08704a"/><rect x="231" y="722" width="12" height="4" fill="#00e896"/><rect x="243" y="722" width="4" height="4" fill="#08704a"/><rect x="195" y="726" width="4" height="4" fill="#eeb422"/><rect x="199" y="726" width="4" height="4" fill="#dc9432"/><rect x="203" y="726" width="12" height="4" fill="#00e896"/><rect x="235" y="726" width="4" height="4" fill="#08704a"/><rect x="199" y="730" width="4" height="4" fill="#eeb422"/><rect x="203" y="730" width="8" height="4" fill="#00e896"/><rect x="211" y="730" width="8" height="4" fill="#08704a"/><rect x="203" y="734" width="12" height="4" fill="#08704a"/><rect x="230" y="488" width="5" height="5" fill="#00e896"/><rect x="230" y="493" width="5" height="5" fill="#00e896"/><rect x="385" y="513" width="10" height="5" fill="#08704a"/><rect x="370" y="518" width="30" height="5" fill="#08704a"/><rect x="375" y="523" width="20" height="5" fill="#08704a"/><rect x="370" y="528" width="20" height="5" fill="#08704a"/><rect x="390" y="528" width="5" height="5" fill="#00e896"/><rect x="395" y="528" width="10" height="5" fill="#08704a"/><rect x="370" y="533" width="5" height="5" fill="#08704a"/><rect x="375" y="533" width="5" height="5" fill="#00e896"/><rect x="380" y="533" width="25" height="5" fill="#08704a"/><rect x="375" y="538" width="25" height="5" fill="#08704a"/><rect x="365" y="543" width="10" height="5" fill="#08704a"/><rect x="375" y="543" width="5" height="5" fill="#c8c8c8"/><rect x="380" y="543" width="10" height="5" fill="#00e896"/><rect x="390" y="543" width="5" height="5" fill="#08704a"/><rect x="370" y="548" width="15" height="5" fill="#00e896"/><rect x="385" y="548" width="15" height="5" fill="#08704a"/><rect x="125" y="553" width="5" height="5" fill="#08704a"/><rect x="375" y="553" width="10" height="5" fill="#08704a"/><rect x="375" y="558" width="10" height="5" fill="#08704a"/><rect x="380" y="563" width="5" height="5" fill="#08704a"/><rect x="385" y="568" width="5" height="5" fill="#00e896"/><rect x="385" y="573" width="5" height="5" fill="#00e896"/><rect x="415" y="573" width="5" height="5" fill="#00e896"/><rect x="420" y="573" width="5" height="5" fill="#08704a"/><rect x="145" y="578" width="5" height="5" fill="#c8c8c8"/><rect x="385" y="578" width="5" height="5" fill="#08704a"/><rect x="410" y="578" width="5" height="5" fill="#08704a"/><rect x="415" y="578" width="10" height="5" fill="#c8c8c8"/><rect x="430" y="578" width="5" height="5" fill="#08704a"/><rect x="140" y="583" width="5" height="5" fill="#08704a"/><rect x="145" y="583" width="5" height="5" fill="#c8c8c8"/><rect x="410" y="583" width="5" height="5" fill="#08704a"/><rect x="415" y="583" width="10" height="5" fill="#c8c8c8"/><rect x="425" y="583" width="10" height="5" fill="#08704a"/><rect x="130" y="588" width="5" height="5" fill="#08704a"/><rect x="135" y="588" width="5" height="5" fill="#00e896"/><rect x="405" y="588" width="10" height="5" fill="#08704a"/><rect x="415" y="588" width="10" height="5" fill="#00e896"/><rect x="425" y="588" width="10" height="5" fill="#08704a"/><rect x="125" y="593" width="5" height="5" fill="#08704a"/><rect x="135" y="593" width="5" height="5" fill="#08704a"/><rect x="410" y="593" width="20" height="5" fill="#08704a"/><rect x="120" y="598" width="5" height="5" fill="#08704a"/><rect x="125" y="598" width="5" height="5" fill="#c8c8c8"/><rect x="130" y="598" width="5" height="5" fill="#08704a"/><rect x="395" y="598" width="10" height="5" fill="#08704a"/><rect x="415" y="598" width="15" height="5" fill="#08704a"/><rect x="120" y="603" width="5" height="5" fill="#08704a"/><rect x="125" y="603" width="5" height="5" fill="#00e896"/><rect x="130" y="603" width="5" height="5" fill="#08704a"/><rect x="400" y="603" width="5" height="5" fill="#08704a"/><rect x="420" y="603" width="10" height="5" fill="#08704a"/><rect x="120" y="608" width="10" height="5" fill="#08704a"/><rect x="425" y="608" width="10" height="5" fill="#08704a"/><rect x="395" y="613" width="5" height="5" fill="#00e896"/><rect x="400" y="613" width="5" height="5" fill="#08704a"/><rect x="425" y="613" width="10" height="5" fill="#08704a"/><rect x="395" y="618" width="10" height="5" fill="#08704a"/><rect x="410" y="618" width="10" height="5" fill="#08704a"/><rect x="425" y="618" width="10" height="5" fill="#08704a"/><rect x="410" y="623" width="10" height="5" fill="#08704a"/><rect x="425" y="623" width="10" height="5" fill="#08704a"/><rect x="410" y="628" width="10" height="5" fill="#08704a"/><rect x="425" y="628" width="10" height="5" fill="#08704a"/><rect x="130" y="633" width="10" height="5" fill="#08704a"/><rect x="410" y="633" width="5" height="5" fill="#08704a"/><rect x="130" y="638" width="5" height="5" fill="#08704a"/><rect x="395" y="638" width="5" height="5" fill="#08704a"/><rect x="395" y="643" width="5" height="5" fill="#08704a"/><rect x="395" y="648" width="5" height="5" fill="#08704a"/><rect x="140" y="653" width="10" height="5" fill="#08704a"/><rect x="395" y="653" width="5" height="5" fill="#eeb422"/><rect x="400" y="653" width="5" height="5" fill="#08704a"/><rect x="410" y="653" width="10" height="5" fill="#08704a"/><rect x="135" y="658" width="5" height="5" fill="#08704a"/><rect x="140" y="658" width="10" height="5" fill="#00e896"/><rect x="395" y="658" width="5" height="5" fill="#dc9432"/><rect x="400" y="658" width="5" height="5" fill="#08704a"/><rect x="410" y="658" width="10" height="5" fill="#00e896"/><rect x="135" y="663" width="15" height="5" fill="#08704a"/><rect x="395" y="663" width="5" height="5" fill="#c8c8c8"/><rect x="410" y="663" width="10" height="5" fill="#00e896"/><rect x="140" y="668" width="15" height="5" fill="#08704a"/><rect x="390" y="668" width="5" height="5" fill="#dc9432"/><rect x="395" y="668" width="5" height="5" fill="#c8c8c8"/><rect x="390" y="673" width="5" height="5" fill="#00e896"/><rect x="395" y="673" width="30" height="5" fill="#08704a"/><rect x="400" y="678" width="5" height="5" fill="#08704a"/><rect x="405" y="678" width="20" height="5" fill="#00e896"/><rect x="425" y="678" width="5" height="5" fill="#08704a"/><rect x="400" y="683" width="5" height="5" fill="#08704a"/><rect x="405" y="683" width="15" height="5" fill="#00e896"/><rect x="420" y="683" width="5" height="5" fill="#dc9432"/><rect x="425" y="683" width="5" height="5" fill="#08704a"/><rect x="400" y="688" width="20" height="5" fill="#08704a"/><rect x="420" y="688" width="5" height="5" fill="#00e896"/><rect x="425" y="688" width="5" height="5" fill="#08704a"/><rect x="420" y="693" width="5" height="5" fill="#08704a"/><rect x="165" y="698" width="5" height="5" fill="#c8c8c8"/><rect x="165" y="703" width="5" height="5" fill="#c8c8c8"/><rect x="135" y="708" width="5" height="5" fill="#08704a"/><rect x="140" y="708" width="15" height="5" fill="#00e896"/><rect x="155" y="708" width="5" height="5" fill="#08704a"/><rect x="395" y="708" width="5" height="5" fill="#08704a"/><rect x="130" y="713" width="5" height="5" fill="#08704a"/><rect x="135" y="713" width="5" height="5" fill="#00e896"/><rect x="140" y="713" width="15" height="5" fill="#c8c8c8"/><rect x="155" y="713" width="5" height="5" fill="#00e896"/><rect x="170" y="713" width="10" height="5" fill="#08704a"/><rect x="395" y="713" width="5" height="5" fill="#dc9432"/><rect x="400" y="713" width="5" height="5" fill="#00e896"/><rect x="130" y="718" width="5" height="5" fill="#08704a"/><rect x="135" y="718" width="5" height="5" fill="#dc9432"/><rect x="140" y="718" width="5" height="5" fill="#c8c8c8"/><rect x="145" y="718" width="10" height="5" fill="#dc9432"/><rect x="155" y="718" width="5" height="5" fill="#c8c8c8"/><rect x="160" y="718" width="5" height="5" fill="#08704a"/><rect x="175" y="718" width="5" height="5" fill="#08704a"/><rect x="180" y="718" width="5" height="5" fill="#dc9432"/><rect x="395" y="718" width="5" height="5" fill="#c8c8c8"/><rect x="400" y="718" width="5" height="5" fill="#08704a"/><rect x="130" y="723" width="5" height="5" fill="#08704a"/><rect x="135" y="723" width="5" height="5" fill="#eeb422"/><rect x="140" y="723" width="5" height="5" fill="#00e896"/><rect x="145" y="723" width="10" height="5" fill="#c8c8c8"/><rect x="155" y="723" width="5" height="5" fill="#08704a"/><rect x="395" y="723" width="10" height="5" fill="#08704a"/><rect x="135" y="728" width="5" height="5" fill="#08704a"/><rect x="190" y="728" width="5" height="5" fill="#dc9432"/><rect x="170" y="733" width="5" height="5" fill="#08704a"/><rect x="180" y="733" width="5" height="5" fill="#08704a"/><rect x="190" y="733" width="5" height="5" fill="#00e896"/><rect x="195" y="733" width="5" height="5" fill="#c8c8c8"/><rect x="200" y="733" width="5" height="5" fill="#00e896"/><rect x="155" y="738" width="15" height="5" fill="#08704a"/><rect x="170" y="738" width="10" height="5" fill="#c8c8c8"/><rect x="180" y="738" width="10" height="5" fill="#08704a"/><rect x="155" y="743" width="10" height="5" fill="#08704a"/><rect x="165" y="743" width="5" height="5" fill="#00e896"/><rect x="170" y="743" width="10" height="5" fill="#c8c8c8"/><rect x="180" y="743" width="5" height="5" fill="#00e896"/><rect x="185" y="743" width="10" height="5" fill="#08704a"/><rect x="170" y="748" width="5" height="5" fill="#08704a"/><rect x="180" y="748" width="5" height="5" fill="#08704a"/><rect x="285" y="758" width="15" height="5" fill="#08704a"/><rect x="285" y="763" width="5" height="5" fill="#08704a"/><rect x="290" y="763" width="5" height="5" fill="#00e896"/><rect x="295" y="763" width="10" height="5" fill="#08704a"/><rect x="295" y="625" width="4" height="4" fill="#c8c8c8"/><rect x="295" y="631" width="4" height="4" fill="#08704a"/><rect x="295" y="631" width="4" height="4" fill="#00e896"/><rect x="298" y="622" width="4" height="4" fill="#c8c8c8"/><rect x="298" y="631" width="4" height="4" fill="#00e896"/><rect x="298" y="628" width="4" height="4" fill="#c8c8c8"/><rect x="301" y="622" width="4" height="4" fill="#c8c8c8"/><rect x="301" y="631" width="4" height="4" fill="#08704a"/><rect x="301" y="628" width="4" height="4" fill="#00e896"/><rect x="304" y="622" width="4" height="4" fill="#c8c8c8"/><rect x="304" y="628" width="4" height="4" fill="#08704a"/><rect x="304" y="628" width="4" height="4" fill="#00e896"/><rect x="304" y="622" width="4" height="4" fill="#c8c8c8"/><rect x="310" y="628" width="4" height="4" fill="#00e896"/><rect x="307" y="625" width="4" height="4" fill="#00e896"/><rect x="307" y="619" width="4" height="4" fill="#c8c8c8"/><rect x="313" y="625" width="4" height="4" fill="#08704a"/><rect x="310" y="625" width="4" height="4" fill="#c8c8c8"/><rect x="310" y="616" width="4" height="4" fill="#c8c8c8"/><rect x="316" y="625" width="4" height="4" fill="#08704a"/><rect x="313" y="622" width="4" height="4" fill="#00e896"/><rect x="313" y="616" width="4" height="4" fill="#c8c8c8"/><rect x="319" y="622" width="4" height="4" fill="#00e896"/><rect x="316" y="622" width="4" height="4" fill="#c8c8c8"/><rect x="316" y="613" width="4" height="4" fill="#c8c8c8"/><rect x="322" y="622" width="4" height="4" fill="#00e896"/><rect x="319" y="619" width="4" height="4" fill="#00e896"/><rect x="319" y="613" width="4" height="4" fill="#c8c8c8"/><rect x="325" y="619" width="4" height="4" fill="#00e896"/><rect x="322" y="616" width="4" height="4" fill="#00e896"/><rect x="322" y="610" width="4" height="4" fill="#c8c8c8"/><rect x="328" y="616" width="4" height="4" fill="#08704a"/><rect x="325" y="616" width="4" height="4" fill="#c8c8c8"/><rect x="325" y="607" width="4" height="4" fill="#c8c8c8"/><rect x="331" y="616" width="4" height="4" fill="#08704a"/><rect x="328" y="613" width="4" height="4" fill="#c8c8c8"/><rect x="328" y="607" width="4" height="4" fill="#c8c8c8"/><rect x="334" y="613" width="4" height="4" fill="#08704a"/><rect x="331" y="613" width="4" height="4" fill="#c8c8c8"/><rect x="331" y="604" width="4" height="4" fill="#c8c8c8"/><rect x="334" y="610" width="4" height="4" fill="#08704a"/><rect x="334" y="610" width="4" height="4" fill="#c8c8c8"/><rect x="334" y="601" width="4" height="4" fill="#c8c8c8"/><rect x="337" y="610" width="4" height="4" fill="#08704a"/><rect x="337" y="607" width="4" height="4" fill="#00e896"/><rect x="337" y="601" width="4" height="4" fill="#c8c8c8"/><rect x="340" y="607" width="4" height="4" fill="#08704a"/><rect x="340" y="607" width="4" height="4" fill="#00e896"/><rect x="340" y="598" width="4" height="4" fill="#c8c8c8"/><rect x="343" y="607" width="4" height="4" fill="#08704a"/><rect x="343" y="604" width="4" height="4" fill="#00e896"/><rect x="340" y="598" width="4" height="4" fill="#c8c8c8"/><rect x="346" y="604" width="4" height="4" fill="#08704a"/><rect x="343" y="604" width="4" height="4" fill="#c8c8c8"/><rect x="346" y="595" width="4" height="4" fill="#c8c8c8"/><rect x="349" y="604" width="4" height="4" fill="#00e896"/><rect x="346" y="601" width="4" height="4" fill="#00e896"/><rect x="349" y="595" width="4" height="4" fill="#c8c8c8"/><rect x="352" y="604" width="4" height="4" fill="#00e896"/><rect x="349" y="601" width="4" height="4" fill="#00e896"/><rect x="352" y="595" width="4" height="4" fill="#c8c8c8"/><rect x="355" y="601" width="4" height="4" fill="#08704a"/><rect x="355" y="601" width="4" height="4" fill="#c8c8c8"/><rect x="355" y="592" width="4" height="4" fill="#c8c8c8"/><rect x="358" y="601" width="4" height="4" fill="#08704a"/><rect x="358" y="598" width="4" height="4" fill="#c8c8c8"/><rect x="358" y="592" width="4" height="4" fill="#c8c8c8"/><rect x="361" y="598" width="4" height="4" fill="#00e896"/><rect x="361" y="598" width="4" height="4" fill="#c8c8c8"/><rect x="295" y="628" width="4" height="4" fill="#eeb422"/><rect x="298" y="628" width="4" height="4" fill="#dc9432"/><rect x="301" y="625" width="4" height="4" fill="#eeb422"/><rect x="304" y="625" width="4" height="4" fill="#eeb422"/><rect x="307" y="625" width="4" height="4" fill="#dc9432"/><rect x="310" y="622" width="4" height="4" fill="#dc9432"/><rect x="313" y="622" width="4" height="4" fill="#eeb422"/><rect x="316" y="619" width="4" height="4" fill="#dc9432"/><rect x="319" y="616" width="4" height="4" fill="#eeb422"/><rect x="322" y="616" width="4" height="4" fill="#dc9432"/><rect x="325" y="613" width="4" height="4" fill="#dc9432"/><rect x="328" y="610" width="4" height="4" fill="#dc9432"/><rect x="331" y="610" width="4" height="4" fill="#eeb422"/><rect x="334" y="607" width="4" height="4" fill="#dc9432"/><rect x="334" y="607" width="4" height="4" fill="#dc9432"/><rect x="337" y="604" width="4" height="4" fill="#dc9432"/><rect x="340" y="604" width="4" height="4" fill="#eeb422"/><rect x="343" y="601" width="4" height="4" fill="#eeb422"/><rect x="346" y="601" width="4" height="4" fill="#dc9432"/><rect x="349" y="598" width="4" height="4" fill="#dc9432"/><rect x="352" y="598" width="4" height="4" fill="#dc9432"/><rect x="250" y="593" width="2" height="2" fill="#0870e0"/><rect x="257" y="597" width="3" height="2" fill="#0870e0"/><rect x="256" y="589" width="4" height="3" fill="#10b0e6"/><rect x="252" y="592" width="4" height="2" fill="#10b0e6"/><rect x="254" y="590" width="3" height="2" fill="#0870e0"/><rect x="247" y="593" width="4" height="2" fill="#10b0e6"/><rect x="252" y="594" width="2" height="2" fill="#0870e0"/><rect x="256" y="589" width="3" height="3" fill="#0870e0"/><rect x="254" y="592" width="2" height="3" fill="#0870e0"/><rect x="254" y="598" width="2" height="2" fill="#0870e0"/><rect x="254" y="596" width="3" height="2" fill="#10b0e6"/><rect x="253" y="594" width="3" height="2" fill="#10b0e6"/><rect x="251" y="594" width="2" height="2" fill="#0870e0"/><rect x="249" y="592" width="3" height="2" fill="#10b0e6"/><rect x="260" y="593" width="2" height="2" fill="#10b0e6"/><rect x="257" y="591" width="3" height="2" fill="#10b0e6"/><rect x="247" y="593" width="2" height="2" fill="#10b0e6"/><rect x="254" y="598" width="2" height="2" fill="#0870e0"/><rect x="253" y="589" width="2" height="2" fill="#10b0e6"/><rect x="251" y="595" width="2" height="2" fill="#0870e0"/><rect x="255" y="590" width="2" height="3" fill="#10b0e6"/><rect x="252" y="591" width="2" height="3" fill="#10b0e6"/><rect x="254" y="591" width="2" height="2" fill="#0870e0"/><rect x="249" y="596" width="3" height="2" fill="#10b0e6"/><rect x="253" y="593" width="3" height="2" fill="#0870e0"/><rect x="255" y="591" width="4" height="2" fill="#0870e0"/><rect x="251" y="595" width="2" height="3" fill="#0870e0"/><rect x="249" y="596" width="2" height="3" fill="#10b0e6"/><rect x="255" y="594" width="3" height="2" fill="#10b0e6"/><rect x="257" y="597" width="4" height="3" fill="#0870e0"/><rect x="253" y="598" width="3" height="2" fill="#10b0e6"/><rect x="248" y="596" width="2" height="2" fill="#0870e0"/><rect x="257" y="595" width="2" height="3" fill="#0870e0"/><rect x="256" y="595" width="2" height="3" fill="#10b0e6"/><rect x="253" y="593" width="2" height="3" fill="#10b0e6"/><rect x="257" y="591" width="2" height="2" fill="#10b0e6"/><rect x="253" y="591" width="3" height="3" fill="#10b0e6"/><rect x="256" y="592" width="2" height="3" fill="#10b0e6"/><rect x="252" y="595" width="2" height="3" fill="#10b0e6"/><rect x="257" y="592" width="3" height="2" fill="#0870e0"/><rect x="255" y="592" width="2" height="3" fill="#10b0e6"/><rect x="251" y="591" width="2" height="2" fill="#10b0e6"/><rect x="319" y="596" width="3" height="2" fill="#0870e0"/><rect x="321" y="589" width="3" height="3" fill="#10b0e6"/><rect x="323" y="581" width="2" height="3" fill="#10b0e6"/><rect x="325" y="583" width="4" height="2" fill="#0870e0"/><rect x="327" y="579" width="2" height="2" fill="#10b0e6"/><rect x="319" y="589" width="3" height="3" fill="#0870e0"/><rect x="330" y="581" width="4" height="3" fill="#10b0e6"/><rect x="325" y="583" width="2" height="3" fill="#0870e0"/><rect x="325" y="579" width="4" height="2" fill="#0870e0"/><rect x="320" y="580" width="3" height="3" fill="#0870e0"/><rect x="322" y="579" width="3" height="3" fill="#0870e0"/><rect x="319" y="587" width="4" height="2" fill="#0870e0"/><rect x="321" y="582" width="4" height="3" fill="#0870e0"/><rect x="329" y="582" width="4" height="2" fill="#10b0e6"/><rect x="322" y="587" width="2" height="2" fill="#0870e0"/><rect x="319" y="583" width="2" height="2" fill="#10b0e6"/><rect x="321" y="589" width="2" height="2" fill="#0870e0"/><rect x="329" y="591" width="4" height="2" fill="#10b0e6"/><rect x="327" y="578" width="2" height="2" fill="#10b0e6"/><rect x="325" y="585" width="3" height="2" fill="#0870e0"/><rect x="320" y="581" width="2" height="3" fill="#0870e0"/><rect x="331" y="586" width="3" height="2" fill="#10b0e6"/><rect x="322" y="592" width="3" height="3" fill="#0870e0"/><rect x="327" y="585" width="2" height="2" fill="#0870e0"/><rect x="324" y="578" width="3" height="3" fill="#10b0e6"/><rect x="320" y="594" width="3" height="2" fill="#10b0e6"/><rect x="324" y="585" width="2" height="2" fill="#10b0e6"/><rect x="318" y="583" width="4" height="2" fill="#10b0e6"/><rect x="329" y="579" width="3" height="2" fill="#0870e0"/><rect x="315" y="590" width="2" height="2" fill="#10b0e6"/><rect x="331" y="592" width="3" height="2" fill="#10b0e6"/><rect x="319" y="592" width="3" height="2" fill="#0870e0"/><rect x="313" y="591" width="2" height="2" fill="#0870e0"/><rect x="320" y="582" width="4" height="3" fill="#0870e0"/><rect x="332" y="589" width="3" height="2" fill="#10b0e6"/><rect x="326" y="592" width="3" height="2" fill="#10b0e6"/><rect x="320" y="592" width="3" height="3" fill="#10b0e6"/><rect x="317" y="593" width="2" height="2" fill="#0870e0"/><rect x="323" y="586" width="2" height="3" fill="#10b0e6"/><rect x="329" y="583" width="2" height="3" fill="#10b0e6"/><rect x="316" y="588" width="2" height="3" fill="#0870e0"/><rect x="325" y="578" width="3" height="3" fill="#0870e0"/><rect x="316" y="585" width="2" height="3" fill="#10b0e6"/><rect x="323" y="598" width="3" height="3" fill="#0870e0"/><rect x="324" y="591" width="3" height="2" fill="#10b0e6"/><rect x="316" y="586" width="3" height="2" fill="#0870e0"/><rect x="328" y="583" width="3" height="2" fill="#10b0e6"/><rect x="328" y="581" width="2" height="2" fill="#10b0e6"/><rect x="333" y="590" width="4" height="2" fill="#0870e0"/><rect x="319" y="603" width="4" height="2" fill="#0870e0"/><rect x="309" y="606" width="2" height="2" fill="#10b0e6"/><rect x="320" y="607" width="2" height="2" fill="#10b0e6"/><rect x="304" y="610" width="2" height="2" fill="#0870e0"/><rect x="310" y="595" width="2" height="3" fill="#10b0e6"/><rect x="322" y="607" width="2" height="2" fill="#0870e0"/><rect x="305" y="603" width="3" height="3" fill="#0870e0"/><rect x="308" y="597" width="3" height="2" fill="#0870e0"/><rect x="316" y="601" width="3" height="3" fill="#0870e0"/><rect x="315" y="597" width="2" height="2" fill="#10b0e6"/><rect x="317" y="610" width="3" height="3" fill="#10b0e6"/><rect x="307" y="604" width="3" height="2" fill="#10b0e6"/><rect x="306" y="609" width="3" height="2" fill="#0870e0"/><rect x="314" y="610" width="4" height="3" fill="#0870e0"/><rect x="308" y="599" width="4" height="3" fill="#10b0e6"/><rect x="313" y="593" width="2" height="2" fill="#10b0e6"/><rect x="316" y="602" width="2" height="3" fill="#0870e0"/><rect x="313" y="602" width="2" height="2" fill="#10b0e6"/><rect x="318" y="601" width="3" height="3" fill="#10b0e6"/><rect x="309" y="613" width="3" height="2" fill="#0870e0"/><rect x="321" y="605" width="2" height="2" fill="#10b0e6"/><rect x="308" y="608" width="4" height="2" fill="#0870e0"/><rect x="320" y="605" width="2" height="3" fill="#0870e0"/><rect x="306" y="610" width="2" height="2" fill="#0870e0"/><rect x="314" y="608" width="4" height="3" fill="#0870e0"/><rect x="315" y="607" width="4" height="2" fill="#0870e0"/><rect x="307" y="615" width="4" height="2" fill="#0870e0"/><rect x="319" y="604" width="2" height="3" fill="#0870e0"/><rect x="311" y="599" width="3" height="3" fill="#10b0e6"/><rect x="311" y="606" width="3" height="3" fill="#10b0e6"/><rect x="307" y="607" width="3" height="3" fill="#0870e0"/><rect x="315" y="601" width="2" height="2" fill="#10b0e6"/><rect x="311" y="599" width="4" height="3" fill="#0870e0"/><rect x="314" y="614" width="3" height="2" fill="#10b0e6"/><rect x="320" y="599" width="3" height="2" fill="#10b0e6"/><rect x="317" y="595" width="2" height="3" fill="#0870e0"/><rect x="303" y="600" width="3" height="2" fill="#10b0e6"/><rect x="315" y="593" width="2" height="2" fill="#10b0e6"/><rect x="314" y="602" width="3" height="2" fill="#10b0e6"/><rect x="305" y="612" width="2" height="2" fill="#10b0e6"/><rect x="308" y="593" width="4" height="2" fill="#0870e0"/><rect x="319" y="608" width="4" height="2" fill="#0870e0"/><rect x="322" y="608" width="2" height="2" fill="#0870e0"/><rect x="304" y="609" width="3" height="3" fill="#10b0e6"/><rect x="317" y="596" width="3" height="3" fill="#0870e0"/><rect x="319" y="602" width="2" height="2" fill="#10b0e6"/><rect x="318" y="606" width="2" height="3" fill="#10b0e6"/><rect x="309" y="599" width="2" height="2" fill="#10b0e6"/><rect x="304" y="603" width="4" height="2" fill="#0870e0"/><rect x="305" y="613" width="3" height="2" fill="#10b0e6"/><rect x="306" y="613" width="2" height="3" fill="#10b0e6"/><rect x="306" y="598" width="3" height="2" fill="#0870e0"/><rect x="301" y="608" width="4" height="2" fill="#0870e0"/><rect x="304" y="596" width="2" height="3" fill="#10b0e6"/><rect x="318" y="612" width="4" height="2" fill="#0870e0"/><rect x="314" y="595" width="3" height="2" fill="#0870e0"/><rect x="305" y="596" width="3" height="2" fill="#10b0e6"/><rect x="319" y="602" width="3" height="2" fill="#10b0e6"/><rect x="309" y="604" width="2" height="3" fill="#0870e0"/><rect x="311" y="614" width="3" height="2" fill="#10b0e6"/><rect x="315" y="605" width="3" height="2" fill="#0870e0"/><rect x="311" y="607" width="3" height="2" fill="#10b0e6"/><rect x="311" y="610" width="2" height="2" fill="#0870e0"/><rect x="310" y="609" width="4" height="2" fill="#10b0e6"/><rect x="301" y="609" width="2" height="2" fill="#0870e0"/><rect x="300" y="620" width="3" height="2" fill="#10b0e6"/><rect x="302" y="619" width="4" height="3" fill="#10b0e6"/><rect x="307" y="618" width="2" height="2" fill="#0870e0"/><rect x="301" y="635" width="3" height="3" fill="#10b0e6"/><rect x="310" y="630" width="3" height="3" fill="#10b0e6"/><rect x="312" y="625" width="3" height="3" fill="#10b0e6"/><rect x="310" y="627" width="2" height="3" fill="#0870e0"/><rect x="300" y="616" width="4" height="3" fill="#10b0e6"/><rect x="310" y="610" width="3" height="2" fill="#0870e0"/><rect x="298" y="616" width="3" height="2" fill="#10b0e6"/><rect x="313" y="615" width="2" height="2" fill="#0870e0"/><rect x="305" y="631" width="3" height="2" fill="#10b0e6"/><rect x="301" y="609" width="2" height="2" fill="#10b0e6"/><rect x="302" y="635" width="4" height="2" fill="#10b0e6"/><rect x="303" y="632" width="4" height="2" fill="#10b0e6"/><rect x="301" y="623" width="2" height="2" fill="#0870e0"/><rect x="296" y="631" width="3" height="2" fill="#10b0e6"/><rect x="306" y="632" width="4" height="3" fill="#10b0e6"/><rect x="299" y="618" width="4" height="2" fill="#0870e0"/><rect x="307" y="621" width="3" height="3" fill="#0870e0"/><rect x="302" y="631" width="4" height="3" fill="#0870e0"/><rect x="305" y="612" width="4" height="2" fill="#10b0e6"/><rect x="310" y="626" width="3" height="2" fill="#10b0e6"/><rect x="305" y="614" width="2" height="3" fill="#0870e0"/><rect x="296" y="616" width="3" height="2" fill="#0870e0"/><rect x="313" y="624" width="4" height="2" fill="#0870e0"/><rect x="308" y="623" width="2" height="2" fill="#0870e0"/><rect x="302" y="611" width="4" height="2" fill="#10b0e6"/><rect x="311" y="623" width="2" height="2" fill="#10b0e6"/><rect x="298" y="629" width="2" height="2" fill="#10b0e6"/><rect x="308" y="622" width="3" height="3" fill="#0870e0"/><rect x="308" y="616" width="4" height="2" fill="#10b0e6"/><rect x="314" y="622" width="2" height="3" fill="#0870e0"/><rect x="305" y="634" width="4" height="2" fill="#10b0e6"/><rect x="307" y="618" width="4" height="2" fill="#10b0e6"/><rect x="304" y="626" width="4" height="2" fill="#10b0e6"/><rect x="300" y="613" width="3" height="2" fill="#0870e0"/><rect x="299" y="621" width="3" height="2" fill="#0870e0"/><rect x="312" y="625" width="3" height="2" fill="#0870e0"/><rect x="309" y="633" width="2" height="3" fill="#0870e0"/><rect x="298" y="616" width="4" height="3" fill="#10b0e6"/><rect x="300" y="621" width="4" height="2" fill="#10b0e6"/><rect x="315" y="619" width="2" height="2" fill="#10b0e6"/><rect x="314" y="626" width="4" height="2" fill="#10b0e6"/><rect x="294" y="620" width="4" height="3" fill="#10b0e6"/><rect x="304" y="609" width="2" height="2" fill="#0870e0"/><rect x="300" y="612" width="2" height="3" fill="#0870e0"/><rect x="305" y="611" width="2" height="2" fill="#0870e0"/><rect x="305" y="632" width="2" height="3" fill="#0870e0"/><rect x="310" y="610" width="2" height="2" fill="#10b0e6"/><rect x="296" y="624" width="2" height="3" fill="#10b0e6"/><rect x="295" y="615" width="4" height="3" fill="#10b0e6"/><rect x="302" y="610" width="2" height="2" fill="#0870e0"/><rect x="310" y="612" width="4" height="2" fill="#10b0e6"/><rect x="303" y="610" width="3" height="2" fill="#0870e0"/><rect x="302" y="623" width="4" height="2" fill="#0870e0"/><rect x="298" y="617" width="2" height="3" fill="#0870e0"/><rect x="298" y="613" width="3" height="3" fill="#10b0e6"/><rect x="309" y="616" width="2" height="2" fill="#10b0e6"/><rect x="295" y="626" width="3" height="2" fill="#0870e0"/><rect x="300" y="618" width="4" height="3" fill="#0870e0"/><rect x="298" y="624" width="3" height="2" fill="#0870e0"/><rect x="304" y="609" width="3" height="2" fill="#0870e0"/><rect x="296" y="620" width="2" height="2" fill="#0870e0"/><rect x="293" y="619" width="2" height="3" fill="#0870e0"/><rect x="303" y="630" width="2" height="3" fill="#10b0e6"/><rect x="296" y="624" width="3" height="3" fill="#10b0e6"/><rect x="314" y="624" width="2" height="2" fill="#10b0e6"/><rect x="307" y="610" width="2" height="2" fill="#10b0e6"/><rect x="310" y="615" width="3" height="2" fill="#10b0e6"/><rect x="301" y="625" width="2" height="2" fill="#0870e0"/><rect x="305" y="612" width="2" height="2" fill="#10b0e6"/><rect x="321" y="585" width="3" height="3" fill="#0870e0"/><rect x="333" y="587" width="2" height="2" fill="#10b0e6"/><rect x="335" y="588" width="2" height="2" fill="#0870e0"/><rect x="339" y="578" width="3" height="2" fill="#10b0e6"/><rect x="329" y="578" width="3" height="3" fill="#0870e0"/><rect x="326" y="575" width="2" height="2" fill="#10b0e6"/><rect x="336" y="583" width="3" height="2" fill="#0870e0"/><rect x="335" y="574" width="2" height="2" fill="#10b0e6"/><rect x="324" y="582" width="3" height="2" fill="#0870e0"/><rect x="335" y="578" width="3" height="2" fill="#10b0e6"/><rect x="317" y="578" width="3" height="2" fill="#0870e0"/><rect x="321" y="582" width="2" height="2" fill="#0870e0"/><rect x="318" y="583" width="2" height="2" fill="#0870e0"/><rect x="321" y="575" width="3" height="2" fill="#10b0e6"/><rect x="321" y="574" width="2" height="3" fill="#10b0e6"/><rect x="337" y="586" width="3" height="2" fill="#0870e0"/><rect x="336" y="580" width="4" height="2" fill="#10b0e6"/><rect x="322" y="585" width="2" height="3" fill="#0870e0"/><rect x="328" y="590" width="2" height="3" fill="#0870e0"/><rect x="323" y="574" width="2" height="2" fill="#10b0e6"/><rect x="318" y="577" width="2" height="3" fill="#10b0e6"/><rect x="332" y="583" width="2" height="2" fill="#10b0e6"/><rect x="336" y="581" width="3" height="2" fill="#0870e0"/><rect x="339" y="577" width="3" height="2" fill="#0870e0"/><rect x="322" y="579" width="3" height="2" fill="#10b0e6"/><rect x="329" y="581" width="4" height="2" fill="#10b0e6"/><rect x="325" y="580" width="2" height="2" fill="#10b0e6"/><rect x="330" y="580" width="2" height="2" fill="#10b0e6"/><rect x="319" y="581" width="2" height="2" fill="#10b0e6"/><rect x="323" y="579" width="3" height="2" fill="#0870e0"/><rect x="330" y="583" width="2" height="2" fill="#10b0e6"/><rect x="323" y="582" width="3" height="2" fill="#0870e0"/><rect x="335" y="588" width="3" height="3" fill="#10b0e6"/><rect x="338" y="580" width="2" height="3" fill="#10b0e6"/><rect x="333" y="574" width="4" height="2" fill="#0870e0"/><rect x="334" y="580" width="3" height="2" fill="#10b0e6"/><rect x="320" y="585" width="3" height="2" fill="#10b0e6"/><rect x="318" y="582" width="4" height="3" fill="#0870e0"/><rect x="329" y="580" width="3" height="2" fill="#0870e0"/><rect x="332" y="586" width="2" height="3" fill="#0870e0"/><rect x="336" y="577" width="3" height="2" fill="#0870e0"/><rect x="322" y="581" width="3" height="2" fill="#0870e0"/><rect x="322" y="578" width="2" height="2" fill="#10b0e6"/><rect x="323" y="576" width="3" height="3" fill="#0870e0"/><rect x="334" y="585" width="4" height="3" fill="#10b0e6"/><rect x="338" y="578" width="3" height="2" fill="#10b0e6"/><rect x="331" y="578" width="2" height="2" fill="#10b0e6"/><rect x="338" y="576" width="3" height="3" fill="#0870e0"/><rect x="336" y="579" width="2" height="2" fill="#0870e0"/><rect x="325" y="576" width="3" height="2" fill="#0870e0"/><rect x="339" y="577" width="3" height="2" fill="#10b0e6"/><rect x="337" y="575" width="3" height="2" fill="#0870e0"/><rect x="297" y="634" width="2" height="2" fill="#0870e0"/><rect x="285" y="631" width="3" height="2" fill="#10b0e6"/><rect x="296" y="636" width="2" height="2" fill="#0870e0"/><rect x="298" y="637" width="3" height="2" fill="#0870e0"/><rect x="290" y="623" width="4" height="2" fill="#10b0e6"/><rect x="298" y="634" width="3" height="2" fill="#0870e0"/><rect x="286" y="635" width="3" height="2" fill="#0870e0"/><rect x="233" y="644" width="3" height="3" fill="#10b0e6"/><rect x="229" y="646" width="2" height="2" fill="#10b0e6"/><rect x="231" y="656" width="4" height="3" fill="#10b0e6"/><rect x="228" y="652" width="3" height="3" fill="#10b0e6"/><rect x="218" y="643" width="3" height="2" fill="#0870e0"/><rect x="212" y="659" width="3" height="2" fill="#10b0e6"/><rect x="230" y="655" width="3" height="2" fill="#10b0e6"/><rect x="220" y="653" width="2" height="2" fill="#0870e0"/><rect x="219" y="656" width="4" height="2" fill="#10b0e6"/><rect x="207" y="648" width="4" height="2" fill="#0870e0"/><rect x="223" y="644" width="2" height="3" fill="#0870e0"/><rect x="230" y="655" width="2" height="2" fill="#10b0e6"/><rect x="215" y="656" width="2" height="3" fill="#10b0e6"/><rect x="230" y="643" width="2" height="2" fill="#10b0e6"/><rect x="221" y="658" width="3" height="3" fill="#0870e0"/><rect x="233" y="658" width="2" height="2" fill="#10b0e6"/><rect x="206" y="648" width="3" height="2" fill="#10b0e6"/><rect x="236" y="654" width="4" height="2" fill="#0870e0"/><rect x="215" y="655" width="2" height="3" fill="#10b0e6"/><rect x="228" y="649" width="2" height="2" fill="#0870e0"/><rect x="225" y="649" width="3" height="3" fill="#10b0e6"/><rect x="213" y="657" width="3" height="2" fill="#0870e0"/><rect x="214" y="657" width="4" height="2" fill="#10b0e6"/><rect x="219" y="658" width="3" height="2" fill="#10b0e6"/><rect x="259" y="672" width="3" height="3" fill="#10b0e6"/><rect x="247" y="658" width="3" height="2" fill="#0870e0"/><rect x="233" y="663" width="3" height="2" fill="#0870e0"/><rect x="239" y="661" width="4" height="2" fill="#0870e0"/><rect x="252" y="669" width="3" height="2" fill="#0870e0"/><rect x="257" y="670" width="4" height="3" fill="#0870e0"/><rect x="260" y="678" width="2" height="3" fill="#10b0e6"/><rect x="252" y="679" width="3" height="2" fill="#10b0e6"/><rect x="255" y="685" width="3" height="2" fill="#10b0e6"/><rect x="250" y="668" width="4" height="3" fill="#0870e0"/><rect x="230" y="682" width="2" height="2" fill="#0870e0"/><rect x="235" y="682" width="3" height="3" fill="#0870e0"/><rect x="243" y="679" width="3" height="3" fill="#0870e0"/><rect x="238" y="681" width="3" height="2" fill="#0870e0"/><rect x="240" y="685" width="2" height="2" fill="#10b0e6"/><rect x="252" y="673" width="3" height="3" fill="#10b0e6"/><rect x="228" y="669" width="3" height="2" fill="#10b0e6"/><rect x="255" y="664" width="4" height="3" fill="#10b0e6"/><rect x="239" y="667" width="3" height="2" fill="#0870e0"/><rect x="240" y="671" width="4" height="2" fill="#0870e0"/><rect x="252" y="678" width="3" height="2" fill="#0870e0"/><rect x="256" y="684" width="4" height="3" fill="#0870e0"/><rect x="237" y="659" width="4" height="3" fill="#0870e0"/><rect x="245" y="656" width="3" height="3" fill="#0870e0"/><rect x="237" y="681" width="2" height="2" fill="#10b0e6"/><rect x="249" y="689" width="2" height="2" fill="#0870e0"/><rect x="250" y="671" width="3" height="3" fill="#0870e0"/><rect x="258" y="666" width="4" height="2" fill="#10b0e6"/><rect x="231" y="670" width="3" height="2" fill="#0870e0"/><rect x="247" y="678" width="3" height="2" fill="#0870e0"/><rect x="241" y="674" width="3" height="3" fill="#0870e0"/><rect x="253" y="660" width="3" height="3" fill="#0870e0"/><rect x="238" y="660" width="2" height="2" fill="#10b0e6"/><rect x="252" y="666" width="2" height="3" fill="#10b0e6"/><rect x="247" y="676" width="3" height="3" fill="#0870e0"/><rect x="236" y="660" width="2" height="2" fill="#0870e0"/><rect x="252" y="657" width="2" height="2" fill="#0870e0"/><rect x="249" y="688" width="2" height="2" fill="#10b0e6"/><rect x="276" y="687" width="2" height="3" fill="#10b0e6"/><rect x="285" y="672" width="2" height="2" fill="#0870e0"/><rect x="275" y="672" width="2" height="3" fill="#0870e0"/><rect x="280" y="688" width="2" height="2" fill="#0870e0"/><rect x="270" y="683" width="2" height="2" fill="#10b0e6"/><rect x="273" y="688" width="2" height="2" fill="#10b0e6"/><rect x="282" y="672" width="3" height="2" fill="#10b0e6"/><rect x="285" y="679" width="4" height="2" fill="#10b0e6"/><rect x="266" y="682" width="4" height="2" fill="#10b0e6"/><rect x="271" y="674" width="3" height="3" fill="#10b0e6"/><rect x="268" y="671" width="2" height="2" fill="#0870e0"/><rect x="278" y="669" width="2" height="3" fill="#0870e0"/><rect x="269" y="671" width="4" height="2" fill="#10b0e6"/><rect x="274" y="667" width="3" height="2" fill="#0870e0"/><rect x="269" y="675" width="2" height="3" fill="#0870e0"/><rect x="283" y="666" width="3" height="3" fill="#10b0e6"/><rect x="268" y="671" width="4" height="3" fill="#0870e0"/><rect x="278" y="671" width="3" height="3" fill="#10b0e6"/><rect x="282" y="670" width="2" height="2" fill="#0870e0"/><rect x="286" y="674" width="2" height="2" fill="#10b0e6"/><rect x="275" y="681" width="2" height="2" fill="#10b0e6"/><rect x="286" y="673" width="2" height="3" fill="#0870e0"/><rect x="281" y="669" width="2" height="2" fill="#10b0e6"/><rect x="267" y="674" width="3" height="2" fill="#10b0e6"/><rect x="282" y="680" width="2" height="2" fill="#0870e0"/><rect x="273" y="676" width="2" height="3" fill="#10b0e6"/><rect x="270" y="663" width="3" height="2" fill="#10b0e6"/><rect x="276" y="655" width="1" height="2" fill="#0870e0"/><rect x="306" y="671" width="2" height="1" fill="#8010f0"/><rect x="257" y="657" width="3" height="2" fill="#8010f0"/><rect x="256" y="654" width="2" height="1" fill="#0870e0"/><rect x="271" y="634" width="2" height="1" fill="#0870e0"/><rect x="236" y="590" width="3" height="1" fill="#0870e0"/><rect x="273" y="637" width="1" height="1" fill="#0870e0"/><rect x="279" y="631" width="2" height="2" fill="#2040e0"/><rect x="281" y="630" width="1" height="2" fill="#0870e0"/><rect x="282" y="622" width="2" height="2" fill="#5020e0"/><rect x="267" y="632" width="1" height="1" fill="#8010f0"/><rect x="195" y="660" width="2" height="2" fill="#2040e0"/><rect x="313" y="624" width="2" height="1" fill="#0870e0"/><rect x="269" y="661" width="2" height="1" fill="#8010f0"/><rect x="277" y="645" width="1" height="1" fill="#2040e0"/><rect x="266" y="652" width="2" height="2" fill="#2040e0"/><rect x="271" y="652" width="1" height="2" fill="#0870e0"/><rect x="237" y="630" width="3" height="2" fill="#0870e0"/><rect x="273" y="636" width="2" height="2" fill="#2040e0"/><rect x="267" y="670" width="1" height="2" fill="#2040e0"/><rect x="312" y="654" width="3" height="1" fill="#2040e0"/><rect x="262" y="639" width="2" height="1" fill="#2040e0"/><rect x="240" y="639" width="1" height="1" fill="#0870e0"/><rect x="272" y="641" width="2" height="1" fill="#0870e0"/><rect x="274" y="625" width="2" height="1" fill="#0870e0"/><rect x="284" y="647" width="3" height="1" fill="#5020e0"/><rect x="269" y="592" width="2" height="1" fill="#5020e0"/><rect x="278" y="681" width="2" height="2" fill="#2040e0"/><rect x="270" y="608" width="2" height="2" fill="#2040e0"/><rect x="282" y="618" width="2" height="1" fill="#8010f0"/><rect x="274" y="632" width="2" height="2" fill="#2040e0"/><rect x="281" y="639" width="3" height="1" fill="#0870e0"/><rect x="231" y="622" width="2" height="2" fill="#2040e0"/><rect x="286" y="645" width="2" height="2" fill="#8010f0"/><rect x="279" y="628" width="2" height="2" fill="#5020e0"/><rect x="266" y="628" width="3" height="1" fill="#8010f0"/><rect x="244" y="653" width="3" height="1" fill="#0870e0"/><rect x="287" y="640" width="2" height="1" fill="#8010f0"/><rect x="258" y="636" width="1" height="1" fill="#0870e0"/><rect x="241" y="653" width="1" height="1" fill="#2040e0"/><rect x="227" y="637" width="1" height="1" fill="#2040e0"/><rect x="334" y="610" width="1" height="2" fill="#8010f0"/><rect x="261" y="609" width="3" height="1" fill="#0870e0"/><rect x="278" y="645" width="1" height="1" fill="#0870e0"/><rect x="263" y="639" width="2" height="1" fill="#0870e0"/><rect x="290" y="609" width="2" height="1" fill="#5020e0"/><rect x="274" y="635" width="1" height="1" fill="#0870e0"/><rect x="268" y="648" width="2" height="1" fill="#0870e0"/><rect x="283" y="617" width="2" height="1" fill="#0870e0"/><rect x="248" y="597" width="1" height="2" fill="#0870e0"/><rect x="272" y="636" width="2" height="1" fill="#0870e0"/><rect x="296" y="628" width="1" height="2" fill="#0870e0"/><rect x="256" y="631" width="3" height="1" fill="#2040e0"/><rect x="288" y="621" width="1" height="1" fill="#8010f0"/><rect x="252" y="659" width="2" height="2" fill="#8010f0"/><rect x="272" y="635" width="1" height="1" fill="#2040e0"/><rect x="251" y="630" width="2" height="1" fill="#8010f0"/><rect x="263" y="633" width="1" height="1" fill="#2040e0"/><rect x="263" y="637" width="2" height="2" fill="#5020e0"/><rect x="291" y="629" width="2" height="1" fill="#2040e0"/><rect x="309" y="678" width="1" height="2" fill="#5020e0"/><rect x="224" y="640" width="1" height="1" fill="#0870e0"/><rect x="263" y="620" width="2" height="1" fill="#5020e0"/><rect x="249" y="618" width="2" height="1" fill="#0870e0"/><rect x="265" y="619" width="2" height="1" fill="#2040e0"/><rect x="309" y="624" width="2" height="1" fill="#5020e0"/><rect x="275" y="633" width="1" height="1" fill="#0870e0"/><rect x="281" y="623" width="2" height="2" fill="#5020e0"/><rect x="272" y="621" width="3" height="2" fill="#8010f0"/><rect x="275" y="640" width="1" height="2" fill="#0870e0"/><rect x="275" y="649" width="2" height="1" fill="#8010f0"/><rect x="259" y="597" width="3" height="1" fill="#5020e0"/><rect x="274" y="619" width="1" height="1" fill="#5020e0"/><rect x="260" y="610" width="2" height="1" fill="#0870e0"/><rect x="271" y="644" width="2" height="1" fill="#2040e0"/><rect x="178" y="622" width="1" height="1" fill="#8010f0"/><rect x="258" y="638" width="1" height="1" fill="#0870e0"/><rect x="276" y="620" width="1" height="1" fill="#8010f0"/><rect x="283" y="627" width="2" height="1" fill="#8010f0"/><rect x="278" y="611" width="1" height="1" fill="#8010f0"/><rect x="281" y="634" width="2" height="1" fill="#2040e0"/><rect x="297" y="625" width="1" height="1" fill="#8010f0"/><rect x="267" y="640" width="1" height="2" fill="#0870e0"/><rect x="280" y="648" width="1" height="1" fill="#8010f0"/><rect x="282" y="633" width="1" height="2" fill="#0870e0"/><rect x="269" y="640" width="1" height="1" fill="#0870e0"/><rect x="286" y="627" width="1" height="1" fill="#5020e0"/><rect x="259" y="625" width="1" height="2" fill="#2040e0"/><rect x="263" y="640" width="1" height="1" fill="#8010f0"/><rect x="267" y="633" width="3" height="1" fill="#5020e0"/><rect x="270" y="636" width="2" height="1" fill="#0870e0"/><rect x="271" y="636" width="3" height="1" fill="#0870e0"/><rect x="267" y="636" width="1" height="1" fill="#5020e0"/><rect x="290" y="641" width="3" height="1" fill="#8010f0"/><rect x="243" y="627" width="1" height="1" fill="#5020e0"/><rect x="220" y="624" width="1" height="1" fill="#0870e0"/><rect x="310" y="651" width="1" height="2" fill="#8010f0"/><rect x="281" y="638" width="2" height="1" fill="#0870e0"/><rect x="274" y="644" width="2" height="1" fill="#8010f0"/><rect x="268" y="662" width="3" height="1" fill="#0870e0"/><rect x="318" y="631" width="1" height="1" fill="#0870e0"/><rect x="270" y="638" width="2" height="2" fill="#2040e0"/><rect x="278" y="634" width="2" height="2" fill="#5020e0"/><rect x="267" y="640" width="3" height="1" fill="#0870e0"/><rect x="221" y="618" width="1" height="1" fill="#0870e0"/><rect x="276" y="633" width="3" height="1" fill="#5020e0"/><rect x="271" y="629" width="1" height="1" fill="#0870e0"/><rect x="271" y="657" width="1" height="2" fill="#8010f0"/><rect x="245" y="649" width="2" height="2" fill="#0870e0"/><rect x="264" y="644" width="2" height="2" fill="#5020e0"/><rect x="265" y="657" width="2" height="2" fill="#8010f0"/><rect x="297" y="649" width="2" height="1" fill="#0870e0"/><rect x="273" y="635" width="1" height="2" fill="#5020e0"/><rect x="271" y="635" width="2" height="2" fill="#2040e0"/><rect x="273" y="644" width="2" height="2" fill="#2040e0"/><rect x="273" y="630" width="1" height="1" fill="#0870e0"/><rect x="274" y="598" width="1" height="1" fill="#5020e0"/><rect x="267" y="635" width="1" height="1" fill="#8010f0"/><rect x="270" y="639" width="1" height="2" fill="#8010f0"/><rect x="279" y="625" width="1" height="1" fill="#0870e0"/><rect x="317" y="651" width="2" height="1" fill="#0870e0"/><rect x="277" y="624" width="2" height="1" fill="#2040e0"/><rect x="274" y="636" width="2" height="1" fill="#5020e0"/><rect x="274" y="643" width="2" height="1" fill="#0870e0"/><rect x="277" y="621" width="1" height="1" fill="#0870e0"/><rect x="253" y="647" width="3" height="1" fill="#2040e0"/><rect x="243" y="657" width="1" height="2" fill="#0870e0"/><rect x="311" y="653" width="1" height="1" fill="#5020e0"/><rect x="272" y="630" width="3" height="1" fill="#5020e0"/><rect x="289" y="652" width="1" height="1" fill="#2040e0"/><rect x="305" y="637" width="2" height="1" fill="#0870e0"/><rect x="337" y="652" width="3" height="1" fill="#0870e0"/><rect x="191" y="610" width="2" height="2" fill="#0870e0"/><rect x="255" y="625" width="2" height="1" fill="#0870e0"/><rect x="278" y="649" width="2" height="2" fill="#8010f0"/><rect x="271" y="631" width="1" height="1" fill="#0870e0"/><rect x="278" y="632" width="3" height="1" fill="#5020e0"/><rect x="268" y="640" width="3" height="1" fill="#5020e0"/><rect x="267" y="637" width="2" height="2" fill="#0870e0"/><rect x="267" y="632" width="2" height="1" fill="#0870e0"/><rect x="268" y="639" width="3" height="1" fill="#0870e0"/><rect x="338" y="639" width="2" height="2" fill="#0870e0"/><rect x="280" y="637" width="1" height="1" fill="#8010f0"/><rect x="300" y="647" width="1" height="1" fill="#8010f0"/><rect x="232" y="638" width="2" height="1" fill="#0870e0"/><rect x="261" y="630" width="1" height="1" fill="#2040e0"/><rect x="315" y="630" width="2" height="1" fill="#2040e0"/><rect x="273" y="635" width="1" height="2" fill="#2040e0"/><rect x="267" y="615" width="3" height="2" fill="#5020e0"/><rect x="275" y="638" width="2" height="1" fill="#8010f0"/><rect x="299" y="633" width="2" height="1" fill="#0870e0"/><rect x="267" y="633" width="3" height="1" fill="#0870e0"/><rect x="275" y="659" width="2" height="1" fill="#8010f0"/><rect x="292" y="638" width="1" height="1" fill="#5020e0"/><rect x="268" y="635" width="2" height="1" fill="#8010f0"/><rect x="274" y="637" width="1" height="1" fill="#0870e0"/><rect x="276" y="614" width="1" height="1" fill="#2040e0"/><rect x="283" y="616" width="1" height="1" fill="#8010f0"/><rect x="256" y="637" width="1" height="1" fill="#0870e0"/><rect x="255" y="635" width="2" height="2" fill="#0870e0"/><rect x="280" y="622" width="3" height="1" fill="#8010f0"/><rect x="272" y="636" width="1" height="1" fill="#0870e0"/><rect x="219" y="631" width="2" height="1" fill="#8010f0"/><rect x="302" y="639" width="2" height="1" fill="#8010f0"/><rect x="277" y="638" width="1" height="1" fill="#0870e0"/><rect x="290" y="643" width="2" height="1" fill="#5020e0"/><rect x="290" y="632" width="2" height="1" fill="#0870e0"/><rect x="281" y="638" width="2" height="1" fill="#0870e0"/><rect x="272" y="635" width="2" height="1" fill="#0870e0"/><rect x="300" y="612" width="3" height="2" fill="#0870e0"/></g><g fill="none" stroke="#fff" stroke-width="1"><circle cx="272.7" cy="631.4" r="27.4"/><circle cx="272.7" cy="631.4" r="54.8"/><circle cx="272.7" cy="631.4" r="82.19999999999999"/><circle cx="272.7" cy="631.4" r="109.6"/><circle cx="272.7" cy="631.4" r="137.0"/><circle cx="272.7" cy="631.4" r="164.39999999999998"/><circle cx="272.7" cy="631.4" r="191.79999999999998"/><circle cx="272.7" cy="631.4" r="219.2"/><line x1="55" y1="631.4" x2="487" y2="631.4"/><line x1="272.7" y1="458" x2="272.7" y2="795"/><line x1="117.19999999999999" y1="475.9" x2="253.2" y2="611.9"/><line x1="292.2" y1="650.9" x2="428.2" y2="786.9"/><line x1="117.19999999999999" y1="786.9" x2="253.2" y2="650.9"/><line x1="292.2" y1="611.9" x2="428.2" y2="475.9"/></g><path d="M216,641 L228,640 L241,637.5" fill="none" stroke="#fff" stroke-width="2.2"/><circle cx="271.9" cy="616.5" r="7.2" fill="none" stroke="#ffa500" stroke-width="1"/><text x="272" y="630.5" font-size="6.5" fill="#ffa500" text-anchor="middle">b&lt;-125-0</text><path d="M266,632 h15 l-2,3 h-11z M269,630 h2.5 v2 h-2.5z M274,629 h1 v3 h-1z" fill="#ff0000"/></g><circle cx="242.2" cy="464" r="7.2" fill="none" stroke="#ffa500" stroke-width="1"/><text x="243" y="479" font-size="5.5" fill="#ffa500" text-anchor="middle">whoi-met</text><path d="M266,463.5 h11 M271.5,458 v11" stroke="#f0e68c" stroke-width="1" shape-rendering="crispEdges"/><text x="15.5" y="447" font-size="24" fill="#ffff00" textLength="245" lengthAdjust="spacing">23–aug–1997,01:05:00</text><text x="273" y="447" font-size="24" fill="#fff" textLength="258" lengthAdjust="spacing">maxdz plot.  maxdz plot.</text><text x="16" y="479" font-size="24" fill="#fff" textLength="155" lengthAdjust="spacing">rhb_met track.</text><g shape-rendering="crispEdges"><line x1="488" y1="458.5" x2="574" y2="458.5" stroke="#999"/><line x1="488" y1="626.5" x2="574" y2="626.5" stroke="#999"/><line x1="488" y1="794.5" x2="574" y2="794.5" stroke="#999"/><line x1="488" y1="819.5" x2="574" y2="819.5" stroke="#999"/><rect x="490" y="485" width="10" height="7" fill="#ff8080"/><rect x="490" y="492" width="10" height="7" fill="#ff9a9a"/><rect x="490" y="499" width="10" height="7" fill="#ffaa60"/><rect x="490" y="506" width="10" height="7" fill="#ffd8b0"/><rect x="490" y="513" width="10" height="7" fill="#ffd814"/><rect x="490" y="520" width="10" height="7" fill="#eeb422"/><rect x="490" y="527" width="10" height="7" fill="#dc9432"/><rect x="490" y="534" width="10" height="7" fill="#c8c8c8"/><rect x="490" y="541" width="10" height="7" fill="#08704a"/><rect x="490" y="548" width="10" height="7" fill="#00e896"/><rect x="490" y="555" width="10" height="7" fill="#10b0e6"/><rect x="490" y="562" width="10" height="7" fill="#0870e0"/><rect x="490" y="569" width="10" height="7" fill="#2040e0"/><rect x="490" y="576" width="10" height="7" fill="#5020e0"/><rect x="490" y="583" width="10" height="7" fill="#8010f0"/><rect x="490" y="590" width="10" height="7" fill="#9414ff"/><rect x="490" y="653" width="10" height="7" fill="#ff8080"/><rect x="490" y="660" width="10" height="7" fill="#ff9a9a"/><rect x="490" y="667" width="10" height="7" fill="#ffaa60"/><rect x="490" y="674" width="10" height="7" fill="#ffd8b0"/><rect x="490" y="681" width="10" height="7" fill="#ffd814"/><rect x="490" y="688" width="10" height="7" fill="#eeb422"/><rect x="490" y="695" width="10" height="7" fill="#dc9432"/><rect x="490" y="702" width="10" height="7" fill="#c8c8c8"/><rect x="490" y="709" width="10" height="7" fill="#08704a"/><rect x="490" y="716" width="10" height="7" fill="#00e896"/><rect x="490" y="723" width="10" height="7" fill="#10b0e6"/><rect x="490" y="730" width="10" height="7" fill="#0870e0"/><rect x="490" y="737" width="10" height="7" fill="#2040e0"/><rect x="490" y="744" width="10" height="7" fill="#5020e0"/><rect x="490" y="751" width="10" height="7" fill="#8010f0"/><rect x="490" y="758" width="10" height="7" fill="#9414ff"/></g><text x="490" y="471" font-size="17" fill="#fff" textLength="52" lengthAdjust="spacing">maxdz</text><text x="505.5" y="493.5" font-size="17.5" fill="#fff">65.0</text><text x="505.5" y="521.5" font-size="17.5" fill="#fff">45.0</text><text x="505.5" y="549.5" font-size="17.5" fill="#fff">25.0</text><text x="505.5" y="577.5" font-size="17.5" fill="#fff">5.0</text><text x="505.5" y="605.5" font-size="17.5" fill="#fff">–15.0</text><text x="490" y="639" font-size="17" fill="#fff" textLength="52" lengthAdjust="spacing">maxdz</text><text x="505.5" y="661.5" font-size="17.5" fill="#fff">65.0</text><text x="505.5" y="689.5" font-size="17.5" fill="#fff">45.0</text><text x="505.5" y="717.5" font-size="17.5" fill="#fff">25.0</text><text x="505.5" y="745.5" font-size="17.5" fill="#fff">5.0</text><text x="505.5" y="773.5" font-size="17.5" fill="#fff">–15.0</text><text x="489.5" y="808" font-size="10" fill="#ff0000">rhb_met</text><text x="381" y="861" font-size="24" fill="#fff" textLength="181" lengthAdjust="spacing">Alt: 0.50 km MSL</text><text x="272" y="808" font-size="6.5" fill="#ffff80" text-anchor="middle">-125</text><g transform="translate(10,821)"><rect x="0.5" y="0.5" width="45" height="47" fill="#191970" stroke="#8c8c8c" stroke-width="1"/><path d="M6.5,12.5 C9,8.5 14,6.2 20,7.8 C26,9.5 31,13.5 38,8.5 L7,40 C12,35.5 17,35 23,37.8 C29,40.5 34,41 38.5,36" fill="none" stroke="#ffff00" stroke-width="1.7" stroke-linejoin="round" stroke-linecap="round"/><path d="M9,10.5 C13,7 18,7 22,8.5 C27,10.5 31,12.5 36,10 C31,14 26,11.5 21,10 C16,8.5 12,9 9,10.5Z M9,38.5 C13,35 18,35.5 23,37.8 C28,40 33,40.5 37,37.5 C33,42 27,41.5 22,39.5 C17,37.5 13,37 9,38.5Z" fill="#ffff00"/></g><g transform="translate(57,821)"><rect x="0.5" y="0.5" width="45" height="47" fill="#696969" stroke="#999" stroke-width="1"/><text x="3" y="14.5" font-size="14" font-weight="bold" fill="#d8d8d8" textLength="30" lengthAdjust="spacingAndGlyphs">GOES</text><path d="M3,44 L3,18 C12,17 22,24 23.5,44 Z" fill="url(#dg)"/><path d="M12,25 C15,21 19,24 20,30 C20,33 15,33 13,31 Z M3,38 C7,36 11,38 11,44 L3,44Z M3,18 l4,0 l-2,5 l-2,2z" fill="#d8d8d8"/><path d="M40,18 l3.5,3.5 l-3.5,3.5 l-3.5,-3.5z" fill="#d8d8d8"/><path d="M21,24 L37,21 M24,32 L38,24" stroke="#d8d8d8" stroke-width="1.2" stroke-dasharray="1.2 1.6" fill="none"/><rect x="19" y="17" width="1.3" height="1.3" fill="#d8d8d8"/><rect x="25" y="20" width="1.3" height="1.3" fill="#d8d8d8"/><rect x="30" y="19" width="1.3" height="1.3" fill="#d8d8d8"/><rect x="34" y="31" width="1.3" height="1.3" fill="#d8d8d8"/><rect x="39" y="30" width="1.3" height="1.3" fill="#d8d8d8"/><text x="25" y="43.5" font-size="10" fill="#d8d8d8" textLength="15" lengthAdjust="spacingAndGlyphs">.IR</text></g><g transform="translate(104,821)"><rect x="0.5" y="0.5" width="45" height="47" fill="#191970" stroke="#8c8c8c" stroke-width="1"/><g transform="translate(0,0) scale(1.0)"><path d="M5,9.4 C7,20 15,29 27.4,31.2" fill="none" stroke="#ffff00" stroke-width="1.8" stroke-linecap="round"/><path d="M11.3,31 L14.8,31 L15.6,40 L8.8,40 Z" fill="#ffff00"/><path d="M13.6,22 L13,32" stroke="#ffff00" stroke-width="1.3"/><path d="M12,24 v-3 h4 v3.5" fill="none" stroke="#ffff00" stroke-width="1"/></g><text x="36.8" y="16.5" font-size="12.5" fill="#ffff00" text-anchor="middle">S</text><text x="36.8" y="28.5" font-size="12.5" fill="#ffff00" text-anchor="middle">U</text><text x="36.8" y="40.5" font-size="12.5" fill="#ffff00" text-anchor="middle">R</text></g><g transform="translate(151,821)"><rect x="0.5" y="0.5" width="45" height="47" fill="#191970" stroke="#8c8c8c" stroke-width="1"/><line x1="5.5" y1="5.0" x2="5.5" y2="43.0" stroke="#ffff00" stroke-width="1.2"/><line x1="14.5" y1="5.0" x2="14.5" y2="43.0" stroke="#ffff00" stroke-width="1.2"/><line x1="23.5" y1="5.0" x2="23.5" y2="43.0" stroke="#ffff00" stroke-width="1.2"/><line x1="32.5" y1="5.0" x2="32.5" y2="43.0" stroke="#ffff00" stroke-width="1.2"/><line x1="41.5" y1="5.0" x2="41.5" y2="43.0" stroke="#ffff00" stroke-width="1.2"/><line x1="5.0" y1="5.5" x2="42.0" y2="5.5" stroke="#ffff00" stroke-width="1.2"/><line x1="5.0" y1="14.5" x2="42.0" y2="14.5" stroke="#ffff00" stroke-width="1.2"/><line x1="5.0" y1="23.5" x2="42.0" y2="23.5" stroke="#ffff00" stroke-width="1.2"/><line x1="5.0" y1="33.5" x2="42.0" y2="33.5" stroke="#ffff00" stroke-width="1.2"/><line x1="5.0" y1="42.5" x2="42.0" y2="42.5" stroke="#ffff00" stroke-width="1.2"/><path d="M12.5,8 C14,19 22,28 35,31.5" fill="none" stroke="#ffff00" stroke-width="2" stroke-linecap="round"/><path d="M17.5,20.5 L20.5,23 L23,40 L15,40 Z" fill="#ffff00"/></g><g transform="translate(198,821)"><rect x="0.5" y="0.5" width="13" height="47" fill="#191970" stroke="#8c8c8c" stroke-width="1"/><text x="7.3" y="11" font-size="6.3" fill="#ffff00" text-anchor="middle">B</text><text x="7.3" y="17.2" font-size="6.3" fill="#ffff00" text-anchor="middle">O</text><text x="7.3" y="23.4" font-size="6.3" fill="#ffff00" text-anchor="middle">U</text><text x="7.3" y="29.6" font-size="6.3" fill="#ffff00" text-anchor="middle">N</text><text x="7.3" y="35.8" font-size="6.3" fill="#ffff00" text-anchor="middle">D</text><text x="7.3" y="42" font-size="6.3" fill="#ffff00" text-anchor="middle">S</text></g><g transform="translate(213,845)"><rect x="0.5" y="0.5" width="21" height="23" fill="#191970" stroke="#8c8c8c" stroke-width="1"/><line x1="3.5" y1="4" x2="3.5" y2="20" stroke="#ffff00" stroke-width="1.2"/><line x1="8.5" y1="4" x2="8.5" y2="20" stroke="#ffff00" stroke-width="1.2"/><line x1="13.5" y1="4" x2="13.5" y2="20" stroke="#ffff00" stroke-width="1.2"/><line x1="18.5" y1="4" x2="18.5" y2="20" stroke="#ffff00" stroke-width="1.2"/><line x1="3" y1="4.5" x2="19" y2="4.5" stroke="#ffff00" stroke-width="1.2"/><line x1="3" y1="9.5" x2="19" y2="9.5" stroke="#ffff00" stroke-width="1.2"/><line x1="3" y1="14.5" x2="19" y2="14.5" stroke="#ffff00" stroke-width="1.2"/><line x1="3" y1="19.5" x2="19" y2="19.5" stroke="#ffff00" stroke-width="1.2"/></g><g transform="translate(236,821)"><rect x="0.5" y="0.5" width="20" height="47" fill="#191970" stroke="#8c8c8c" stroke-width="1"/><path d="M3,5 l4,-1 l2,3 l-2,3 l2,3 l-2,2 l-2,-4 l-3,-1 z M9,5 l5,-1 l3,-1 l0,2 l-3,1 l2,3 l0,5 l-3,-2 l-1,-4 z M4,13 l2,0 l0,2 l-2,0z" fill="#ffff00"/><text x="10.4" y="25" font-size="9.5" fill="#ffff00" text-anchor="middle">M</text><text x="10.4" y="33" font-size="9.5" fill="#ffff00" text-anchor="middle">A</text><text x="10.4" y="41" font-size="9.5" fill="#ffff00" text-anchor="middle">P</text></g><g transform="translate(258,821)"><rect x="0.5" y="0.5" width="20" height="47" fill="#191970" stroke="#8c8c8c" stroke-width="1"/><ellipse cx="10.5" cy="23" rx="7.2" ry="7.8" fill="none" stroke="#ffff00" stroke-width="1.1"/><ellipse cx="10.5" cy="23" rx="5.2" ry="5.6" fill="none" stroke="#ffff00" stroke-width="1"/><circle cx="10.5" cy="23" r="2.6" fill="none" stroke="#ffff00" stroke-width="1.1"/><line x1="12.9" y1="24.0" x2="17.2" y2="26.0" stroke="#ffff00" stroke-width="1"/><line x1="11.5" y1="25.4" x2="13.3" y2="30.2" stroke="#ffff00" stroke-width="1"/><line x1="9.5" y1="25.4" x2="7.7" y2="30.2" stroke="#ffff00" stroke-width="1"/><line x1="8.1" y1="24.0" x2="3.8" y2="26.0" stroke="#ffff00" stroke-width="1"/><line x1="8.1" y1="22.0" x2="3.8" y2="20.0" stroke="#ffff00" stroke-width="1"/><line x1="9.5" y1="20.6" x2="7.7" y2="15.8" stroke="#ffff00" stroke-width="1"/><line x1="11.5" y1="20.6" x2="13.3" y2="15.8" stroke="#ffff00" stroke-width="1"/><line x1="12.9" y1="22.0" x2="17.2" y2="20.0" stroke="#ffff00" stroke-width="1"/></g><g transform="translate(280,845)"><rect x="0.5" y="0.5" width="21" height="23" fill="#191970" stroke="#8c8c8c" stroke-width="1"/><circle cx="10.7" cy="11.5" r="7" fill="none" stroke="#ffff00" stroke-width="1.2"/></g><g transform="translate(303,821)"><rect x="0.5" y="0.5" width="45" height="47" fill="#191970" stroke="#8c8c8c" stroke-width="1"/><path d="M6,32 L40,32 L36.5,38 L8.5,38 Z" fill="none" stroke="#ffff00" stroke-width="1.2"/><path d="M8,32 L8,24 L12.5,24 L14,32" fill="none" stroke="#ffff00" stroke-width="1.2"/><circle cx="22" cy="23" r="2.9" fill="none" stroke="#ffff00" stroke-width="1.2"/><rect x="21.2" y="26" width="1.8" height="6" fill="none" stroke="#ffff00" stroke-width="0.8"/><line x1="34.2" y1="16" x2="34.2" y2="32" stroke="#ffff00" stroke-width="1.2"/><path d="M3,44 L3,40 l2,-1.5 l2.5,2 l2.5,-2 l2.5,2 l2.5,-2 l2.5,2 l2.5,-2 l2.5,2 l2.5,-2 l2.5,2 l2.5,-2 l2.5,2 l2.5,-2 l2.5,2 l2.5,-2 l2,1.5 L43,44 Z" fill="#ffff00"/></g><g stroke="#fff" stroke-width="1" stroke-dasharray="1 1"><line x1="573.5" y1="427" x2="573.5" y2="871"/><line x1="5" y1="870.5" x2="574" y2="870.5"/></g><line x1="4.5" y1="427" x2="4.5" y2="871" stroke="#888" stroke-width="1"/></g>
</svg></body></html>
